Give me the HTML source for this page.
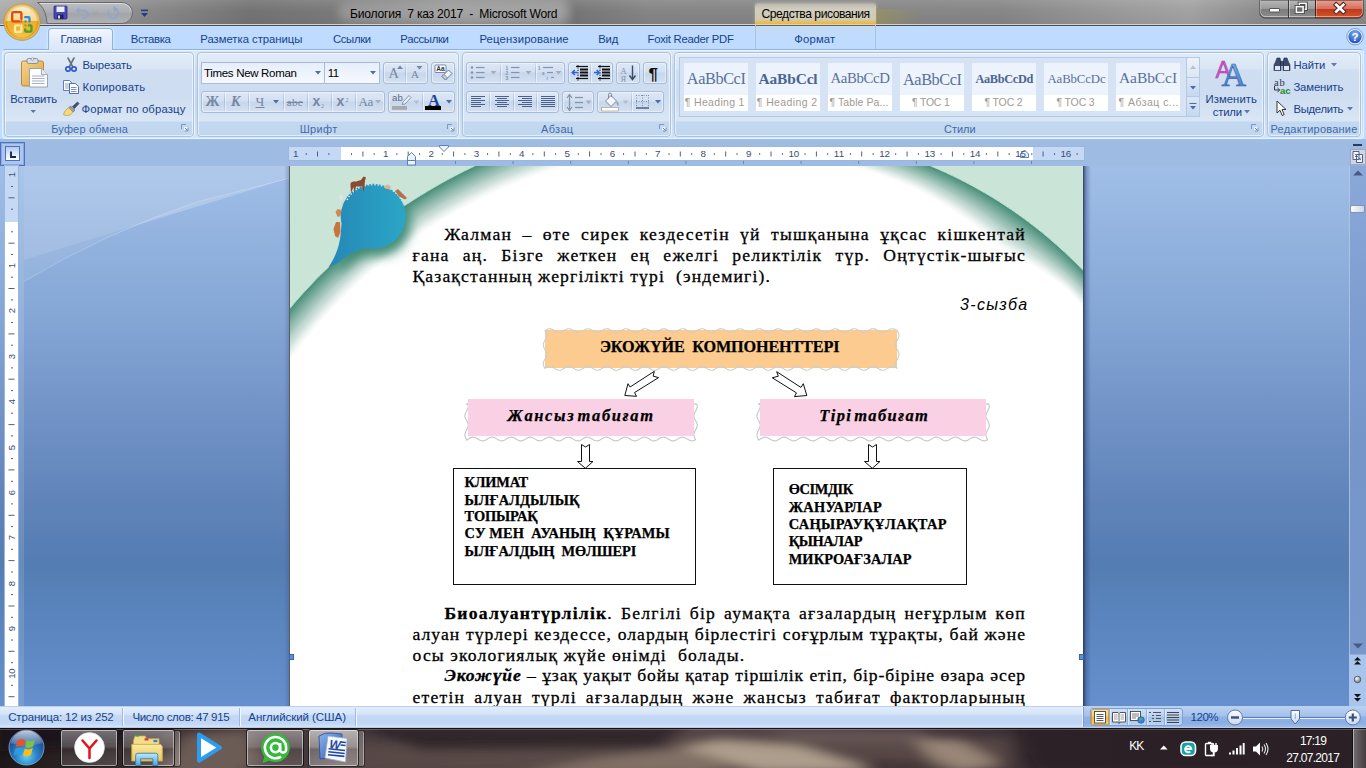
<!DOCTYPE html>
<html lang="kk"><head><meta charset="utf-8"><title>Биология 7 каз 2017 - Microsoft Word</title>
<style>
html,body{margin:0;padding:0;background:#000;}
body{width:1366px;height:768px;overflow:hidden;}
#screen{position:relative;width:1366px;height:768px;overflow:hidden;background:#BFDBFF;font-family:"Liberation Sans",sans-serif;}
.a{position:absolute;display:block;}
.t{position:absolute;white-space:pre;line-height:1;}
svg{position:absolute;overflow:visible;}
.grp{position:absolute;top:52px;height:85px;box-sizing:border-box;border:1px solid #a9c3e6;border-radius:4px;background:linear-gradient(180deg,#e2ecf8 0,#d9e5f4 16px,#cfdef1 17px,#cddcf0 40px,#d9e6f5 68px,#c2d8f0 69px,#c0d7f0 100%);box-shadow:inset 0 0 0 1px rgba(255,255,255,.55),1px 0 0 rgba(255,255,255,.6);}
.bg{position:absolute;box-sizing:border-box;border:1px solid #a7bcd9;border-radius:3px;background:linear-gradient(180deg,#dde8f6 0,#d3e0f2 45%,#c6d6ec 50%,#d4e1f2 100%);box-shadow:inset 0 0 0 1px rgba(255,255,255,.45);}
.sep{position:absolute;width:1px;background:linear-gradient(180deg,rgba(167,188,217,.2),#a7bcd9 50%,rgba(167,188,217,.2));box-shadow:1px 0 0 rgba(255,255,255,.5);}
.cb{position:absolute;box-sizing:border-box;border:1px solid #a7bcd9;background:linear-gradient(180deg,#e6eef9 0,#eef4fc 50%,#f6f9fe 100%);}
.ln{-webkit-text-stroke:0.3px #000;position:absolute;white-space:nowrap;line-height:1;font-family:"Liberation Serif",serif;font-size:17.6px;color:#000;text-align:justify;text-align-last:justify;box-sizing:border-box;}
.ln.l{text-align:left;text-align-last:left;white-space:pre;}
.bx{position:absolute;white-space:pre;line-height:1;font-family:"Liberation Serif",serif;font-weight:bold;color:#000;}

</style></head>
<body>
<div id="screen">
<div class="a" id="titlebar" style="left:0;top:0;width:1366px;height:24px;background:linear-gradient(90deg,#adadad 0,#a3a3a3 40px,#8a8a8a 150px,#747474 250px,#7a7a7a 330px,#8f8f8f 450px,#8a8a8a 560px,#777 575px,#868686 650px,#878787 1000px,#9c9c9c 1130px,#a3a3a3 1190px,#8d8d8d 1260px,#8a8a8a 1366px);"></div>
<div class="a" style="left:0;top:0;width:1366px;height:24px;background:linear-gradient(180deg,rgba(255,255,255,.10) 0,rgba(255,255,255,0) 10px,rgba(0,0,0,.05) 24px);"></div><div class="a" style="left:0;top:24px;width:1366px;height:1px;background:#d2d2d2;"></div><div class="a" style="left:0;top:25px;width:1366px;height:1px;background:#4c4c4c;"></div>
<div class="a" style="left:338px;top:3px;width:232px;height:19px;border-radius:9px;background:rgba(255,255,255,.20);filter:blur(4px);"></div>
<svg style="left:30px;top:0" width="110" height="26" viewBox="0 0 110 26"><defs><linearGradient id="qp" x1="0" y1="0" x2="0" y2="1"><stop offset="0" stop-color="#bcbfc2"/><stop offset=".45" stop-color="#abaeb2"/><stop offset=".55" stop-color="#a2a5a9"/><stop offset="1" stop-color="#b0b3b6"/></linearGradient></defs>
<path d="M7.500 2.500 H92 a10.500 10.500 0 0 1 0 21 H17 C16.500 14 13.500 7 7.500 2.500 Z" fill="url(#qp)" stroke="#6b6670" stroke-width="1"/><path d="M10 3.500 H92 a9.500 9.500 0 0 1 9.400 8" fill="none" stroke="#fff" stroke-opacity=".45"/></svg>
<div class="a" style="left:755px;top:4px;width:121px;height:20px;background:linear-gradient(180deg,rgba(226,222,204,.55) 0,rgba(222,217,198,.85) 25%,rgba(216,210,188,.9) 78%,#e9be55 90%,#f2b535 100%);box-shadow:0 -1px 3px rgba(226,222,204,.55);border-radius:2px 2px 0 0;"></div>
<div class="a" style="left:876px;top:9px;width:44px;height:15px;background:linear-gradient(90deg,rgba(160,150,80,.55),rgba(160,150,80,0));"></div>
<div class="a" id="tabrow" style="left:0;top:26px;width:1366px;height:25px;background:#BFDBFF;"></div>
<div class="a" style="left:755px;top:25px;width:121px;height:25px;background:linear-gradient(180deg,rgba(235,215,150,.18),rgba(191,219,255,0) 45%);border-left:1px solid #a9c2e4;border-right:1px solid #a9c2e4;box-sizing:border-box;"></div>
<div class="a" style="left:48px;top:28px;width:65px;height:22px;border-radius:4px 4px 0 0;background:linear-gradient(180deg,#f2f7fe 0,#e3edfb 50%,#dbe7f7 100%);border:1px solid #8db2e3;border-bottom:none;box-sizing:border-box;box-shadow:0 0 3px rgba(255,255,255,.9);"></div>
<svg style="left:0;top:0" width="48" height="48" viewBox="0 0 48 48">
<defs><linearGradient id="ob" x1="0" y1="0" x2="0" y2="1"><stop offset="0" stop-color="#fdf3d3"/><stop offset=".46" stop-color="#f9d78e"/><stop offset=".47" stop-color="#f1ab29"/><stop offset=".8" stop-color="#f4b535"/><stop offset="1" stop-color="#fbd264"/></linearGradient>
<radialGradient id="obg" cx="50%" cy="50%" r="50%"><stop offset=".82" stop-color="#000" stop-opacity="0"/><stop offset="1" stop-color="#b5700c" stop-opacity=".35"/></radialGradient></defs>
<circle cx="22" cy="22.600" r="18.400" fill="#5b5b66" opacity=".35"/>
<circle cx="22" cy="22" r="17.500" fill="url(#ob)"/><circle cx="22" cy="22" r="17.500" fill="url(#obg)"/>
<circle cx="22" cy="22" r="17.300" fill="none" stroke="#f7c22f" stroke-width="1.300"/><circle cx="22" cy="22" r="18" fill="none" stroke="#b98a2e" stroke-width=".5"/>
<g fill="none" stroke-width="2.300" stroke-linejoin="round" stroke-linecap="round">
<path d="M19.300 21.400 H13.400 a1.200 1.200 0 0 1 -1.200 -1.200 V13.400 a1.200 1.200 0 0 1 1.200 -1.200 h6.800 a1.200 1.200 0 0 1 1.200 1.200 V19" stroke="#dd4a12"/>
<path d="M25.200 17.200 h3.300 a1 1 0 0 1 1 1 v3.300" stroke="#2b8be0"/>
<path d="M21.400 27 V31 a1 1 0 0 1 -1 1 h-4.400 a1 1 0 0 1 -1 -1 v-4.600 a1 1 0 0 1 1 -1 h3" stroke="#fbe9a6"/>
<path d="M25.200 29.300 v1.400 a1 1 0 0 0 1 1 h4.300 a1 1 0 0 0 1 -1 v-4.300 a1 1 0 0 0 -1 -1 h-1.500" stroke="#4aa02c"/>
</g>
<circle cx="21.400" cy="21.400" r="1.150" fill="#e8501a"/><circle cx="25.500" cy="21.400" r="1.150" fill="#2b8be0"/><circle cx="21.400" cy="25.500" r="1.150" fill="#fbe9a6"/><circle cx="25.500" cy="25.500" r="1.150" fill="#63b93a"/>
</svg>
<svg style="left:50px;top:4px" width="100" height="18" viewBox="0 0 100 18">
<rect x="4" y="2" width="13" height="13" rx="1" fill="#4b46b6" stroke="#2d2a7a" stroke-width=".8"/><rect x="6.5" y="2.5" width="8" height="5.5" fill="#e9ecf8"/><rect x="7" y="10.5" width="6.5" height="4.5" fill="#23225a"/><rect x="8" y="11.5" width="2" height="3" fill="#d8dbf0"/>
<path d="M27.5 6.5 h6.5 a3.6 3.6 0 0 1 0 7.4 h-2" fill="none" stroke="#93a6c9" stroke-width="2"/><path d="M29.5 3 L25.5 6.6 L29.5 10.2 Z" fill="#93a6c9"/>
<path d="M43 7 l2.3 2.6 L47.6 7" fill="none" stroke="#9aa6b8" stroke-width="1.1"/>
<path d="M66.5 5.5 a5 5 0 1 1 -7.4 1" fill="none" stroke="#93a6c9" stroke-width="2"/><path d="M63.2 2.2 L68.2 4.8 L64 8.4 Z" fill="#93a6c9"/>
<rect x="91" y="5.6" width="7" height="1.6" fill="#1d3f8a"/><path d="M91 9 h7 l-3.5 4 z" fill="#1d3f8a"/>
</svg>
<svg style="left:1258px;top:0" width="108" height="22" viewBox="0 0 108 22">
<defs><linearGradient id="wc1" x1="0" y1="0" x2="0" y2="1"><stop offset="0" stop-color="#b9b9b9"/><stop offset=".48" stop-color="#9a9a9a"/><stop offset=".5" stop-color="#7c7c7c"/><stop offset="1" stop-color="#8d8d8d"/></linearGradient>
<linearGradient id="wc2" x1="0" y1="0" x2="0" y2="1"><stop offset="0" stop-color="#e7a293"/><stop offset=".48" stop-color="#d4705c"/><stop offset=".5" stop-color="#c2371b"/><stop offset="1" stop-color="#d2562f"/></linearGradient></defs>
<path d="M2 0 V13 a5 5 0 0 0 5 5 H57.5 V0 Z" fill="url(#wc1)" stroke="#3d3d3d" stroke-width="1"/>
<path d="M57.5 0 V18 H100 a5 5 0 0 0 5 -5 V0 Z" fill="url(#wc2)" stroke="#3d2020" stroke-width="1"/>
<path d="M2.5 0 V13 a4.5 4.5 0 0 0 4.500 4.500 H100 a4.500 4.500 0 0 0 4.500 -4.500 V0" fill="none" stroke="rgba(255,255,255,.45)" stroke-width="1" transform="translate(0,-1)"/>
<line x1="30.5" y1="0" x2="30.500" y2="18" stroke="#3d3d3d"/><line x1="31.5" y1="0" x2="31.500" y2="17" stroke="rgba(255,255,255,.35)"/>
<line x1="58.5" y1="0" x2="58.500" y2="17" stroke="rgba(255,255,255,.35)"/>
<rect x="11.5" y="8.500" width="10" height="3.500" fill="#fff" stroke="#4a4a4a" stroke-width=".9" rx=".5"/>
<rect x="41.300" y="3.300" width="6.800" height="6" fill="none" stroke="#3f3f3f" stroke-width="3.200"/><rect x="41.300" y="3.300" width="6.800" height="6" fill="none" stroke="#fff" stroke-width="1.500"/>
<rect x="38.300" y="6.600" width="6.800" height="5.800" fill="#777" stroke="#3f3f3f" stroke-width="3.200"/><rect x="38.300" y="6.600" width="6.800" height="5.800" fill="#6a6a6a" stroke="#fff" stroke-width="1.500"/>
<path d="M78.200 4.800 L85.300 11.500 M85.300 4.800 L78.200 11.500" stroke="#4a201a" stroke-width="4.600" stroke-linecap="square"/><path d="M78.200 4.800 L85.300 11.500 M85.300 4.800 L78.200 11.500" stroke="#fff" stroke-width="2.700" stroke-linecap="square"/>
</svg>
<svg style="left:1346px;top:28px" width="18" height="18" viewBox="0 0 18 18"><defs><radialGradient id="hp" cx="50%" cy="30%" r="70%"><stop offset="0" stop-color="#7fb0f5"/><stop offset="1" stop-color="#1749b8"/></radialGradient></defs><circle cx="9" cy="8.700" r="7.300" fill="url(#hp)" stroke="#e8f0ff" stroke-width="1.300"/><circle cx="9" cy="8.700" r="8.200" fill="none" stroke="#5b80c4" stroke-width=".7"/><text x="9" y="12.800" text-anchor="middle" font-family="Liberation Sans, sans-serif" font-weight="bold" font-size="11.500" fill="#fff">?</text></svg>
<span class="t" style='left:350.0px;top:8px;font-size:12.1px;color:#000;letter-spacing:-0.226px;'>Биология  7 каз 2017  -  Microsoft Word</span>
<span class="t" style='left:761.5px;top:8px;font-size:12.1px;color:#000;letter-spacing:-0.452px;'>Средства рисования</span>
<span class="t" style='left:60.5px;top:34px;font-size:11.3px;color:#15428B;letter-spacing:-0.286px;'>Главная</span>
<span class="t" style='left:130.7px;top:34px;font-size:11.3px;color:#15428B;letter-spacing:-0.314px;'>Вставка</span>
<span class="t" style='left:200.3px;top:34px;font-size:11.3px;color:#15428B;letter-spacing:-0.023px;'>Разметка страницы</span>
<span class="t" style='left:333.0px;top:34px;font-size:11.3px;color:#15428B;letter-spacing:-0.347px;'>Ссылки</span>
<span class="t" style='left:400.3px;top:34px;font-size:11.3px;color:#15428B;letter-spacing:-0.302px;'>Рассылки</span>
<span class="t" style='left:479.4px;top:34px;font-size:11.3px;color:#15428B;letter-spacing:0.155px;'>Рецензирование</span>
<span class="t" style='left:598.3px;top:34px;font-size:11.3px;color:#15428B;letter-spacing:-0.246px;'>Вид</span>
<span class="t" style='left:647.5px;top:34px;font-size:11.3px;color:#15428B;letter-spacing:-0.269px;'>Foxit Reader PDF</span>
<span class="t" style='left:794.3px;top:34px;font-size:11.3px;color:#15428B;letter-spacing:0.143px;'>Формат</span>
<div class="a" id="ribbon" style="left:2px;top:49px;width:1362px;height:90px;box-sizing:border-box;border:1px solid #8db2e3;border-bottom:1.500px solid #e4fbff;border-left-color:#dff4ff;border-right-color:#dff4ff;border-radius:4px;background:linear-gradient(180deg,#dbe7f6 0,#cbdcf1 18px,#c4d7ef 50px,#d3e2f5 100%);box-shadow:inset 0 1px 0 #eef4fc;"></div>
<div class="a" style="left:49px;top:49px;width:63px;height:2px;background:#dbe7f7;"></div>
<div class="grp" style="left:4px;width:190px;"></div>
<div class="grp" style="left:197px;width:262px;"></div>
<div class="grp" style="left:462px;width:209px;"></div>
<div class="grp" style="left:674px;width:590px;"></div>
<div class="grp" style="left:1267px;width:94px;"></div>
<svg style="left:180.5px;top:124px" width="8" height="8" viewBox="0 0 8 8"><path d="M.5 5 V.5 H5" fill="none" stroke="#7f98c0"/><path d="M3 3 h4.500 v4.500 h-4.500 z" fill="#fff" opacity=".7"/><path d="M7 3.500 V7 H3.500 M4 4 L6.500 6.500" fill="none" stroke="#6a86b0"/></svg>
<svg style="left:447px;top:124px" width="8" height="8" viewBox="0 0 8 8"><path d="M.5 5 V.5 H5" fill="none" stroke="#7f98c0"/><path d="M3 3 h4.500 v4.500 h-4.500 z" fill="#fff" opacity=".7"/><path d="M7 3.500 V7 H3.500 M4 4 L6.500 6.500" fill="none" stroke="#6a86b0"/></svg>
<svg style="left:659px;top:124px" width="8" height="8" viewBox="0 0 8 8"><path d="M.5 5 V.5 H5" fill="none" stroke="#7f98c0"/><path d="M3 3 h4.500 v4.500 h-4.500 z" fill="#fff" opacity=".7"/><path d="M7 3.500 V7 H3.500 M4 4 L6.500 6.500" fill="none" stroke="#6a86b0"/></svg>
<svg style="left:1251px;top:124px" width="8" height="8" viewBox="0 0 8 8"><path d="M.5 5 V.5 H5" fill="none" stroke="#7f98c0"/><path d="M3 3 h4.500 v4.500 h-4.500 z" fill="#fff" opacity=".7"/><path d="M7 3.500 V7 H3.500 M4 4 L6.500 6.500" fill="none" stroke="#6a86b0"/></svg>
<svg style="left:18px;top:56px" width="34" height="60" viewBox="0 0 34 60">
<defs><linearGradient id="cbd" x1="0" y1="0" x2="1" y2="1"><stop offset="0" stop-color="#f6d48c"/><stop offset="1" stop-color="#d9a441"/></linearGradient></defs>
<rect x="3.5" y="5" width="22" height="25" rx="2" fill="url(#cbd)" stroke="#b78a3c"/>
<rect x="9" y="2.500" width="11" height="5" rx="1.500" fill="#d9dde6" stroke="#7a7f8c" stroke-width=".8"/><circle cx="14.500" cy="3" r="1.300" fill="#f4f4f4" stroke="#7a7f8c" stroke-width=".6"/>
<path d="M11.500 12.500 H23.500 L29.500 18.500 V31 H11.500 Z" fill="#fdfdfe" stroke="#8f9bb3" stroke-width=".9"/><path d="M23.500 12.500 V18.500 H29.500" fill="#e4e9f2" stroke="#8f9bb3" stroke-width=".8"/>
<g stroke="#9aa7be" stroke-width=".9"><line x1="14" y1="20" x2="26.500" y2="20"/><line x1="14" y1="22.500" x2="26.500" y2="22.500"/><line x1="14" y1="25" x2="26.500" y2="25"/><line x1="14" y1="27.500" x2="26.500" y2="27.500"/></g>
<path d="M12.500 54 h5.400 l-2.700 3 z" fill="#5772a3"/></svg>
<svg style="left:64px;top:57px" width="14" height="16" viewBox="0 0 14 16"><path d="M4 1 L8.800 10 M10 1 L5.200 10" stroke="#6b7078" stroke-width="1.600" stroke-linecap="round"/><circle cx="4" cy="12" r="2.200" fill="none" stroke="#2f5bd0" stroke-width="1.700"/><circle cx="10" cy="12" r="2.200" fill="none" stroke="#2f5bd0" stroke-width="1.700"/></svg>
<svg style="left:62px;top:79px" width="18" height="16" viewBox="0 0 18 16"><path d="M1.500 1.500 h6 l3 3 v7 h-9 z" fill="#fff" stroke="#5570a8" stroke-width=".9"/><g stroke="#6f88bd" stroke-width=".8"><line x1="3" y1="5" x2="8" y2="5"/><line x1="3" y1="7" x2="8" y2="7"/><line x1="3" y1="9" x2="8" y2="9"/></g><path d="M7.500 4.500 h6 l3 3 v7 h-9 z" fill="#fff" stroke="#3f5fa5" stroke-width=".9"/><g stroke="#4f73c2" stroke-width=".8"><line x1="9" y1="8.500" x2="14.500" y2="8.500"/><line x1="9" y1="10.500" x2="14.500" y2="10.500"/><line x1="9" y1="12.500" x2="14.500" y2="12.500"/></g></svg>
<svg style="left:62px;top:101px" width="18" height="16" viewBox="0 0 18 16"><path d="M10.500 5.500 L15.500 1 L17 2.600 L12.500 7.500 Z" fill="#4a4f7a" stroke="#2d3055" stroke-width=".6"/><path d="M8.500 5 L13 9.200 L11 11 L6.800 6.800 Z" fill="#9aa0ad" stroke="#5c6270" stroke-width=".6"/><path d="M6.800 6.800 L11 11 C9 14.500 5 15.500 1.500 13.500 C2.500 10.500 4 8 6.800 6.800 Z" fill="#f3d97a" stroke="#b5963a" stroke-width=".7"/></svg>
<div class="cb" style="left:201px;top:62px;width:124px;height:22px;"></div>
<div class="cb" style="left:324px;top:62px;width:56px;height:22px;"></div>
<svg style="left:314.5px;top:71px" width="6" height="4"><path d="M0 0 h6 l-3 3.500 z" fill="#4d6da3"/></svg>
<svg style="left:369.5px;top:71px" width="6" height="4"><path d="M0 0 h6 l-3 3.500 z" fill="#4d6da3"/></svg>
<div class="bg" style="left:383px;top:62px;width:45px;height:22px;"></div><div class="sep" style="left:405px;top:63px;height:20px;"></div>
<div class="bg" style="left:431px;top:62px;width:24px;height:22px;"></div>
<div class="bg" style="left:201px;top:91px;width:184px;height:22px;"></div>
<div class="sep" style="left:224px;top:92px;height:20px;"></div>
<div class="sep" style="left:248px;top:92px;height:20px;"></div>
<div class="sep" style="left:282.5px;top:92px;height:20px;"></div>
<div class="sep" style="left:306.5px;top:92px;height:20px;"></div>
<div class="sep" style="left:330.5px;top:92px;height:20px;"></div>
<div class="sep" style="left:354.5px;top:92px;height:20px;"></div>
<div class="bg" style="left:388px;top:91px;width:67px;height:22px;"></div><div class="sep" style="left:422px;top:92px;height:20px;"></div>
<svg style="left:397px;top:65px" width="26" height="6"><path d="M0 4 l3 -3.500 l3 3.500 z" fill="#78869f"/><path d="M19.500 1 l3 3.500 l3 -3.500 z" fill="#78869f"/></svg>
<svg style="left:434px;top:64px" width="19" height="18" viewBox="0 0 19 18"><rect x="1" y="1" width="11" height="7.500" rx="1" fill="#fff" stroke="#5d6f92" stroke-width=".8"/><text x="2.300" y="7.300" font-family="Liberation Sans, sans-serif" font-size="6.500" font-weight="bold" fill="#26304a">Аа</text><path d="M8 12.500 L14.500 6 L18 9.500 L11.500 16 Z" fill="#f1f3f8" stroke="#5d6f92" stroke-width=".9"/><path d="M8 12.500 L10 10.500 L13.500 14 L11.500 16 Z" fill="#c9cfdd" stroke="#5d6f92" stroke-width=".7"/></svg>
<svg style="left:273px;top:100px" width="6" height="4"><path d="M0 0 h6 l-3 3.500 z" fill="#4d6da3"/></svg>
<svg style="left:375px;top:100px" width="6" height="4"><path d="M0 0 h6 l-3 3.500 z" fill="#a9adb8"/></svg>
<svg style="left:391px;top:93px" width="30" height="19" viewBox="0 0 30 19"><path d="M12 9 L18 2.500 L20 4.500 L14 11 L11.300 11.500 Z" fill="#eef1f7" stroke="#6d7a96" stroke-width=".8"/><rect x="1" y="13" width="15" height="3.800" fill="#a9a9a9"/><path d="M22.500 7.500 h6 l-3 3.500 z" fill="#b9bcc6"/></svg>
<div class="a" style="left:425px;top:106px;width:16px;height:4px;background:#000;"></div>
<svg style="left:445.5px;top:100px" width="6" height="4"><path d="M0 0 h6 l-3 3.500 z" fill="#4d6da3"/></svg>
<span class="t" style='left:51.2px;top:124px;font-size:11px;color:#3e6aaa;letter-spacing:0.171px;'>Буфер обмена</span>
<span class="t" style='left:299.7px;top:124px;font-size:11px;color:#3e6aaa;letter-spacing:0.339px;'>Шрифт</span>
<span class="t" style='left:541.0px;top:124px;font-size:11px;color:#3e6aaa;letter-spacing:0.328px;'>Абзац</span>
<span class="t" style='left:944.0px;top:124px;font-size:11px;color:#3e6aaa;letter-spacing:-0.041px;'>Стили</span>
<span class="t" style='left:1270.5px;top:124px;font-size:11px;color:#3e6aaa;letter-spacing:0.236px;'>Редактирование</span>
<span class="t" style='left:10.2px;top:94px;font-size:11.3px;color:#15428B;letter-spacing:-0.136px;'>Вставить</span>
<span class="t" style='left:82.4px;top:60px;font-size:11.3px;color:#15428B;letter-spacing:-0.106px;'>Вырезать</span>
<span class="t" style='left:82.4px;top:82px;font-size:11.3px;color:#15428B;letter-spacing:0.227px;'>Копировать</span>
<span class="t" style='left:81.6px;top:104px;font-size:11.3px;color:#15428B;letter-spacing:0.153px;'>Формат по образцу</span>
<span class="t" style='left:204.0px;top:68px;font-size:11.5px;color:#000;letter-spacing:-0.317px;'>Times New Roman</span>
<span class="t" style='left:327.7px;top:68px;font-size:11.5px;color:#000;letter-spacing:-0.527px;'>11</span>
<span class="t" style='left:388.6px;top:66px;font-size:14.5px;color:#78869f;font-family:"Liberation Serif", serif;letter-spacing:-0.084px;'>A</span>
<span class="t" style='left:411.0px;top:69px;font-size:11px;color:#78869f;font-family:"Liberation Serif", serif;letter-spacing:-1.353px;'>A</span>
<span class="t" style='left:205.5px;top:95px;font-size:14px;color:#78869f;font-family:"Liberation Serif", serif;font-weight:bold;letter-spacing:0.656px;'>Ж</span>
<span class="t" style='left:231.0px;top:95px;font-size:14px;color:#78869f;font-family:"Liberation Serif", serif;font-weight:bold;font-style:italic;letter-spacing:2.500px;'>К</span>
<span class="t" style='left:255.6px;top:95px;font-size:13.5px;color:#78869f;font-family:"Liberation Serif", serif;letter-spacing:0.119px;text-decoration:underline;'>Ч</span>
<span class="t" style='left:286.8px;top:97px;font-size:11px;color:#78869f;font-family:"Liberation Serif", serif;letter-spacing:0.311px;text-decoration:line-through;'>abc</span>
<span class="t" style='left:312.5px;top:94px;font-size:14px;color:#78869f;font-weight:bold;letter-spacing:-0.297px;'>x</span>
<span class="t" style='left:321.0px;top:103px;font-size:6px;color:#78869f;font-family:"Liberation Serif", serif;'>2</span>
<span class="t" style='left:336.5px;top:94px;font-size:14px;color:#78869f;font-weight:bold;letter-spacing:-0.297px;'>x</span>
<span class="t" style='left:345.5px;top:97px;font-size:6px;color:#78869f;font-family:"Liberation Serif", serif;'>2</span>
<span class="t" style='left:358.5px;top:95px;font-size:13px;color:#78869f;font-family:"Liberation Serif", serif;letter-spacing:-0.336px;'>Aa</span>
<span class="t" style='left:392.0px;top:93px;font-size:9.5px;color:#5a6784;letter-spacing:0.211px;'>ab</span>
<span class="t" style='left:428.0px;top:93px;font-size:16.5px;color:#1f3f9e;font-family:"Liberation Serif", serif;font-weight:bold;letter-spacing:-0.922px;'>A</span>
<div class="bg" style="left:466px;top:62px;width:99px;height:22px;"></div>
<div class="sep" style="left:499.5px;top:63px;height:20px;"></div>
<div class="sep" style="left:534.5px;top:63px;height:20px;"></div>
<div class="bg" style="left:568px;top:62px;width:45px;height:22px;"></div><div class="sep" style="left:590px;top:63px;height:20px;"></div>
<div class="bg" style="left:616px;top:62px;width:24px;height:22px;"></div>
<div class="bg" style="left:643px;top:62px;width:24px;height:22px;"></div>
<svg style="left:470px;top:65px" width="92" height="17" viewBox="0 0 92 17">
<g fill="#8593ab"><circle cx="2" cy="2.500" r="1.300"/><circle cx="2" cy="7.500" r="1.300"/><circle cx="2" cy="12.500" r="1.300"/></g>
<g stroke="#8593ab" stroke-width="1.200"><line x1="6" y1="2.500" x2="14.500" y2="2.500"/><line x1="6" y1="7.500" x2="14.500" y2="7.500"/><line x1="6" y1="12.500" x2="14.500" y2="12.500"/></g>
<path d="M20.500 6 h6 l-3 3.500 z" fill="#a9adb8"/>
<g stroke="#8593ab" stroke-width="1.200"><line x1="41" y1="2.500" x2="49.500" y2="2.500"/><line x1="41" y1="7.500" x2="49.500" y2="7.500"/><line x1="41" y1="12.500" x2="49.500" y2="12.500"/></g>
<g font-family="Liberation Sans, sans-serif" font-size="5" fill="#8593ab" font-weight="bold"><text x="35.500" y="4.500">1</text><text x="35.500" y="9.500">2</text><text x="35.500" y="14.500">3</text></g>
<path d="M55.500 6 h6 l-3 3.500 z" fill="#a9adb8"/>
<g stroke="#8593ab" stroke-width="1.200"><line x1="73" y1="2.500" x2="83" y2="2.500"/><line x1="77" y1="7.500" x2="83" y2="7.500"/><line x1="81" y1="12.500" x2="84" y2="12.500"/></g>
<g font-family="Liberation Sans, sans-serif" font-size="4.500" fill="#8593ab" font-weight="bold"><text x="68" y="4.500">1</text><text x="72" y="9.500">a</text><text x="76.500" y="14.500">i</text></g>
<path d="M85.500 6 h6 l-3 3.500 z" fill="#a9adb8"/></svg>
<svg style="left:570.5px;top:65px" width="18" height="17" viewBox="0 0 18 17"><g stroke="#111"><line x1="5" y1="1.500" x2="17" y2="1.500" stroke-width="1.200"/><line x1="9" y1="4.500" x2="17" y2="4.500" stroke-width="2"/><line x1="9" y1="7.500" x2="17" y2="7.500" stroke-width="2"/><line x1="9" y1="10.500" x2="17" y2="10.500" stroke-width="2"/><line x1="5" y1="13.500" x2="17" y2="13.500" stroke-width="1.200"/></g><line x1="7" y1="0" x2="7" y2="16" stroke="#111" stroke-width="1" stroke-dasharray="1.200 1.200"/><path d="M6.500 7.500 H1.500 M3.800 5 L1.200 7.500 L3.800 10" fill="none" stroke="#2b62d9" stroke-width="1.500"/></svg>
<svg style="left:592.5px;top:65px" width="18" height="17" viewBox="0 0 18 17"><g stroke="#111"><line x1="5" y1="1.500" x2="17" y2="1.500" stroke-width="1.200"/><line x1="9" y1="4.500" x2="17" y2="4.500" stroke-width="2"/><line x1="9" y1="7.500" x2="17" y2="7.500" stroke-width="2"/><line x1="9" y1="10.500" x2="17" y2="10.500" stroke-width="2"/><line x1="5" y1="13.500" x2="17" y2="13.500" stroke-width="1.200"/></g><line x1="7" y1="0" x2="7" y2="16" stroke="#111" stroke-width="1" stroke-dasharray="1.200 1.200"/><path d="M1 7.500 H6 M3.700 5 L6.300 7.500 L3.700 10" fill="none" stroke="#2b62d9" stroke-width="1.500"/></svg>
<svg style="left:628px;top:65px" width="9" height="16" viewBox="0 0 9 16"><path d="M4.500 0.500 V14 M1.500 10.500 L4.500 14.500 L7.500 10.500" fill="none" stroke="#3d4a66" stroke-width="1.400"/></svg>
<div class="bg" style="left:466px;top:91px;width:93px;height:22px;"></div>
<div class="sep" style="left:489px;top:92px;height:20px;"></div>
<div class="sep" style="left:512.5px;top:92px;height:20px;"></div>
<div class="sep" style="left:535.5px;top:92px;height:20px;"></div>
<div class="bg" style="left:562px;top:91px;width:32px;height:22px;"></div>
<div class="bg" style="left:597px;top:91px;width:67px;height:22px;"></div><div class="sep" style="left:630.500px;top:92px;height:20px;"></div>
<svg style="left:471px;top:95px" width="14" height="15" viewBox="0 0 14 15"><g stroke="#4b5f8a" stroke-width="1"><line x1="0" y1="1.5" x2="14" y2="1.5"/><line x1="0" y1="3.5" x2="10" y2="3.5"/><line x1="0" y1="5.5" x2="14" y2="5.5"/><line x1="0" y1="7.5" x2="10" y2="7.5"/><line x1="0" y1="9.5" x2="14" y2="9.5"/><line x1="0" y1="11.5" x2="10" y2="11.5"/></g></svg>
<svg style="left:494.5px;top:95px" width="14" height="15" viewBox="0 0 14 15"><g stroke="#4b5f8a" stroke-width="1"><line x1="0" y1="1.5" x2="14" y2="1.5"/><line x1="2" y1="3.5" x2="12" y2="3.5"/><line x1="0" y1="5.5" x2="14" y2="5.5"/><line x1="2" y1="7.5" x2="12" y2="7.5"/><line x1="0" y1="9.5" x2="14" y2="9.5"/><line x1="2" y1="11.5" x2="12" y2="11.5"/></g></svg>
<svg style="left:518px;top:95px" width="14" height="15" viewBox="0 0 14 15"><g stroke="#4b5f8a" stroke-width="1"><line x1="0" y1="1.5" x2="14" y2="1.5"/><line x1="4" y1="3.5" x2="14" y2="3.5"/><line x1="0" y1="5.5" x2="14" y2="5.5"/><line x1="4" y1="7.5" x2="14" y2="7.5"/><line x1="0" y1="9.5" x2="14" y2="9.5"/><line x1="4" y1="11.5" x2="14" y2="11.5"/></g></svg>
<svg style="left:541px;top:95px" width="14" height="15" viewBox="0 0 14 15"><g stroke="#4b5f8a" stroke-width="1"><line x1="0" y1="1.5" x2="14" y2="1.5"/><line x1="0" y1="3.5" x2="14" y2="3.5"/><line x1="0" y1="5.5" x2="14" y2="5.5"/><line x1="0" y1="7.5" x2="14" y2="7.5"/><line x1="0" y1="9.5" x2="14" y2="9.5"/><line x1="0" y1="11.5" x2="14" y2="11.5"/></g></svg>
<svg style="left:566px;top:93px" width="26" height="19" viewBox="0 0 26 19"><path d="M3.500 2 V17 M1 5 L3.500 1.500 L6 5 M1 14 L3.500 17.500 L6 14" fill="none" stroke="#8593ab" stroke-width="1.200"/><g stroke="#8593ab" stroke-width="1.300"><line x1="9" y1="4.500" x2="17" y2="4.500"/><line x1="9" y1="9.500" x2="17" y2="9.500"/><line x1="9" y1="14.500" x2="17" y2="14.500"/></g><path d="M19.500 7.500 h6 l-3 3.500 z" fill="#a9adb8"/></svg>
<svg style="left:600px;top:93px" width="30" height="19" viewBox="0 0 30 19"><path d="M5.500 8 L11 2.500 L16.500 8 L11 13.500 Z" fill="#f5f7fb" stroke="#6d7a96" stroke-width=".9"/><path d="M8.500 5.500 V1.500 a1.500 1.500 0 0 1 3 0 V4" fill="none" stroke="#6d7a96" stroke-width=".8"/><path d="M16.500 8 c2 1 2.500 3 2 5 c-1.500 -1 -2.500 -2.500 -2 -5z" fill="#8ea0c2"/><rect x="1.500" y="14.500" width="17" height="3.500" fill="#fdfdfd" stroke="#a8a08c" stroke-width=".7"/><path d="M22.500 7.500 h6 l-3 3.500 z" fill="#b9bcc6"/></svg>
<svg style="left:635px;top:94px" width="16" height="16" viewBox="0 0 16 16"><g stroke="#7f8ca8" stroke-width="1" stroke-dasharray="1 1.500"><line x1="1" y1="1.500" x2="14" y2="1.500"/><line x1="1" y1="7.500" x2="14" y2="7.500"/><line x1="1.500" y1="1" x2="1.500" y2="14"/><line x1="7.500" y1="1" x2="7.500" y2="14"/><line x1="13.500" y1="1" x2="13.500" y2="14"/></g><line x1="1" y1="14" x2="14" y2="14" stroke="#3b5079" stroke-width="1.300"/></svg>
<svg style="left:654.5px;top:100px" width="6" height="4"><path d="M0 0 h6 l-3 3.500 z" fill="#4d6da3"/></svg>
<div class="a" style="left:679px;top:57px;width:521px;height:60px;box-sizing:border-box;border:1px solid #b4c9e6;background:#d6e3f4;"></div>
<div class="a" style="left:684px;top:63px;width:64px;height:48px;background:linear-gradient(180deg,#edf3fd 0,#eef4fd 32px,#fff 32px,#fff 100%);overflow:hidden;"></div>
<div class="a" style="left:756px;top:63px;width:64px;height:48px;background:linear-gradient(180deg,#edf3fd 0,#eef4fd 32px,#fff 32px,#fff 100%);overflow:hidden;"></div>
<div class="a" style="left:828px;top:63px;width:64px;height:48px;background:linear-gradient(180deg,#edf3fd 0,#eef4fd 32px,#fff 32px,#fff 100%);overflow:hidden;"></div>
<div class="a" style="left:900px;top:63px;width:64px;height:48px;background:linear-gradient(180deg,#edf3fd 0,#eef4fd 32px,#fff 32px,#fff 100%);overflow:hidden;"></div>
<div class="a" style="left:972px;top:63px;width:64px;height:48px;background:linear-gradient(180deg,#edf3fd 0,#eef4fd 32px,#fff 32px,#fff 100%);overflow:hidden;"></div>
<div class="a" style="left:1044px;top:63px;width:64px;height:48px;background:linear-gradient(180deg,#edf3fd 0,#eef4fd 32px,#fff 32px,#fff 100%);overflow:hidden;"></div>
<div class="a" style="left:1116px;top:63px;width:64px;height:48px;background:linear-gradient(180deg,#edf3fd 0,#eef4fd 32px,#fff 32px,#fff 100%);overflow:hidden;"></div>
<div class="a" style="left:1186px;top:57px;width:14px;height:60px;box-sizing:border-box;border:1px solid #b4c9e6;background:linear-gradient(180deg,#eef2f8 0,#dde6f2 19px,#b4c9e6 19px,#b4c9e6 20px,#dbe7f6 20px,#c5d8ee 38px,#b4c9e6 38px,#b4c9e6 39px,#dbe7f6 39px,#c5d8ee 100%);border-radius:2px;"></div>
<svg style="left:1189px;top:58px" width="8" height="59" viewBox="0 0 8 59"><path d="M1 11 L4 7.500 L7 11 z" fill="#b8bfcb"/><path d="M1 28 h6 l-3 3.500 z" fill="#4d6da3"/><path d="M.5 45.500 h7" stroke="#4d6da3"/><path d="M1 48 h6 l-3 3.500 z" fill="#4d6da3"/></svg>
<svg style="left:1244.4px;top:109.5px" width="6" height="4"><path d="M0 0 h6 l-3 3.500 z" fill="#5c7bb0"/></svg>
<svg style="left:1212px;top:56px" width="38" height="34" viewBox="0 0 38 34"><defs><linearGradient id="ca" x1="0" y1="0" x2="0" y2="1"><stop offset="0" stop-color="#8fb6ea"/><stop offset="1" stop-color="#3f78c8"/></linearGradient></defs>
<text x="3.500" y="22" font-family="Liberation Sans, sans-serif" font-size="23" font-weight="normal" fill="#c858c4" stroke="#a636a4" stroke-width=".5">A</text>
<text x="9.500" y="30" font-family="Liberation Serif, serif" font-size="34" fill="url(#ca)" stroke="#2f64b3" stroke-width=".7">A</text></svg>
<svg style="left:1330.6px;top:62.5px" width="6" height="4"><path d="M0 0 h6 l-3 3.500 z" fill="#5c7bb0"/></svg>
<svg style="left:1347.2px;top:106.8px" width="6" height="4"><path d="M0 0 h6 l-3 3.500 z" fill="#5c7bb0"/></svg>
<svg style="left:1273px;top:57px" width="18" height="15" viewBox="0 0 18 15"><g fill="#3c4a6e" stroke="#202a45" stroke-width=".6"><path d="M2.500 5 L4 1 h3 L8 5 V13.500 H1 V8 Z"/><path d="M15.500 5 L14 1 h-3 L10 5 V13.500 H17 V8 Z"/><rect x="7.500" y="4.500" width="3" height="4"/></g><rect x="2" y="9" width="5" height="4" fill="#dfe6f3"/><rect x="11" y="9" width="5" height="4" fill="#dfe6f3"/></svg>
<svg style="left:1273px;top:86px" width="8" height="7" viewBox="0 0 8 7"><path d="M1.500 0 V4 H6.500 M4.500 2 L6.700 4 L4.500 6" fill="none" stroke="#2b3553" stroke-width="1"/></svg>
<svg style="left:1276px;top:100px" width="12" height="17" viewBox="0 0 12 17"><path d="M1 1 V13 L4 10.300 L6.200 15.500 L8.200 14.600 L6 9.500 H10 Z" fill="#fff" stroke="#222" stroke-width=".9" stroke-linejoin="round"/></svg>
<span class="t" style='left:620.5px;top:67px;font-size:8.5px;color:#8593ab;font-family:"Liberation Serif", serif;letter-spacing:-0.141px;'>А</span>
<span class="t" style='left:620.5px;top:75px;font-size:8.5px;color:#8593ab;font-family:"Liberation Serif", serif;letter-spacing:0.328px;'>Я</span>
<span class="t" style='left:648.5px;top:66px;font-size:17px;color:#111;font-weight:bold;letter-spacing:2.531px;'>¶</span>
<span class="t" style='left:686.8px;top:71px;font-size:16.3px;color:#58719b;font-family:"Liberation Serif", serif;letter-spacing:-0.414px;'>AaBbCcI</span>
<span class="t" style='left:684.8px;top:97px;font-size:10.5px;color:#a09a94;letter-spacing:0.324px;'>¶ Heading 1</span>
<span class="t" style='left:758.5px;top:71px;font-size:15.4px;color:#4b6590;font-family:"Liberation Serif", serif;font-weight:bold;letter-spacing:-0.123px;'>AaBbCcl</span>
<span class="t" style='left:756.8px;top:97px;font-size:10.5px;color:#a09a94;letter-spacing:0.388px;'>¶ Heading 2</span>
<span class="t" style='left:830.5px;top:71px;font-size:14.8px;color:#58719b;font-family:"Liberation Serif", serif;letter-spacing:-0.379px;'>AaBbCcD</span>
<span class="t" style='left:829.5px;top:97px;font-size:10.5px;color:#a09a94;letter-spacing:0.078px;'>¶ Table Pa...</span>
<span class="t" style='left:903.0px;top:72px;font-size:16.3px;color:#58719b;font-family:"Liberation Serif", serif;letter-spacing:-0.429px;'>AaBbCcI</span>
<span class="t" style='left:912.0px;top:97px;font-size:10.5px;color:#a09a94;letter-spacing:-0.230px;'>¶ TOC 1</span>
<span class="t" style='left:975.5px;top:73px;font-size:12.3px;color:#4b6590;font-family:"Liberation Serif", serif;font-weight:bold;letter-spacing:-0.330px;'>AaBbCcDd</span>
<span class="t" style='left:984.5px;top:97px;font-size:10.5px;color:#a09a94;letter-spacing:-0.158px;'>¶ TOC 2</span>
<span class="t" style='left:1047.5px;top:73px;font-size:12.8px;color:#58719b;font-family:"Liberation Serif", serif;letter-spacing:-0.125px;'>AaBbCcDc</span>
<span class="t" style='left:1056.5px;top:97px;font-size:10.5px;color:#a09a94;letter-spacing:-0.158px;'>¶ TOC 3</span>
<span class="t" style='left:1119.0px;top:70px;font-size:15.5px;color:#58719b;font-family:"Liberation Serif", serif;letter-spacing:-0.078px;'>AaBbCcI</span>
<span class="t" style='left:1118.5px;top:97px;font-size:10.5px;color:#a09a94;letter-spacing:0.464px;'>¶ Абзац с...</span>
<span class="t" style='left:1205.5px;top:94px;font-size:11.3px;color:#15428B;letter-spacing:0.066px;'>Изменить</span>
<span class="t" style='left:1212.7px;top:107px;font-size:11.3px;color:#15428B;letter-spacing:-0.189px;'>стили</span>
<span class="t" style='left:1293.4px;top:60px;font-size:11.3px;color:#15428B;letter-spacing:-0.050px;'>Найти</span>
<span class="t" style='left:1293.4px;top:82px;font-size:11.3px;color:#15428B;letter-spacing:-0.121px;'>Заменить</span>
<span class="t" style='left:1293.4px;top:104px;font-size:11.3px;color:#15428B;letter-spacing:-0.291px;'>Выделить</span>
<span class="t" style='left:1274.0px;top:78px;font-size:10.5px;color:#2b3553;font-family:"Liberation Serif", serif;letter-spacing:0.789px;'>ab</span>
<span class="t" style='left:1280.0px;top:86px;font-size:9.5px;color:#1c8a2c;font-weight:bold;letter-spacing:-0.039px;'>ac</span>
<div class="a" id="ws" style="left:0;top:139px;width:1366px;height:568px;background:linear-gradient(180deg,#a3bde5 0,#9dbbe3 4px,#9dbbe3 26px,#a0bee7 27px,#84a6d5 181px,#7495c8 261px,#6084ba 361px,#547db3 426px,#5882ba 461px,#6590cd 568px);"></div>
<svg style="left:0;top:165px" width="290" height="541" viewBox="0 0 290 541">
<path d="M24 1 H290 V13 L24 95 Z" fill="#fff" fill-opacity=".17"/>
<path d="M24 95 L290 13 L197.700 36.700 Q105 68 24 116.500 Z" fill="#fff" fill-opacity=".075"/>
<path d="M24 116.500 Q105 68 197.700 36.700 L290 13" fill="none" stroke="#fff" stroke-opacity=".22" stroke-width="1"/></svg>
<div class="a" style="left:19px;top:166px;width:5px;height:541px;background:rgba(255,255,255,.12);"></div>
<div class="a" style="left:0;top:142px;width:25px;height:24px;box-sizing:border-box;border:1px solid #4a72c4;border-left-width:1px;background:#aec6ea;box-shadow:inset 0 0 0 1px rgba(74,114,196,.35);"></div>
<div class="a" style="left:5px;top:146px;width:15px;height:15px;box-sizing:border-box;border:1px solid #4a72c4;background:linear-gradient(180deg,#b5caeb 0,#dbe6f6 50%,#fff 100%);"></div>
<svg style="left:9px;top:151px" width="8" height="8"><path d="M2 0.500 V6 H7" fill="none" stroke="#16265a" stroke-width="1.900"/></svg>
<div class="a" style="left:289px;top:147px;width:795px;height:13px;background:#c5d8f4;box-shadow:0 0 0 1px #9cb7df;"></div>
<div class="a" style="left:341px;top:147px;width:692px;height:13px;background:#fff;"></div>
<svg style="left:0;top:147px" width="1366" height="13" viewBox="0 0 1366 13"><g stroke="#4d6185" stroke-width="1"><line x1="306.2" y1="6.200" x2="306.2" y2="8"/><line x1="317.5" y1="4.500" x2="317.5" y2="9.500"/><line x1="328.9" y1="6.200" x2="328.9" y2="8"/><line x1="351.5" y1="6.200" x2="351.5" y2="8"/><line x1="362.9" y1="4.500" x2="362.9" y2="9.500"/><line x1="374.2" y1="6.200" x2="374.2" y2="8"/><line x1="396.9" y1="6.200" x2="396.9" y2="8"/><line x1="408.2" y1="4.500" x2="408.2" y2="9.500"/><line x1="419.6" y1="6.200" x2="419.6" y2="8"/><line x1="442.2" y1="6.200" x2="442.2" y2="8"/><line x1="453.6" y1="4.500" x2="453.6" y2="9.500"/><line x1="464.9" y1="6.200" x2="464.9" y2="8"/><line x1="487.6" y1="6.200" x2="487.6" y2="8"/><line x1="498.9" y1="4.500" x2="498.9" y2="9.500"/><line x1="510.3" y1="6.200" x2="510.3" y2="8"/><line x1="532.9" y1="6.200" x2="532.9" y2="8"/><line x1="544.3" y1="4.500" x2="544.3" y2="9.500"/><line x1="555.6" y1="6.200" x2="555.6" y2="8"/><line x1="578.3" y1="6.200" x2="578.3" y2="8"/><line x1="589.6" y1="4.500" x2="589.6" y2="9.500"/><line x1="601.0" y1="6.200" x2="601.0" y2="8"/><line x1="623.6" y1="6.200" x2="623.6" y2="8"/><line x1="635.0" y1="4.500" x2="635.0" y2="9.500"/><line x1="646.3" y1="6.200" x2="646.3" y2="8"/><line x1="669.0" y1="6.200" x2="669.0" y2="8"/><line x1="680.3" y1="4.500" x2="680.3" y2="9.500"/><line x1="691.7" y1="6.200" x2="691.7" y2="8"/><line x1="714.3" y1="6.200" x2="714.3" y2="8"/><line x1="725.7" y1="4.500" x2="725.7" y2="9.500"/><line x1="737.0" y1="6.200" x2="737.0" y2="8"/><line x1="759.7" y1="6.200" x2="759.7" y2="8"/><line x1="771.0" y1="4.500" x2="771.0" y2="9.500"/><line x1="782.4" y1="6.200" x2="782.4" y2="8"/><line x1="805.0" y1="6.200" x2="805.0" y2="8"/><line x1="816.4" y1="4.500" x2="816.4" y2="9.500"/><line x1="827.7" y1="6.200" x2="827.7" y2="8"/><line x1="850.4" y1="6.200" x2="850.4" y2="8"/><line x1="861.7" y1="4.500" x2="861.7" y2="9.500"/><line x1="873.1" y1="6.200" x2="873.1" y2="8"/><line x1="895.7" y1="6.200" x2="895.7" y2="8"/><line x1="907.1" y1="4.500" x2="907.1" y2="9.500"/><line x1="918.4" y1="6.200" x2="918.4" y2="8"/><line x1="941.1" y1="6.200" x2="941.1" y2="8"/><line x1="952.4" y1="4.500" x2="952.4" y2="9.500"/><line x1="963.8" y1="6.200" x2="963.8" y2="8"/><line x1="986.4" y1="6.200" x2="986.4" y2="8"/><line x1="997.8" y1="4.500" x2="997.8" y2="9.500"/><line x1="1009.1" y1="6.200" x2="1009.1" y2="8"/><line x1="1031.8" y1="6.200" x2="1031.8" y2="8"/><line x1="1043.1" y1="4.500" x2="1043.1" y2="9.500"/><line x1="1054.5" y1="6.200" x2="1054.5" y2="8"/><line x1="1077.1" y1="6.200" x2="1077.1" y2="8"/></g></svg>
<svg style="left:0;top:161px" width="1366" height="4"><g stroke="#6d86b3" stroke-width="1"><line x1="455.5" y1="0" x2="455.5" y2="3"/><line x1="513.1" y1="0" x2="513.1" y2="3"/><line x1="570.7" y1="0" x2="570.7" y2="3"/><line x1="628.3" y1="0" x2="628.3" y2="3"/><line x1="685.9" y1="0" x2="685.9" y2="3"/><line x1="743.5" y1="0" x2="743.5" y2="3"/><line x1="801.1" y1="0" x2="801.1" y2="3"/><line x1="858.7" y1="0" x2="858.7" y2="3"/><line x1="916.3" y1="0" x2="916.3" y2="3"/><line x1="973.9" y1="0" x2="973.9" y2="3"/><line x1="1031.5" y1="0" x2="1031.5" y2="3"/></g></svg>
<svg style="left:405px;top:143px" width="48" height="24" viewBox="0 0 48 24"><g stroke="#5d7fc0" stroke-width="1" fill="#eef3fb">
<path d="M2.500 17.500 V13.500 L6.500 9.500 L10.500 13.500 V17.500 Z"/><rect x="2.500" y="17.500" width="8" height="4.500"/>
<path d="M34.500 2.500 H43.500 V4 L39 8.500 L34.500 4 Z"/></g></svg>
<svg style="left:1019px;top:147px" width="14" height="12" viewBox="0 0 14 12"><path d="M1.500 10.500 V7 L5.500 3 L9.500 7 V10.500 Z" stroke="#5d7fc0" fill="#eef3fb"/></svg>
<div class="a" style="left:5px;top:166px;width:13px;height:541px;background:#fff;box-shadow:0 0 0 1px #9cb7df;"></div>
<div class="a" style="left:5px;top:166px;width:13px;height:56px;background:#c5d8f4;"></div>
<svg style="left:5px;top:166px" width="13" height="541" viewBox="0 0 13 541"><g stroke="#4d6185" stroke-width="1"><line x1="6" y1="20.5" x2="8" y2="20.5"/><line x1="3.500" y1="31.8" x2="9.500" y2="31.8"/><line x1="6" y1="43.2" x2="8" y2="43.2"/><line x1="6" y1="65.8" x2="8" y2="65.8"/><line x1="3.500" y1="77.2" x2="9.500" y2="77.2"/><line x1="6" y1="88.5" x2="8" y2="88.5"/><line x1="6" y1="111.2" x2="8" y2="111.2"/><line x1="3.500" y1="122.5" x2="9.500" y2="122.5"/><line x1="6" y1="133.9" x2="8" y2="133.9"/><line x1="6" y1="156.5" x2="8" y2="156.5"/><line x1="3.500" y1="167.9" x2="9.500" y2="167.9"/><line x1="6" y1="179.2" x2="8" y2="179.2"/><line x1="6" y1="201.9" x2="8" y2="201.9"/><line x1="3.500" y1="213.2" x2="9.500" y2="213.2"/><line x1="6" y1="224.6" x2="8" y2="224.6"/><line x1="6" y1="247.2" x2="8" y2="247.2"/><line x1="3.500" y1="258.6" x2="9.500" y2="258.6"/><line x1="6" y1="269.9" x2="8" y2="269.9"/><line x1="6" y1="292.6" x2="8" y2="292.6"/><line x1="3.500" y1="303.9" x2="9.500" y2="303.9"/><line x1="6" y1="315.3" x2="8" y2="315.3"/><line x1="6" y1="337.9" x2="8" y2="337.9"/><line x1="3.500" y1="349.3" x2="9.500" y2="349.3"/><line x1="6" y1="360.6" x2="8" y2="360.6"/><line x1="6" y1="383.3" x2="8" y2="383.3"/><line x1="3.500" y1="394.6" x2="9.500" y2="394.6"/><line x1="6" y1="406.0" x2="8" y2="406.0"/><line x1="6" y1="428.6" x2="8" y2="428.6"/><line x1="3.500" y1="440.0" x2="9.500" y2="440.0"/><line x1="6" y1="451.3" x2="8" y2="451.3"/><line x1="6" y1="474.0" x2="8" y2="474.0"/><line x1="3.500" y1="485.3" x2="9.500" y2="485.3"/><line x1="6" y1="496.7" x2="8" y2="496.7"/><line x1="6" y1="519.3" x2="8" y2="519.3"/><line x1="3.500" y1="530.7" x2="9.500" y2="530.7"/></g></svg>
<span class="t" style="left:9.0px;top:170.4px;width:5px;height:9.500px;font-size:9.500px;color:#3b4d73;transform:rotate(-90deg);transform-origin:50% 50%;text-align:center;letter-spacing:-.3px;">1</span>
<span class="t" style="left:9.0px;top:261.1px;width:5px;height:9.500px;font-size:9.500px;color:#3b4d73;transform:rotate(-90deg);transform-origin:50% 50%;text-align:center;letter-spacing:-.3px;">1</span>
<span class="t" style="left:9.0px;top:306.4px;width:5px;height:9.500px;font-size:9.500px;color:#3b4d73;transform:rotate(-90deg);transform-origin:50% 50%;text-align:center;letter-spacing:-.3px;">2</span>
<span class="t" style="left:9.0px;top:351.8px;width:5px;height:9.500px;font-size:9.500px;color:#3b4d73;transform:rotate(-90deg);transform-origin:50% 50%;text-align:center;letter-spacing:-.3px;">3</span>
<span class="t" style="left:9.0px;top:397.1px;width:5px;height:9.500px;font-size:9.500px;color:#3b4d73;transform:rotate(-90deg);transform-origin:50% 50%;text-align:center;letter-spacing:-.3px;">4</span>
<span class="t" style="left:9.0px;top:442.5px;width:5px;height:9.500px;font-size:9.500px;color:#3b4d73;transform:rotate(-90deg);transform-origin:50% 50%;text-align:center;letter-spacing:-.3px;">5</span>
<span class="t" style="left:9.0px;top:487.9px;width:5px;height:9.500px;font-size:9.500px;color:#3b4d73;transform:rotate(-90deg);transform-origin:50% 50%;text-align:center;letter-spacing:-.3px;">6</span>
<span class="t" style="left:9.0px;top:533.2px;width:5px;height:9.500px;font-size:9.500px;color:#3b4d73;transform:rotate(-90deg);transform-origin:50% 50%;text-align:center;letter-spacing:-.3px;">7</span>
<span class="t" style="left:9.0px;top:578.5px;width:5px;height:9.500px;font-size:9.500px;color:#3b4d73;transform:rotate(-90deg);transform-origin:50% 50%;text-align:center;letter-spacing:-.3px;">8</span>
<span class="t" style="left:9.0px;top:623.9px;width:5px;height:9.500px;font-size:9.500px;color:#3b4d73;transform:rotate(-90deg);transform-origin:50% 50%;text-align:center;letter-spacing:-.3px;">9</span>
<span class="t" style="left:6.2px;top:669.2px;width:10.5px;height:9.500px;font-size:9.500px;color:#3b4d73;transform:rotate(-90deg);transform-origin:50% 50%;text-align:center;letter-spacing:-.3px;">10</span>
<div class="a" style="left:1349px;top:142px;width:17px;height:565px;background:linear-gradient(180deg,#9dbae3 0,#9dbae3 23px,#8aa8d8 24px,#819fd1 140px,#7696ca 300px,#7898cb 512px,#a9c5ee 513px,#a9c5ee 100%);"></div>
<div class="a" style="left:1349px;top:166px;width:1px;height:489px;background:rgba(255,255,255,.35);"></div>
<div class="a" style="left:1353px;top:144px;width:9px;height:2px;background:#2b3a5e;"></div>
<svg style="left:1350px;top:149px" width="16" height="16" viewBox="0 0 16 16"><rect x=".5" y=".5" width="15" height="15" fill="#cfd6e2" stroke="#9aa8c0"/><path d="M3 2.500 h6 v8 h-6 z M6.500 5.500 h6 v8 h-6 z" fill="#f4f6fa" stroke="#46527a" stroke-width=".9"/><path d="M5 5 l3 3 m0 -3 l-3 3 M8.500 8.500 l2.500 2.500 m0 -2.500 l-2.500 2.500" stroke="#46527a" stroke-width=".8"/></svg>
<svg style="left:1353px;top:170px" width="10" height="6"><path d="M0 5.500 L5 .5 L10 5.500 Z" fill="#4b5a82"/></svg>
<div class="a" style="left:1350px;top:205px;width:15px;height:8px;box-sizing:border-box;border:1px solid #8294b5;border-radius:2px;background:linear-gradient(90deg,#fdfdfe,#e6e9ef 50%,#cfd5e0);"></div>
<svg style="left:1353px;top:643px" width="10" height="6"><path d="M0 .5 L5 5.500 L10 .5 Z" fill="#4b5a82"/></svg>
<svg style="left:1350px;top:655px" width="16" height="52" viewBox="0 0 16 52"><g fill="#111"><path d="M4 5.500 L7.500 2 L11 5.500 Z M4 9.500 L7.500 6 L11 9.500 Z"/><path d="M4 39 L7.500 42.500 L11 39 Z M4 43 L7.500 46.500 L11 43 Z"/></g><defs><radialGradient id="bo" cx="40%" cy="35%"><stop offset="0" stop-color="#fff"/><stop offset="1" stop-color="#8a8f99"/></radialGradient></defs><circle cx="7.500" cy="24.500" r="3.300" fill="url(#bo)" stroke="#444" stroke-width=".7"/></svg>
<span class="t" style='left:383.1px;top:149px;font-size:9.8px;color:#3b4d73;letter-spacing:-0.453px;'>1</span>
<span class="t" style='left:428.4px;top:149px;font-size:9.8px;color:#3b4d73;letter-spacing:-0.453px;'>2</span>
<span class="t" style='left:473.8px;top:149px;font-size:9.8px;color:#3b4d73;letter-spacing:-0.453px;'>3</span>
<span class="t" style='left:519.1px;top:149px;font-size:9.8px;color:#3b4d73;letter-spacing:-0.453px;'>4</span>
<span class="t" style='left:564.5px;top:149px;font-size:9.8px;color:#3b4d73;letter-spacing:-0.453px;'>5</span>
<span class="t" style='left:609.8px;top:149px;font-size:9.8px;color:#3b4d73;letter-spacing:-0.453px;'>6</span>
<span class="t" style='left:655.1px;top:149px;font-size:9.8px;color:#3b4d73;letter-spacing:-0.453px;'>7</span>
<span class="t" style='left:700.5px;top:149px;font-size:9.8px;color:#3b4d73;letter-spacing:-0.453px;'>8</span>
<span class="t" style='left:745.9px;top:149px;font-size:9.8px;color:#3b4d73;letter-spacing:-0.453px;'>9</span>
<span class="t" style='left:788.5px;top:149px;font-size:9.8px;color:#3b4d73;letter-spacing:-0.203px;'>10</span>
<span class="t" style='left:833.8px;top:149px;font-size:9.8px;color:#3b4d73;letter-spacing:0.164px;'>11</span>
<span class="t" style='left:879.2px;top:149px;font-size:9.8px;color:#3b4d73;letter-spacing:-0.203px;'>12</span>
<span class="t" style='left:924.5px;top:149px;font-size:9.8px;color:#3b4d73;letter-spacing:-0.203px;'>13</span>
<span class="t" style='left:969.8px;top:149px;font-size:9.8px;color:#3b4d73;letter-spacing:-0.203px;'>14</span>
<span class="t" style='left:1015.2px;top:149px;font-size:9.8px;color:#3b4d73;letter-spacing:-0.203px;'>15</span>
<span class="t" style='left:1060.5px;top:149px;font-size:9.8px;color:#3b4d73;letter-spacing:-0.203px;'>16</span>
<span class="t" style='left:293.0px;top:149px;font-size:9.8px;color:#3b4d73;letter-spacing:-0.453px;'>1</span>
<div class="a" style="left:284px;top:166px;width:5px;height:541px;background:linear-gradient(90deg,rgba(60,80,130,0),rgba(60,80,130,.30));"></div><div class="a" style="left:289px;top:166px;width:1px;height:541px;background:#5c5c60;"></div>
<div class="a" style="left:1083px;top:166px;width:8px;height:541px;background:linear-gradient(90deg,rgba(30,45,85,.85),rgba(40,60,110,.35) 3px,rgba(40,60,110,0));"></div>
<div class="a" id="page" style="left:290px;top:166px;width:793px;height:541px;background:#fff;"></div>
<svg style="left:0;top:0" width="1366" height="768" viewBox="0 0 1366 768"><defs><clipPath id="pg"><rect x="290" y="166" width="793" height="541"/></clipPath></defs><g clip-path="url(#pg)">
<path d="M219.4 414.6 L223.3 407.2 L227.2 399.8 L231.3 392.5 L235.5 385.3 L239.7 378.1 L244.1 371.0 L248.6 363.9 L253.2 357.0 L258.0 350.0 L262.8 343.2 L267.7 336.4 L272.7 329.8 L277.8 323.1 L283.0 316.6 L288.4 310.2 L293.8 303.8 L299.3 297.5 L304.9 291.3 L310.6 285.2 L316.4 279.1 L322.3 273.2 L328.3 267.4 L334.3 261.6 L340.5 255.9 L346.7 250.3 L353.0 244.9 L359.4 239.5 L365.9 234.2 L372.5 229.0 L379.1 223.9 L385.8 218.9 L392.6 214.1 L399.5 209.3 L406.4 204.6 L413.4 200.0 L420.5 195.6 L427.6 191.2 L434.8 187.0 L442.1 182.8 L449.4 178.8 L456.8 174.9 L464.3 171.1 L471.8 167.4 L479.3 163.8 L486.9 160.4 L494.6 157.1 L502.3 153.8 L510.1 150.7 L517.9 147.7 L525.8 144.9 L533.7 142.1 L541.6 139.5 L549.6 137.0 L557.6 134.6 L565.6 132.3 L573.7 130.2 L581.8 128.1 L590.0 126.3 L598.1 124.5 L606.3 122.8 L230.0 90.0 Z" fill="#cae5d8"/>
<path d="M219.4 414.6 L223.3 407.2 L227.2 399.8 L231.3 392.5 L235.5 385.3 L239.7 378.1 L244.1 371.0 L248.6 363.9 L253.2 357.0 L258.0 350.0 L262.8 343.2 L267.7 336.4 L272.7 329.8 L277.8 323.1 L283.0 316.6 L288.4 310.2 L293.8 303.8 L299.3 297.5 L304.9 291.3 L310.6 285.2 L316.4 279.1 L322.3 273.2 L328.3 267.4 L334.3 261.6 L340.5 255.9 L346.7 250.3 L353.0 244.9 L359.4 239.5 L365.9 234.2 L372.5 229.0 L379.1 223.9 L385.8 218.9 L392.6 214.1 L399.5 209.3 L406.4 204.6 L413.4 200.0 L420.5 195.6 L427.6 191.2 L434.8 187.0 L442.1 182.8 L449.4 178.8 L456.8 174.9 L464.3 171.1 L471.8 167.4 L479.3 163.8 L486.9 160.4 L494.6 157.1 L502.3 153.8 L510.1 150.7 L517.9 147.7 L525.8 144.9 L533.7 142.1 L541.6 139.5 L549.6 137.0 L557.6 134.6 L565.6 132.3 L573.7 130.2 L581.8 128.1 L590.0 126.3 L598.1 124.5 L606.3 122.8 L606.6 124.3 L598.4 125.9 L590.3 127.7 L582.2 129.6 L574.1 131.6 L566.0 133.7 L558.0 136.0 L550.0 138.4 L542.0 140.9 L534.1 143.5 L526.2 146.2 L518.4 149.1 L510.6 152.1 L502.9 155.2 L495.2 158.4 L487.5 161.7 L479.9 165.2 L472.4 168.7 L464.9 172.4 L457.5 176.2 L450.1 180.1 L442.8 184.1 L435.6 188.2 L428.4 192.5 L421.2 196.8 L414.2 201.3 L407.2 205.8 L400.3 210.5 L393.4 215.2 L386.7 220.1 L380.0 225.1 L373.4 230.2 L366.8 235.3 L360.3 240.6 L354.0 246.0 L347.7 251.4 L341.4 257.0 L335.3 262.7 L329.3 268.4 L323.3 274.2 L317.4 280.2 L311.7 286.2 L306.0 292.3 L300.4 298.5 L294.9 304.7 L289.5 311.1 L284.2 317.5 L279.0 324.0 L273.9 330.6 L268.9 337.3 L263.9 344.1 L259.1 350.9 L254.4 357.8 L249.9 364.7 L245.4 371.8 L241.0 378.9 L236.7 386.0 L232.6 393.2 L228.5 400.5 L224.6 407.9 L220.7 415.3 Z" fill="#3f8a72" fill-opacity="0.3192"/>
<path d="M219.4 414.6 L223.3 407.2 L227.2 399.8 L231.3 392.5 L235.5 385.3 L239.7 378.1 L244.1 371.0 L248.6 363.9 L253.2 357.0 L258.0 350.0 L262.8 343.2 L267.7 336.4 L272.7 329.8 L277.8 323.1 L283.0 316.6 L288.4 310.2 L293.8 303.8 L299.3 297.5 L304.9 291.3 L310.6 285.2 L316.4 279.1 L322.3 273.2 L328.3 267.4 L334.3 261.6 L340.5 255.9 L346.7 250.3 L353.0 244.9 L359.4 239.5 L365.9 234.2 L372.5 229.0 L379.1 223.9 L385.8 218.9 L392.6 214.1 L399.5 209.3 L406.4 204.6 L413.4 200.0 L420.5 195.6 L427.6 191.2 L434.8 187.0 L442.1 182.8 L449.4 178.8 L456.8 174.9 L464.3 171.1 L471.8 167.4 L479.3 163.8 L486.9 160.4 L494.6 157.1 L502.3 153.8 L510.1 150.7 L517.9 147.7 L525.8 144.9 L533.7 142.1 L541.6 139.5 L549.6 137.0 L557.6 134.6 L565.6 132.3 L573.7 130.2 L581.8 128.1 L590.0 126.3 L598.1 124.5 L606.3 122.8 L606.9 125.7 L598.7 127.3 L590.6 129.1 L582.5 131.0 L574.4 133.0 L566.4 135.1 L558.4 137.4 L550.4 139.8 L542.5 142.2 L534.6 144.9 L526.7 147.6 L518.9 150.5 L511.2 153.4 L503.4 156.5 L495.8 159.7 L488.1 163.0 L480.6 166.5 L473.0 170.0 L465.6 173.7 L458.2 177.5 L450.8 181.4 L443.5 185.4 L436.3 189.5 L429.1 193.7 L422.0 198.1 L415.0 202.5 L408.0 207.0 L401.1 211.7 L394.3 216.4 L387.5 221.3 L380.9 226.3 L374.2 231.3 L367.7 236.5 L361.3 241.7 L354.9 247.1 L348.6 252.5 L342.4 258.1 L336.3 263.7 L330.3 269.4 L324.3 275.3 L318.5 281.2 L312.7 287.2 L307.0 293.3 L301.5 299.4 L296.0 305.7 L290.6 312.0 L285.3 318.4 L280.1 324.9 L275.0 331.5 L270.0 338.2 L265.1 344.9 L260.3 351.7 L255.7 358.6 L251.1 365.5 L246.6 372.5 L242.2 379.6 L238.0 386.8 L233.8 394.0 L229.8 401.2 L225.8 408.6 L222.0 416.0 Z" fill="#3f8a72" fill-opacity="0.2406"/>
<path d="M219.4 414.6 L223.3 407.2 L227.2 399.8 L231.3 392.5 L235.5 385.3 L239.7 378.1 L244.1 371.0 L248.6 363.9 L253.2 357.0 L258.0 350.0 L262.8 343.2 L267.7 336.4 L272.7 329.8 L277.8 323.1 L283.0 316.6 L288.4 310.2 L293.8 303.8 L299.3 297.5 L304.9 291.3 L310.6 285.2 L316.4 279.1 L322.3 273.2 L328.3 267.4 L334.3 261.6 L340.5 255.9 L346.7 250.3 L353.0 244.9 L359.4 239.5 L365.9 234.2 L372.5 229.0 L379.1 223.9 L385.8 218.9 L392.6 214.1 L399.5 209.3 L406.4 204.6 L413.4 200.0 L420.5 195.6 L427.6 191.2 L434.8 187.0 L442.1 182.8 L449.4 178.8 L456.8 174.9 L464.3 171.1 L471.8 167.4 L479.3 163.8 L486.9 160.4 L494.6 157.1 L502.3 153.8 L510.1 150.7 L517.9 147.7 L525.8 144.9 L533.7 142.1 L541.6 139.5 L549.6 137.0 L557.6 134.6 L565.6 132.3 L573.7 130.2 L581.8 128.1 L590.0 126.3 L598.1 124.5 L606.3 122.8 L607.2 127.1 L599.0 128.7 L590.9 130.5 L582.9 132.4 L574.8 134.4 L566.8 136.5 L558.8 138.8 L550.8 141.1 L542.9 143.6 L535.1 146.2 L527.2 149.0 L519.4 151.8 L511.7 154.8 L504.0 157.9 L496.3 161.1 L488.7 164.4 L481.2 167.8 L473.7 171.4 L466.2 175.0 L458.8 178.8 L451.5 182.7 L444.2 186.7 L437.0 190.8 L429.9 195.0 L422.8 199.3 L415.8 203.7 L408.8 208.2 L401.9 212.9 L395.1 217.6 L388.4 222.5 L381.7 227.4 L375.1 232.5 L368.6 237.6 L362.2 242.8 L355.9 248.2 L349.6 253.6 L343.4 259.2 L337.3 264.8 L331.3 270.5 L325.4 276.3 L319.5 282.2 L313.8 288.2 L308.1 294.2 L302.6 300.4 L297.1 306.6 L291.7 313.0 L286.4 319.4 L281.3 325.8 L276.2 332.4 L271.2 339.0 L266.3 345.7 L261.5 352.5 L256.9 359.4 L252.3 366.3 L247.8 373.3 L243.5 380.4 L239.2 387.5 L235.1 394.7 L231.1 401.9 L227.1 409.2 L223.3 416.6 Z" fill="#3f8a72" fill-opacity="0.1928"/>
<path d="M219.4 414.6 L223.3 407.2 L227.2 399.8 L231.3 392.5 L235.5 385.3 L239.7 378.1 L244.1 371.0 L248.6 363.9 L253.2 357.0 L258.0 350.0 L262.8 343.2 L267.7 336.4 L272.7 329.8 L277.8 323.1 L283.0 316.6 L288.4 310.2 L293.8 303.8 L299.3 297.5 L304.9 291.3 L310.6 285.2 L316.4 279.1 L322.3 273.2 L328.3 267.4 L334.3 261.6 L340.5 255.9 L346.7 250.3 L353.0 244.9 L359.4 239.5 L365.9 234.2 L372.5 229.0 L379.1 223.9 L385.8 218.9 L392.6 214.1 L399.5 209.3 L406.4 204.6 L413.4 200.0 L420.5 195.6 L427.6 191.2 L434.8 187.0 L442.1 182.8 L449.4 178.8 L456.8 174.9 L464.3 171.1 L471.8 167.4 L479.3 163.8 L486.9 160.4 L494.6 157.1 L502.3 153.8 L510.1 150.7 L517.9 147.7 L525.8 144.9 L533.7 142.1 L541.6 139.5 L549.6 137.0 L557.6 134.6 L565.6 132.3 L573.7 130.2 L581.8 128.1 L590.0 126.3 L598.1 124.5 L606.3 122.8 L607.5 128.5 L599.3 130.2 L591.3 131.9 L583.2 133.8 L575.2 135.8 L567.2 137.9 L559.2 140.2 L551.3 142.5 L543.4 145.0 L535.5 147.6 L527.7 150.3 L519.9 153.2 L512.2 156.1 L504.5 159.2 L496.9 162.4 L489.3 165.7 L481.8 169.1 L474.3 172.7 L466.9 176.3 L459.5 180.1 L452.2 183.9 L444.9 187.9 L437.7 192.0 L430.6 196.2 L423.5 200.5 L416.5 204.9 L409.6 209.5 L402.8 214.1 L396.0 218.8 L389.2 223.6 L382.6 228.6 L376.0 233.6 L369.5 238.7 L363.1 244.0 L356.8 249.3 L350.5 254.7 L344.4 260.2 L338.3 265.8 L332.3 271.5 L326.4 277.3 L320.6 283.2 L314.8 289.2 L309.2 295.2 L303.6 301.4 L298.2 307.6 L292.8 313.9 L287.6 320.3 L282.4 326.7 L277.3 333.3 L272.4 339.9 L267.5 346.6 L262.7 353.4 L258.1 360.2 L253.5 367.1 L249.1 374.1 L244.7 381.1 L240.5 388.2 L236.3 395.4 L232.3 402.6 L228.4 409.9 L224.6 417.3 Z" fill="#3f8a72" fill-opacity="0.1606"/>
<path d="M219.4 414.6 L223.3 407.2 L227.2 399.8 L231.3 392.5 L235.5 385.3 L239.7 378.1 L244.1 371.0 L248.6 363.9 L253.2 357.0 L258.0 350.0 L262.8 343.2 L267.7 336.4 L272.7 329.8 L277.8 323.1 L283.0 316.6 L288.4 310.2 L293.8 303.8 L299.3 297.5 L304.9 291.3 L310.6 285.2 L316.4 279.1 L322.3 273.2 L328.3 267.4 L334.3 261.6 L340.5 255.9 L346.7 250.3 L353.0 244.9 L359.4 239.5 L365.9 234.2 L372.5 229.0 L379.1 223.9 L385.8 218.9 L392.6 214.1 L399.5 209.3 L406.4 204.6 L413.4 200.0 L420.5 195.6 L427.6 191.2 L434.8 187.0 L442.1 182.8 L449.4 178.8 L456.8 174.9 L464.3 171.1 L471.8 167.4 L479.3 163.8 L486.9 160.4 L494.6 157.1 L502.3 153.8 L510.1 150.7 L517.9 147.7 L525.8 144.9 L533.7 142.1 L541.6 139.5 L549.6 137.0 L557.6 134.6 L565.6 132.3 L573.7 130.2 L581.8 128.1 L590.0 126.3 L598.1 124.5 L606.3 122.8 L607.7 130.0 L599.6 131.6 L591.6 133.3 L583.5 135.2 L575.5 137.2 L567.6 139.3 L559.6 141.6 L551.7 143.9 L543.8 146.4 L536.0 149.0 L528.2 151.7 L520.5 154.5 L512.7 157.5 L505.1 160.6 L497.5 163.7 L489.9 167.0 L482.4 170.4 L474.9 174.0 L467.5 177.6 L460.2 181.4 L452.9 185.2 L445.6 189.2 L438.5 193.3 L431.4 197.5 L424.3 201.8 L417.3 206.2 L410.4 210.7 L403.6 215.3 L396.8 220.0 L390.1 224.8 L383.5 229.7 L376.9 234.8 L370.5 239.9 L364.1 245.1 L357.7 250.4 L351.5 255.8 L345.4 261.3 L339.3 266.9 L333.3 272.6 L327.4 278.4 L321.6 284.2 L315.9 290.2 L310.3 296.2 L304.7 302.3 L299.3 308.5 L293.9 314.8 L288.7 321.2 L283.5 327.6 L278.5 334.2 L273.5 340.8 L268.7 347.4 L263.9 354.2 L259.3 361.0 L254.7 367.9 L250.3 374.9 L246.0 381.9 L241.7 389.0 L237.6 396.1 L233.6 403.3 L229.7 410.6 L225.9 417.9 Z" fill="#3f8a72" fill-opacity="0.1374"/>
<path d="M219.4 414.6 L223.3 407.2 L227.2 399.8 L231.3 392.5 L235.5 385.3 L239.7 378.1 L244.1 371.0 L248.6 363.9 L253.2 357.0 L258.0 350.0 L262.8 343.2 L267.7 336.4 L272.7 329.8 L277.8 323.1 L283.0 316.6 L288.4 310.2 L293.8 303.8 L299.3 297.5 L304.9 291.3 L310.6 285.2 L316.4 279.1 L322.3 273.2 L328.3 267.4 L334.3 261.6 L340.5 255.9 L346.7 250.3 L353.0 244.9 L359.4 239.5 L365.9 234.2 L372.5 229.0 L379.1 223.9 L385.8 218.9 L392.6 214.1 L399.5 209.3 L406.4 204.6 L413.4 200.0 L420.5 195.6 L427.6 191.2 L434.8 187.0 L442.1 182.8 L449.4 178.8 L456.8 174.9 L464.3 171.1 L471.8 167.4 L479.3 163.8 L486.9 160.4 L494.6 157.1 L502.3 153.8 L510.1 150.7 L517.9 147.7 L525.8 144.9 L533.7 142.1 L541.6 139.5 L549.6 137.0 L557.6 134.6 L565.6 132.3 L573.7 130.2 L581.8 128.1 L590.0 126.3 L598.1 124.5 L606.3 122.8 L608.0 131.4 L599.9 133.0 L591.9 134.8 L583.9 136.6 L575.9 138.6 L567.9 140.7 L560.0 143.0 L552.1 145.3 L544.3 147.8 L536.5 150.4 L528.7 153.1 L521.0 155.9 L513.3 158.8 L505.6 161.9 L498.0 165.1 L490.5 168.4 L483.0 171.8 L475.6 175.3 L468.2 178.9 L460.8 182.7 L453.6 186.5 L446.4 190.5 L439.2 194.5 L432.1 198.7 L425.1 203.0 L418.1 207.4 L411.2 211.9 L404.4 216.5 L397.6 221.2 L391.0 226.0 L384.4 230.9 L377.8 235.9 L371.4 241.0 L365.0 246.2 L358.7 251.5 L352.5 256.9 L346.3 262.4 L340.3 268.0 L334.3 273.6 L328.4 279.4 L322.6 285.2 L316.9 291.2 L311.3 297.2 L305.8 303.3 L300.4 309.5 L295.1 315.8 L289.8 322.1 L284.7 328.5 L279.6 335.0 L274.7 341.6 L269.9 348.3 L265.1 355.0 L260.5 361.8 L256.0 368.7 L251.5 375.6 L247.2 382.6 L243.0 389.7 L238.9 396.8 L234.9 404.0 L231.0 411.3 L227.2 418.6 Z" fill="#3f8a72" fill-opacity="0.1198"/>
<path d="M219.4 414.6 L223.3 407.2 L227.2 399.8 L231.3 392.5 L235.5 385.3 L239.7 378.1 L244.1 371.0 L248.6 363.9 L253.2 357.0 L258.0 350.0 L262.8 343.2 L267.7 336.4 L272.7 329.8 L277.8 323.1 L283.0 316.6 L288.4 310.2 L293.8 303.8 L299.3 297.5 L304.9 291.3 L310.6 285.2 L316.4 279.1 L322.3 273.2 L328.3 267.4 L334.3 261.6 L340.5 255.9 L346.7 250.3 L353.0 244.9 L359.4 239.5 L365.9 234.2 L372.5 229.0 L379.1 223.9 L385.8 218.9 L392.6 214.1 L399.5 209.3 L406.4 204.6 L413.4 200.0 L420.5 195.6 L427.6 191.2 L434.8 187.0 L442.1 182.8 L449.4 178.8 L456.8 174.9 L464.3 171.1 L471.8 167.4 L479.3 163.8 L486.9 160.4 L494.6 157.1 L502.3 153.8 L510.1 150.7 L517.9 147.7 L525.8 144.9 L533.7 142.1 L541.6 139.5 L549.6 137.0 L557.6 134.6 L565.6 132.3 L573.7 130.2 L581.8 128.1 L590.0 126.3 L598.1 124.5 L606.3 122.8 L608.3 132.8 L600.2 134.4 L592.2 136.2 L584.2 138.0 L576.3 140.0 L568.3 142.1 L560.4 144.4 L552.6 146.7 L544.7 149.2 L536.9 151.7 L529.2 154.4 L521.5 157.3 L513.8 160.2 L506.2 163.2 L498.6 166.4 L491.1 169.7 L483.6 173.1 L476.2 176.6 L468.8 180.2 L461.5 183.9 L454.3 187.8 L447.1 191.7 L439.9 195.8 L432.9 200.0 L425.8 204.2 L418.9 208.6 L412.0 213.1 L405.2 217.7 L398.5 222.4 L391.8 227.2 L385.2 232.1 L378.7 237.0 L372.3 242.1 L365.9 247.3 L359.6 252.6 L353.4 258.0 L347.3 263.5 L341.3 269.0 L335.3 274.7 L329.5 280.4 L323.7 286.3 L318.0 292.2 L312.4 298.2 L306.9 304.3 L301.5 310.4 L296.2 316.7 L291.0 323.0 L285.8 329.4 L280.8 335.9 L275.9 342.5 L271.0 349.1 L266.3 355.8 L261.7 362.6 L257.2 369.5 L252.8 376.4 L248.4 383.4 L244.2 390.4 L240.1 397.5 L236.2 404.7 L232.3 412.0 L228.5 419.2 Z" fill="#3f8a72" fill-opacity="0.1061"/>
<path d="M219.4 414.6 L223.3 407.2 L227.2 399.8 L231.3 392.5 L235.5 385.3 L239.7 378.1 L244.1 371.0 L248.6 363.9 L253.2 357.0 L258.0 350.0 L262.8 343.2 L267.7 336.4 L272.7 329.8 L277.8 323.1 L283.0 316.6 L288.4 310.2 L293.8 303.8 L299.3 297.5 L304.9 291.3 L310.6 285.2 L316.4 279.1 L322.3 273.2 L328.3 267.4 L334.3 261.6 L340.5 255.9 L346.7 250.3 L353.0 244.9 L359.4 239.5 L365.9 234.2 L372.5 229.0 L379.1 223.9 L385.8 218.9 L392.6 214.1 L399.5 209.3 L406.4 204.6 L413.4 200.0 L420.5 195.6 L427.6 191.2 L434.8 187.0 L442.1 182.8 L449.4 178.8 L456.8 174.9 L464.3 171.1 L471.8 167.4 L479.3 163.8 L486.9 160.4 L494.6 157.1 L502.3 153.8 L510.1 150.7 L517.9 147.7 L525.8 144.9 L533.7 142.1 L541.6 139.5 L549.6 137.0 L557.6 134.6 L565.6 132.3 L573.7 130.2 L581.8 128.1 L590.0 126.3 L598.1 124.5 L606.3 122.8 L608.6 134.3 L600.5 135.9 L592.5 137.6 L584.6 139.5 L576.6 141.4 L568.7 143.5 L560.8 145.8 L553.0 148.1 L545.2 150.6 L537.4 153.1 L529.7 155.8 L522.0 158.6 L514.3 161.6 L506.7 164.6 L499.2 167.8 L491.7 171.0 L484.2 174.4 L476.8 177.9 L469.5 181.5 L462.2 185.2 L454.9 189.1 L447.8 193.0 L440.7 197.1 L433.6 201.2 L426.6 205.5 L419.7 209.8 L412.8 214.3 L406.0 218.9 L399.3 223.6 L392.7 228.3 L386.1 233.2 L379.6 238.2 L373.2 243.3 L366.8 248.4 L360.6 253.7 L354.4 259.1 L348.3 264.5 L342.3 270.1 L336.3 275.7 L330.5 281.5 L324.7 287.3 L319.1 293.2 L313.5 299.2 L308.0 305.2 L302.6 311.4 L297.3 317.6 L292.1 323.9 L287.0 330.3 L282.0 336.8 L277.0 343.4 L272.2 350.0 L267.5 356.7 L262.9 363.4 L258.4 370.3 L254.0 377.2 L249.7 384.1 L245.5 391.2 L241.4 398.3 L237.4 405.4 L233.6 412.6 L229.8 419.9 Z" fill="#3f8a72" fill-opacity="0.0951"/>
<path d="M219.4 414.6 L223.3 407.2 L227.2 399.8 L231.3 392.5 L235.5 385.3 L239.7 378.1 L244.1 371.0 L248.6 363.9 L253.2 357.0 L258.0 350.0 L262.8 343.2 L267.7 336.4 L272.7 329.8 L277.8 323.1 L283.0 316.6 L288.4 310.2 L293.8 303.8 L299.3 297.5 L304.9 291.3 L310.6 285.2 L316.4 279.1 L322.3 273.2 L328.3 267.4 L334.3 261.6 L340.5 255.9 L346.7 250.3 L353.0 244.9 L359.4 239.5 L365.9 234.2 L372.5 229.0 L379.1 223.9 L385.8 218.9 L392.6 214.1 L399.5 209.3 L406.4 204.6 L413.4 200.0 L420.5 195.6 L427.6 191.2 L434.8 187.0 L442.1 182.8 L449.4 178.8 L456.8 174.9 L464.3 171.1 L471.8 167.4 L479.3 163.8 L486.9 160.4 L494.6 157.1 L502.3 153.8 L510.1 150.7 L517.9 147.7 L525.8 144.9 L533.7 142.1 L541.6 139.5 L549.6 137.0 L557.6 134.6 L565.6 132.3 L573.7 130.2 L581.8 128.1 L590.0 126.3 L598.1 124.5 L606.3 122.8 L608.8 135.7 L600.8 137.3 L592.9 139.0 L584.9 140.9 L577.0 142.8 L569.1 144.9 L561.2 147.2 L553.4 149.5 L545.6 151.9 L537.9 154.5 L530.2 157.2 L522.5 160.0 L514.9 162.9 L507.3 165.9 L499.8 169.1 L492.3 172.4 L484.8 175.7 L477.5 179.2 L470.1 182.8 L462.9 186.5 L455.6 190.3 L448.5 194.3 L441.4 198.3 L434.3 202.5 L427.4 206.7 L420.5 211.1 L413.6 215.5 L406.9 220.1 L400.2 224.7 L393.5 229.5 L387.0 234.4 L380.5 239.3 L374.1 244.4 L367.8 249.6 L361.5 254.8 L355.4 260.2 L349.3 265.6 L343.3 271.1 L337.3 276.8 L331.5 282.5 L325.8 288.3 L320.1 294.2 L314.5 300.1 L309.1 306.2 L303.7 312.3 L298.4 318.6 L293.2 324.9 L288.1 331.2 L283.1 337.7 L278.2 344.2 L273.4 350.8 L268.7 357.5 L264.1 364.2 L259.6 371.1 L255.2 377.9 L250.9 384.9 L246.8 391.9 L242.7 399.0 L238.7 406.1 L234.9 413.3 L231.1 420.6 Z" fill="#3f8a72" fill-opacity="0.0860"/>
<path d="M219.4 414.6 L223.3 407.2 L227.2 399.8 L231.3 392.5 L235.5 385.3 L239.7 378.1 L244.1 371.0 L248.6 363.9 L253.2 357.0 L258.0 350.0 L262.8 343.2 L267.7 336.4 L272.7 329.8 L277.8 323.1 L283.0 316.6 L288.4 310.2 L293.8 303.8 L299.3 297.5 L304.9 291.3 L310.6 285.2 L316.4 279.1 L322.3 273.2 L328.3 267.4 L334.3 261.6 L340.5 255.9 L346.7 250.3 L353.0 244.9 L359.4 239.5 L365.9 234.2 L372.5 229.0 L379.1 223.9 L385.8 218.9 L392.6 214.1 L399.5 209.3 L406.4 204.6 L413.4 200.0 L420.5 195.6 L427.6 191.2 L434.8 187.0 L442.1 182.8 L449.4 178.8 L456.8 174.9 L464.3 171.1 L471.8 167.4 L479.3 163.8 L486.9 160.4 L494.6 157.1 L502.3 153.8 L510.1 150.7 L517.9 147.7 L525.8 144.9 L533.7 142.1 L541.6 139.5 L549.6 137.0 L557.6 134.6 L565.6 132.3 L573.7 130.2 L581.8 128.1 L590.0 126.3 L598.1 124.5 L606.3 122.8 L609.1 137.1 L601.1 138.7 L593.2 140.4 L585.2 142.3 L577.3 144.3 L569.5 146.3 L561.6 148.6 L553.8 150.9 L546.1 153.3 L538.3 155.9 L530.6 158.6 L523.0 161.4 L515.4 164.3 L507.8 167.3 L500.3 170.4 L492.9 173.7 L485.4 177.0 L478.1 180.5 L470.8 184.1 L463.5 187.8 L456.3 191.6 L449.2 195.5 L442.1 199.6 L435.1 203.7 L428.1 207.9 L421.3 212.3 L414.4 216.7 L407.7 221.3 L401.0 225.9 L394.4 230.7 L387.9 235.5 L381.4 240.5 L375.0 245.5 L368.7 250.7 L362.5 255.9 L356.3 261.3 L350.2 266.7 L344.3 272.2 L338.4 277.8 L332.5 283.5 L326.8 289.3 L321.2 295.2 L315.6 301.1 L310.2 307.2 L304.8 313.3 L299.5 319.5 L294.3 325.8 L289.3 332.1 L284.3 338.6 L279.4 345.1 L274.6 351.7 L269.9 358.3 L265.3 365.1 L260.8 371.9 L256.5 378.7 L252.2 385.6 L248.0 392.6 L243.9 399.7 L240.0 406.8 L236.1 414.0 L232.4 421.2 Z" fill="#3f8a72" fill-opacity="0.0783"/>
<path d="M219.4 414.6 L223.3 407.2 L227.2 399.8 L231.3 392.5 L235.5 385.3 L239.7 378.1 L244.1 371.0 L248.6 363.9 L253.2 357.0 L258.0 350.0 L262.8 343.2 L267.7 336.4 L272.7 329.8 L277.8 323.1 L283.0 316.6 L288.4 310.2 L293.8 303.8 L299.3 297.5 L304.9 291.3 L310.6 285.2 L316.4 279.1 L322.3 273.2 L328.3 267.4 L334.3 261.6 L340.5 255.9 L346.7 250.3 L353.0 244.9 L359.4 239.5 L365.9 234.2 L372.5 229.0 L379.1 223.9 L385.8 218.9 L392.6 214.1 L399.5 209.3 L406.4 204.6 L413.4 200.0 L420.5 195.6 L427.6 191.2 L434.8 187.0 L442.1 182.8 L449.4 178.8 L456.8 174.9 L464.3 171.1 L471.8 167.4 L479.3 163.8 L486.9 160.4 L494.6 157.1 L502.3 153.8 L510.1 150.7 L517.9 147.7 L525.8 144.9 L533.7 142.1 L541.6 139.5 L549.6 137.0 L557.6 134.6 L565.6 132.3 L573.7 130.2 L581.8 128.1 L590.0 126.3 L598.1 124.5 L606.3 122.8 L609.4 138.5 L601.4 140.1 L593.5 141.9 L585.6 143.7 L577.7 145.7 L569.9 147.7 L562.0 149.9 L554.3 152.3 L546.5 154.7 L538.8 157.3 L531.1 159.9 L523.5 162.7 L515.9 165.6 L508.4 168.6 L500.9 171.8 L493.4 175.0 L486.1 178.4 L478.7 181.8 L471.4 185.4 L464.2 189.1 L457.0 192.9 L449.9 196.8 L442.8 200.8 L435.8 204.9 L428.9 209.2 L422.0 213.5 L415.2 217.9 L408.5 222.5 L401.8 227.1 L395.3 231.9 L388.7 236.7 L382.3 241.6 L375.9 246.7 L369.6 251.8 L363.4 257.0 L357.3 262.4 L351.2 267.8 L345.3 273.3 L339.4 278.9 L333.6 284.5 L327.9 290.3 L322.2 296.2 L316.7 302.1 L311.2 308.1 L305.9 314.2 L300.6 320.4 L295.5 326.7 L290.4 333.0 L285.4 339.5 L280.6 346.0 L275.8 352.5 L271.1 359.2 L266.5 365.9 L262.1 372.6 L257.7 379.5 L253.4 386.4 L249.3 393.4 L245.2 400.4 L241.3 407.5 L237.4 414.7 L233.7 421.9 Z" fill="#3f8a72" fill-opacity="0.0718"/>
<path d="M219.4 414.6 L223.3 407.2 L227.2 399.8 L231.3 392.5 L235.5 385.3 L239.7 378.1 L244.1 371.0 L248.6 363.9 L253.2 357.0 L258.0 350.0 L262.8 343.2 L267.7 336.4 L272.7 329.8 L277.8 323.1 L283.0 316.6 L288.4 310.2 L293.8 303.8 L299.3 297.5 L304.9 291.3 L310.6 285.2 L316.4 279.1 L322.3 273.2 L328.3 267.4 L334.3 261.6 L340.5 255.9 L346.7 250.3 L353.0 244.9 L359.4 239.5 L365.9 234.2 L372.5 229.0 L379.1 223.9 L385.8 218.9 L392.6 214.1 L399.5 209.3 L406.4 204.6 L413.4 200.0 L420.5 195.6 L427.6 191.2 L434.8 187.0 L442.1 182.8 L449.4 178.8 L456.8 174.9 L464.3 171.1 L471.8 167.4 L479.3 163.8 L486.9 160.4 L494.6 157.1 L502.3 153.8 L510.1 150.7 L517.9 147.7 L525.8 144.9 L533.7 142.1 L541.6 139.5 L549.6 137.0 L557.6 134.6 L565.6 132.3 L573.7 130.2 L581.8 128.1 L590.0 126.3 L598.1 124.5 L606.3 122.8 L609.7 140.0 L601.7 141.6 L593.8 143.3 L585.9 145.1 L578.1 147.1 L570.2 149.2 L562.4 151.3 L554.7 153.7 L547.0 156.1 L539.3 158.6 L531.6 161.3 L524.0 164.1 L516.5 167.0 L508.9 170.0 L501.5 173.1 L494.0 176.3 L486.7 179.7 L479.3 183.1 L472.1 186.7 L464.9 190.4 L457.7 194.2 L450.6 198.1 L443.6 202.1 L436.6 206.2 L429.7 210.4 L422.8 214.7 L416.0 219.2 L409.3 223.7 L402.7 228.3 L396.1 233.0 L389.6 237.9 L383.2 242.8 L376.8 247.8 L370.6 252.9 L364.4 258.1 L358.2 263.4 L352.2 268.8 L346.2 274.3 L340.4 279.9 L334.6 285.6 L328.9 291.3 L323.3 297.2 L317.8 303.1 L312.3 309.1 L307.0 315.2 L301.8 321.4 L296.6 327.6 L291.5 333.9 L286.6 340.3 L281.7 346.8 L277.0 353.4 L272.3 360.0 L267.7 366.7 L263.3 373.4 L258.9 380.3 L254.7 387.2 L250.5 394.1 L246.5 401.1 L242.5 408.2 L238.7 415.3 L235.0 422.5 Z" fill="#3f8a72" fill-opacity="0.0661"/>
<path d="M219.4 414.6 L223.3 407.2 L227.2 399.8 L231.3 392.5 L235.5 385.3 L239.7 378.1 L244.1 371.0 L248.6 363.9 L253.2 357.0 L258.0 350.0 L262.8 343.2 L267.7 336.4 L272.7 329.8 L277.8 323.1 L283.0 316.6 L288.4 310.2 L293.8 303.8 L299.3 297.5 L304.9 291.3 L310.6 285.2 L316.4 279.1 L322.3 273.2 L328.3 267.4 L334.3 261.6 L340.5 255.9 L346.7 250.3 L353.0 244.9 L359.4 239.5 L365.9 234.2 L372.5 229.0 L379.1 223.9 L385.8 218.9 L392.6 214.1 L399.5 209.3 L406.4 204.6 L413.4 200.0 L420.5 195.6 L427.6 191.2 L434.8 187.0 L442.1 182.8 L449.4 178.8 L456.8 174.9 L464.3 171.1 L471.8 167.4 L479.3 163.8 L486.9 160.4 L494.6 157.1 L502.3 153.8 L510.1 150.7 L517.9 147.7 L525.8 144.9 L533.7 142.1 L541.6 139.5 L549.6 137.0 L557.6 134.6 L565.6 132.3 L573.7 130.2 L581.8 128.1 L590.0 126.3 L598.1 124.5 L606.3 122.8 L609.9 141.4 L602.0 143.0 L594.1 144.7 L586.3 146.5 L578.4 148.5 L570.6 150.6 L562.8 152.7 L555.1 155.0 L547.4 157.5 L539.7 160.0 L532.1 162.7 L524.5 165.4 L517.0 168.3 L509.5 171.3 L502.0 174.4 L494.6 177.7 L487.3 181.0 L480.0 184.5 L472.7 188.0 L465.5 191.7 L458.4 195.5 L451.3 199.4 L444.3 203.3 L437.3 207.4 L430.4 211.6 L423.6 216.0 L416.8 220.4 L410.2 224.9 L403.5 229.5 L397.0 234.2 L390.5 239.0 L384.1 243.9 L377.7 248.9 L371.5 254.0 L365.3 259.2 L359.2 264.5 L353.2 269.9 L347.2 275.4 L341.4 281.0 L335.6 286.6 L329.9 292.3 L324.3 298.2 L318.8 304.1 L313.4 310.1 L308.1 316.1 L302.9 322.3 L297.7 328.5 L292.7 334.8 L287.7 341.2 L282.9 347.7 L278.1 354.2 L273.5 360.8 L268.9 367.5 L264.5 374.2 L260.2 381.0 L255.9 387.9 L251.8 394.8 L247.7 401.8 L243.8 408.9 L240.0 416.0 L236.3 423.2 Z" fill="#3f8a72" fill-opacity="0.0612"/>
<path d="M219.4 414.6 L223.3 407.2 L227.2 399.8 L231.3 392.5 L235.5 385.3 L239.7 378.1 L244.1 371.0 L248.6 363.9 L253.2 357.0 L258.0 350.0 L262.8 343.2 L267.7 336.4 L272.7 329.8 L277.8 323.1 L283.0 316.6 L288.4 310.2 L293.8 303.8 L299.3 297.5 L304.9 291.3 L310.6 285.2 L316.4 279.1 L322.3 273.2 L328.3 267.4 L334.3 261.6 L340.5 255.9 L346.7 250.3 L353.0 244.9 L359.4 239.5 L365.9 234.2 L372.5 229.0 L379.1 223.9 L385.8 218.9 L392.6 214.1 L399.5 209.3 L406.4 204.6 L413.4 200.0 L420.5 195.6 L427.6 191.2 L434.8 187.0 L442.1 182.8 L449.4 178.8 L456.8 174.9 L464.3 171.1 L471.8 167.4 L479.3 163.8 L486.9 160.4 L494.6 157.1 L502.3 153.8 L510.1 150.7 L517.9 147.7 L525.8 144.9 L533.7 142.1 L541.6 139.5 L549.6 137.0 L557.6 134.6 L565.6 132.3 L573.7 130.2 L581.8 128.1 L590.0 126.3 L598.1 124.5 L606.3 122.8 L610.2 142.8 L602.3 144.4 L594.4 146.1 L586.6 147.9 L578.8 149.9 L571.0 152.0 L563.3 154.1 L555.5 156.4 L547.9 158.9 L540.2 161.4 L532.6 164.0 L525.0 166.8 L517.5 169.7 L510.0 172.7 L502.6 175.8 L495.2 179.0 L487.9 182.3 L480.6 185.8 L473.4 189.3 L466.2 193.0 L459.1 196.7 L452.0 200.6 L445.0 204.6 L438.1 208.7 L431.2 212.9 L424.4 217.2 L417.7 221.6 L411.0 226.1 L404.4 230.7 L397.8 235.4 L391.4 240.2 L385.0 245.1 L378.6 250.1 L372.4 255.2 L366.2 260.4 L360.2 265.6 L354.2 271.0 L348.2 276.5 L342.4 282.0 L336.6 287.6 L331.0 293.4 L325.4 299.2 L319.9 305.1 L314.5 311.0 L309.2 317.1 L304.0 323.2 L298.9 329.4 L293.8 335.7 L288.9 342.1 L284.1 348.5 L279.3 355.1 L274.7 361.6 L270.2 368.3 L265.7 375.0 L261.4 381.8 L257.2 388.7 L253.0 395.6 L249.0 402.6 L245.1 409.6 L241.3 416.7 L237.6 423.9 Z" fill="#3f8a72" fill-opacity="0.0567"/>
<path d="M219.4 414.6 L223.3 407.2 L227.2 399.8 L231.3 392.5 L235.5 385.3 L239.7 378.1 L244.1 371.0 L248.6 363.9 L253.2 357.0 L258.0 350.0 L262.8 343.2 L267.7 336.4 L272.7 329.8 L277.8 323.1 L283.0 316.6 L288.4 310.2 L293.8 303.8 L299.3 297.5 L304.9 291.3 L310.6 285.2 L316.4 279.1 L322.3 273.2 L328.3 267.4 L334.3 261.6 L340.5 255.9 L346.7 250.3 L353.0 244.9 L359.4 239.5 L365.9 234.2 L372.5 229.0 L379.1 223.9 L385.8 218.9 L392.6 214.1 L399.5 209.3 L406.4 204.6 L413.4 200.0 L420.5 195.6 L427.6 191.2 L434.8 187.0 L442.1 182.8 L449.4 178.8 L456.8 174.9 L464.3 171.1 L471.8 167.4 L479.3 163.8 L486.9 160.4 L494.6 157.1 L502.3 153.8 L510.1 150.7 L517.9 147.7 L525.8 144.9 L533.7 142.1 L541.6 139.5 L549.6 137.0 L557.6 134.6 L565.6 132.3 L573.7 130.2 L581.8 128.1 L590.0 126.3 L598.1 124.5 L606.3 122.8 L610.5 144.2 L602.6 145.8 L594.8 147.5 L586.9 149.4 L579.2 151.3 L571.4 153.4 L563.7 155.5 L556.0 157.8 L548.3 160.2 L540.7 162.8 L533.1 165.4 L525.5 168.2 L518.0 171.0 L510.6 174.0 L503.2 177.1 L495.8 180.3 L488.5 183.6 L481.2 187.1 L474.0 190.6 L466.9 194.3 L459.8 198.0 L452.7 201.9 L445.8 205.9 L438.8 209.9 L432.0 214.1 L425.2 218.4 L418.5 222.8 L411.8 227.3 L405.2 231.9 L398.7 236.6 L392.2 241.3 L385.9 246.2 L379.6 251.2 L373.3 256.3 L367.2 261.5 L361.1 266.7 L355.1 272.1 L349.2 277.5 L343.4 283.1 L337.7 288.7 L332.0 294.4 L326.5 300.2 L321.0 306.0 L315.6 312.0 L310.3 318.0 L305.1 324.2 L300.0 330.4 L295.0 336.6 L290.1 343.0 L285.2 349.4 L280.5 355.9 L275.9 362.5 L271.4 369.1 L266.9 375.8 L262.6 382.6 L258.4 389.4 L254.3 396.3 L250.3 403.3 L246.4 410.3 L242.6 417.4 L238.9 424.5 Z" fill="#3f8a72" fill-opacity="0.0528"/>
<path d="M219.4 414.6 L223.3 407.2 L227.2 399.8 L231.3 392.5 L235.5 385.3 L239.7 378.1 L244.1 371.0 L248.6 363.9 L253.2 357.0 L258.0 350.0 L262.8 343.2 L267.7 336.4 L272.7 329.8 L277.8 323.1 L283.0 316.6 L288.4 310.2 L293.8 303.8 L299.3 297.5 L304.9 291.3 L310.6 285.2 L316.4 279.1 L322.3 273.2 L328.3 267.4 L334.3 261.6 L340.5 255.9 L346.7 250.3 L353.0 244.9 L359.4 239.5 L365.9 234.2 L372.5 229.0 L379.1 223.9 L385.8 218.9 L392.6 214.1 L399.5 209.3 L406.4 204.6 L413.4 200.0 L420.5 195.6 L427.6 191.2 L434.8 187.0 L442.1 182.8 L449.4 178.8 L456.8 174.9 L464.3 171.1 L471.8 167.4 L479.3 163.8 L486.9 160.4 L494.6 157.1 L502.3 153.8 L510.1 150.7 L517.9 147.7 L525.8 144.9 L533.7 142.1 L541.6 139.5 L549.6 137.0 L557.6 134.6 L565.6 132.3 L573.7 130.2 L581.8 128.1 L590.0 126.3 L598.1 124.5 L606.3 122.8 L610.8 145.7 L602.9 147.3 L595.1 149.0 L587.3 150.8 L579.5 152.7 L571.8 154.8 L564.1 156.9 L556.4 159.2 L548.7 161.6 L541.1 164.1 L533.6 166.8 L526.1 169.5 L518.6 172.4 L511.1 175.4 L503.7 178.5 L496.4 181.7 L489.1 185.0 L481.9 188.4 L474.7 191.9 L467.5 195.6 L460.5 199.3 L453.4 203.2 L446.5 207.1 L439.6 211.2 L432.7 215.4 L426.0 219.6 L419.3 224.0 L412.6 228.5 L406.0 233.1 L399.5 237.7 L393.1 242.5 L386.8 247.4 L380.5 252.3 L374.3 257.4 L368.1 262.6 L362.1 267.8 L356.1 273.2 L350.2 278.6 L344.4 284.1 L338.7 289.7 L333.1 295.4 L327.5 301.2 L322.1 307.0 L316.7 313.0 L311.4 319.0 L306.2 325.1 L301.1 331.3 L296.1 337.5 L291.2 343.9 L286.4 350.3 L281.7 356.8 L277.1 363.3 L272.6 369.9 L268.2 376.6 L263.8 383.4 L259.6 390.2 L255.5 397.1 L251.5 404.0 L247.6 411.0 L243.9 418.1 L240.2 425.2 Z" fill="#3f8a72" fill-opacity="0.0491"/>
<path d="M219.4 414.6 L223.3 407.2 L227.2 399.8 L231.3 392.5 L235.5 385.3 L239.7 378.1 L244.1 371.0 L248.6 363.9 L253.2 357.0 L258.0 350.0 L262.8 343.2 L267.7 336.4 L272.7 329.8 L277.8 323.1 L283.0 316.6 L288.4 310.2 L293.8 303.8 L299.3 297.5 L304.9 291.3 L310.6 285.2 L316.4 279.1 L322.3 273.2 L328.3 267.4 L334.3 261.6 L340.5 255.9 L346.7 250.3 L353.0 244.9 L359.4 239.5 L365.9 234.2 L372.5 229.0 L379.1 223.9 L385.8 218.9 L392.6 214.1 L399.5 209.3 L406.4 204.6 L413.4 200.0 L420.5 195.6 L427.6 191.2 L434.8 187.0 L442.1 182.8 L449.4 178.8 L456.8 174.9 L464.3 171.1 L471.8 167.4 L479.3 163.8 L486.9 160.4 L494.6 157.1 L502.3 153.8 L510.1 150.7 L517.9 147.7 L525.8 144.9 L533.7 142.1 L541.6 139.5 L549.6 137.0 L557.6 134.6 L565.6 132.3 L573.7 130.2 L581.8 128.1 L590.0 126.3 L598.1 124.5 L606.3 122.8 L611.0 147.1 L603.2 148.7 L595.4 150.4 L587.6 152.2 L579.9 154.1 L572.2 156.2 L564.5 158.3 L556.8 160.6 L549.2 163.0 L541.6 165.5 L534.1 168.1 L526.6 170.9 L519.1 173.7 L511.7 176.7 L504.3 179.8 L497.0 183.0 L489.7 186.3 L482.5 189.7 L475.3 193.2 L468.2 196.8 L461.2 200.6 L454.2 204.4 L447.2 208.4 L440.3 212.4 L433.5 216.6 L426.8 220.9 L420.1 225.2 L413.4 229.7 L406.9 234.2 L400.4 238.9 L394.0 243.7 L387.6 248.5 L381.4 253.5 L375.2 258.5 L369.1 263.7 L363.0 268.9 L357.1 274.2 L351.2 279.6 L345.4 285.1 L339.7 290.7 L334.1 296.4 L328.6 302.2 L323.1 308.0 L317.8 313.9 L312.5 319.9 L307.3 326.0 L302.2 332.2 L297.3 338.4 L292.4 344.8 L287.6 351.1 L282.9 357.6 L278.3 364.1 L273.8 370.7 L269.4 377.4 L265.1 384.1 L260.9 390.9 L256.8 397.8 L252.8 404.7 L248.9 411.7 L245.2 418.7 L241.5 425.8 Z" fill="#3f8a72" fill-opacity="0.0457"/>
<path d="M219.4 414.6 L223.3 407.2 L227.2 399.8 L231.3 392.5 L235.5 385.3 L239.7 378.1 L244.1 371.0 L248.6 363.9 L253.2 357.0 L258.0 350.0 L262.8 343.2 L267.7 336.4 L272.7 329.8 L277.8 323.1 L283.0 316.6 L288.4 310.2 L293.8 303.8 L299.3 297.5 L304.9 291.3 L310.6 285.2 L316.4 279.1 L322.3 273.2 L328.3 267.4 L334.3 261.6 L340.5 255.9 L346.7 250.3 L353.0 244.9 L359.4 239.5 L365.9 234.2 L372.5 229.0 L379.1 223.9 L385.8 218.9 L392.6 214.1 L399.5 209.3 L406.4 204.6 L413.4 200.0 L420.5 195.6 L427.6 191.2 L434.8 187.0 L442.1 182.8 L449.4 178.8 L456.8 174.9 L464.3 171.1 L471.8 167.4 L479.3 163.8 L486.9 160.4 L494.6 157.1 L502.3 153.8 L510.1 150.7 L517.9 147.7 L525.8 144.9 L533.7 142.1 L541.6 139.5 L549.6 137.0 L557.6 134.6 L565.6 132.3 L573.7 130.2 L581.8 128.1 L590.0 126.3 L598.1 124.5 L606.3 122.8 L611.3 148.5 L603.5 150.1 L595.7 151.8 L588.0 153.6 L580.2 155.5 L572.5 157.6 L564.9 159.7 L557.2 162.0 L549.6 164.4 L542.1 166.9 L534.6 169.5 L527.1 172.3 L519.6 175.1 L512.2 178.1 L504.9 181.1 L497.6 184.3 L490.3 187.6 L483.1 191.0 L476.0 194.5 L468.9 198.1 L461.8 201.9 L454.9 205.7 L447.9 209.6 L441.1 213.7 L434.3 217.8 L427.5 222.1 L420.9 226.4 L414.3 230.9 L407.7 235.4 L401.3 240.1 L394.9 244.8 L388.5 249.7 L382.3 254.6 L376.1 259.7 L370.0 264.8 L364.0 270.0 L358.1 275.3 L352.2 280.7 L346.4 286.2 L340.7 291.8 L335.1 297.4 L329.6 303.2 L324.2 309.0 L318.9 314.9 L313.6 320.9 L308.4 327.0 L303.4 333.1 L298.4 339.3 L293.5 345.6 L288.7 352.0 L284.1 358.4 L279.5 365.0 L275.0 371.5 L270.6 378.2 L266.3 384.9 L262.1 391.7 L258.0 398.5 L254.1 405.4 L250.2 412.4 L246.4 419.4 L242.8 426.5 Z" fill="#3f8a72" fill-opacity="0.0424"/>
<path d="M219.4 414.6 L223.3 407.2 L227.2 399.8 L231.3 392.5 L235.5 385.3 L239.7 378.1 L244.1 371.0 L248.6 363.9 L253.2 357.0 L258.0 350.0 L262.8 343.2 L267.7 336.4 L272.7 329.8 L277.8 323.1 L283.0 316.6 L288.4 310.2 L293.8 303.8 L299.3 297.5 L304.9 291.3 L310.6 285.2 L316.4 279.1 L322.3 273.2 L328.3 267.4 L334.3 261.6 L340.5 255.9 L346.7 250.3 L353.0 244.9 L359.4 239.5 L365.9 234.2 L372.5 229.0 L379.1 223.9 L385.8 218.9 L392.6 214.1 L399.5 209.3 L406.4 204.6 L413.4 200.0 L420.5 195.6 L427.6 191.2 L434.8 187.0 L442.1 182.8 L449.4 178.8 L456.8 174.9 L464.3 171.1 L471.8 167.4 L479.3 163.8 L486.9 160.4 L494.6 157.1 L502.3 153.8 L510.1 150.7 L517.9 147.7 L525.8 144.9 L533.7 142.1 L541.6 139.5 L549.6 137.0 L557.6 134.6 L565.6 132.3 L573.7 130.2 L581.8 128.1 L590.0 126.3 L598.1 124.5 L606.3 122.8 L611.6 150.0 L603.8 151.5 L596.0 153.2 L588.3 155.0 L580.6 156.9 L572.9 159.0 L565.3 161.1 L557.7 163.4 L550.1 165.8 L542.5 168.3 L535.0 170.9 L527.6 173.6 L520.2 176.5 L512.8 179.4 L505.5 182.5 L498.2 185.6 L490.9 188.9 L483.8 192.3 L476.6 195.8 L469.6 199.4 L462.5 203.1 L455.6 207.0 L448.7 210.9 L441.8 214.9 L435.0 219.1 L428.3 223.3 L421.7 227.6 L415.1 232.1 L408.6 236.6 L402.1 241.3 L395.7 246.0 L389.4 250.8 L383.2 255.8 L377.0 260.8 L371.0 265.9 L365.0 271.1 L359.0 276.4 L353.2 281.8 L347.4 287.2 L341.8 292.8 L336.2 298.4 L330.7 304.2 L325.3 310.0 L319.9 315.9 L314.7 321.8 L309.6 327.9 L304.5 334.0 L299.5 340.2 L294.7 346.5 L289.9 352.9 L285.2 359.3 L280.7 365.8 L276.2 372.3 L271.8 379.0 L267.5 385.7 L263.4 392.4 L259.3 399.3 L255.3 406.1 L251.5 413.1 L247.7 420.1 L244.1 427.1 Z" fill="#3f8a72" fill-opacity="0.0393"/>
<path d="M219.4 414.6 L223.3 407.2 L227.2 399.8 L231.3 392.5 L235.5 385.3 L239.7 378.1 L244.1 371.0 L248.6 363.9 L253.2 357.0 L258.0 350.0 L262.8 343.2 L267.7 336.4 L272.7 329.8 L277.8 323.1 L283.0 316.6 L288.4 310.2 L293.8 303.8 L299.3 297.5 L304.9 291.3 L310.6 285.2 L316.4 279.1 L322.3 273.2 L328.3 267.4 L334.3 261.6 L340.5 255.9 L346.7 250.3 L353.0 244.9 L359.4 239.5 L365.9 234.2 L372.5 229.0 L379.1 223.9 L385.8 218.9 L392.6 214.1 L399.5 209.3 L406.4 204.6 L413.4 200.0 L420.5 195.6 L427.6 191.2 L434.8 187.0 L442.1 182.8 L449.4 178.8 L456.8 174.9 L464.3 171.1 L471.8 167.4 L479.3 163.8 L486.9 160.4 L494.6 157.1 L502.3 153.8 L510.1 150.7 L517.9 147.7 L525.8 144.9 L533.7 142.1 L541.6 139.5 L549.6 137.0 L557.6 134.6 L565.6 132.3 L573.7 130.2 L581.8 128.1 L590.0 126.3 L598.1 124.5 L606.3 122.8 L611.9 151.4 L604.1 153.0 L596.4 154.6 L588.6 156.4 L581.0 158.3 L573.3 160.4 L565.7 162.5 L558.1 164.8 L550.5 167.2 L543.0 169.7 L535.5 172.3 L528.1 175.0 L520.7 177.8 L513.3 180.8 L506.0 183.8 L498.8 187.0 L491.6 190.2 L484.4 193.6 L477.3 197.1 L470.2 200.7 L463.2 204.4 L456.3 208.2 L449.4 212.2 L442.6 216.2 L435.8 220.3 L429.1 224.5 L422.5 228.9 L415.9 233.3 L409.4 237.8 L403.0 242.4 L396.6 247.2 L390.3 252.0 L384.1 256.9 L378.0 261.9 L371.9 267.0 L365.9 272.2 L360.0 277.5 L354.2 282.8 L348.5 288.3 L342.8 293.8 L337.2 299.5 L331.7 305.2 L326.3 311.0 L321.0 316.8 L315.8 322.8 L310.7 328.8 L305.6 334.9 L300.7 341.1 L295.8 347.4 L291.1 353.7 L286.4 360.1 L281.9 366.6 L277.4 373.2 L273.0 379.8 L268.8 386.4 L264.6 393.2 L260.6 400.0 L256.6 406.9 L252.8 413.8 L249.0 420.8 L245.4 427.8 Z" fill="#3f8a72" fill-opacity="0.0360"/>
<path d="M219.4 414.6 L223.3 407.2 L227.2 399.8 L231.3 392.5 L235.5 385.3 L239.7 378.1 L244.1 371.0 L248.6 363.9 L253.2 357.0 L258.0 350.0 L262.8 343.2 L267.7 336.4 L272.7 329.8 L277.8 323.1 L283.0 316.6 L288.4 310.2 L293.8 303.8 L299.3 297.5 L304.9 291.3 L310.6 285.2 L316.4 279.1 L322.3 273.2 L328.3 267.4 L334.3 261.6 L340.5 255.9 L346.7 250.3 L353.0 244.9 L359.4 239.5 L365.9 234.2 L372.5 229.0 L379.1 223.9 L385.8 218.9 L392.6 214.1 L399.5 209.3 L406.4 204.6 L413.4 200.0 L420.5 195.6 L427.6 191.2 L434.8 187.0 L442.1 182.8 L449.4 178.8 L456.8 174.9 L464.3 171.1 L471.8 167.4 L479.3 163.8 L486.9 160.4 L494.6 157.1 L502.3 153.8 L510.1 150.7 L517.9 147.7 L525.8 144.9 L533.7 142.1 L541.6 139.5 L549.6 137.0 L557.6 134.6 L565.6 132.3 L573.7 130.2 L581.8 128.1 L590.0 126.3 L598.1 124.5 L606.3 122.8 L612.1 152.8 L604.4 154.4 L596.7 156.1 L589.0 157.8 L581.3 159.8 L573.7 161.8 L566.1 163.9 L558.5 166.2 L551.0 168.5 L543.5 171.0 L536.0 173.6 L528.6 176.3 L521.2 179.2 L513.9 182.1 L506.6 185.1 L499.4 188.3 L492.2 191.6 L485.0 194.9 L477.9 198.4 L470.9 202.0 L463.9 205.7 L457.0 209.5 L450.1 213.4 L443.3 217.4 L436.6 221.5 L429.9 225.8 L423.3 230.1 L416.7 234.5 L410.2 239.0 L403.8 243.6 L397.5 248.3 L391.2 253.1 L385.0 258.0 L378.9 263.0 L372.9 268.1 L366.9 273.3 L361.0 278.5 L355.2 283.9 L349.5 289.3 L343.8 294.9 L338.3 300.5 L332.8 306.2 L327.4 312.0 L322.1 317.8 L316.9 323.8 L311.8 329.8 L306.8 335.9 L301.8 342.0 L297.0 348.3 L292.3 354.6 L287.6 361.0 L283.1 367.4 L278.6 374.0 L274.3 380.6 L270.0 387.2 L265.9 393.9 L261.8 400.7 L257.9 407.6 L254.0 414.5 L250.3 421.4 L246.7 428.5 Z" fill="#3f8a72" fill-opacity="0.0322"/>
<path d="M219.4 414.6 L223.3 407.2 L227.2 399.8 L231.3 392.5 L235.5 385.3 L239.7 378.1 L244.1 371.0 L248.6 363.9 L253.2 357.0 L258.0 350.0 L262.8 343.2 L267.7 336.4 L272.7 329.8 L277.8 323.1 L283.0 316.6 L288.4 310.2 L293.8 303.8 L299.3 297.5 L304.9 291.3 L310.6 285.2 L316.4 279.1 L322.3 273.2 L328.3 267.4 L334.3 261.6 L340.5 255.9 L346.7 250.3 L353.0 244.9 L359.4 239.5 L365.9 234.2 L372.5 229.0 L379.1 223.9 L385.8 218.9 L392.6 214.1 L399.5 209.3 L406.4 204.6 L413.4 200.0 L420.5 195.6 L427.6 191.2 L434.8 187.0 L442.1 182.8 L449.4 178.8 L456.8 174.9 L464.3 171.1 L471.8 167.4 L479.3 163.8 L486.9 160.4 L494.6 157.1 L502.3 153.8 L510.1 150.7 L517.9 147.7 L525.8 144.9 L533.7 142.1 L541.6 139.5 L549.6 137.0 L557.6 134.6 L565.6 132.3 L573.7 130.2 L581.8 128.1 L590.0 126.3 L598.1 124.5 L606.3 122.8 L612.4 154.2 L604.7 155.8 L597.0 157.5 L589.3 159.3 L581.7 161.2 L574.1 163.2 L566.5 165.3 L558.9 167.6 L551.4 169.9 L544.0 172.4 L536.5 175.0 L529.1 177.7 L521.8 180.5 L514.4 183.4 L507.2 186.5 L500.0 189.6 L492.8 192.9 L485.7 196.3 L478.6 199.7 L471.6 203.3 L464.6 207.0 L457.7 210.8 L450.9 214.7 L444.1 218.7 L437.3 222.8 L430.7 227.0 L424.1 231.3 L417.6 235.7 L411.1 240.2 L404.7 244.8 L398.4 249.5 L392.1 254.3 L385.9 259.2 L379.8 264.1 L373.8 269.2 L367.9 274.4 L362.0 279.6 L356.2 285.0 L350.5 290.4 L344.9 295.9 L339.3 301.5 L333.9 307.2 L328.5 312.9 L323.2 318.8 L318.0 324.7 L312.9 330.7 L307.9 336.8 L303.0 342.9 L298.2 349.2 L293.4 355.5 L288.8 361.8 L284.3 368.3 L279.8 374.8 L275.5 381.4 L271.2 388.0 L267.1 394.7 L263.1 401.5 L259.1 408.3 L255.3 415.2 L251.6 422.1 L248.0 429.1 Z" fill="#3f8a72" fill-opacity="0.0257"/>
<path d="M219.4 414.6 L223.3 407.2 L227.2 399.8 L231.3 392.5 L235.5 385.3 L239.7 378.1 L244.1 371.0 L248.6 363.9 L253.2 357.0 L258.0 350.0 L262.8 343.2 L267.7 336.4 L272.7 329.8 L277.8 323.1 L283.0 316.6 L288.4 310.2 L293.8 303.8 L299.3 297.5 L304.9 291.3 L310.6 285.2 L316.4 279.1 L322.3 273.2 L328.3 267.4 L334.3 261.6 L340.5 255.9 L346.7 250.3 L353.0 244.9 L359.4 239.5 L365.9 234.2 L372.5 229.0 L379.1 223.9 L385.8 218.9 L392.6 214.1 L399.5 209.3 L406.4 204.6 L413.4 200.0 L420.5 195.6 L427.6 191.2 L434.8 187.0 L442.1 182.8 L449.4 178.8 L456.8 174.9 L464.3 171.1 L471.8 167.4 L479.3 163.8 L486.9 160.4 L494.6 157.1 L502.3 153.8 L510.1 150.7 L517.9 147.7 L525.8 144.9 L533.7 142.1 L541.6 139.5 L549.6 137.0 L557.6 134.6 L565.6 132.3 L573.7 130.2 L581.8 128.1 L590.0 126.3 L598.1 124.5 L606.3 122.8" fill="none" stroke="#bdeedd" stroke-width="1" stroke-opacity=".8"/>
<path d="M800.1 133.6 L807.7 134.3 L815.2 135.2 L822.7 136.3 L830.1 137.4 L837.6 138.7 L845.0 140.1 L852.4 141.6 L859.8 143.2 L867.1 145.0 L874.4 146.9 L881.7 148.9 L889.0 151.1 L896.2 153.3 L903.4 155.7 L910.5 158.2 L917.6 160.8 L924.6 163.6 L931.6 166.4 L938.6 169.4 L945.5 172.5 L952.3 175.7 L959.1 179.0 L965.8 182.4 L972.5 186.0 L979.1 189.7 L985.7 193.4 L992.2 197.3 L998.6 201.3 L1004.9 205.4 L1011.2 209.6 L1017.4 213.9 L1023.6 218.3 L1029.6 222.8 L1035.6 227.4 L1041.5 232.1 L1047.4 237.0 L1053.1 241.9 L1058.8 246.9 L1064.4 252.0 L1069.8 257.2 L1075.3 262.4 L1080.6 267.8 L1085.8 273.3 L1090.9 278.8 L1096.0 284.5 L1100.9 290.2 L1105.7 296.0 L1110.5 301.9 L1115.1 307.8 L1119.7 313.9 L1124.1 320.0 L1128.5 326.2 L1132.7 332.4 L1136.8 338.8 L1140.9 345.2 L1144.8 351.6 L1148.6 358.1 L1152.3 364.7 L1155.9 371.4 L1159.3 378.1 L1180.0 60.0 Z" fill="#cae5d8"/>
<path d="M800.1 133.6 L807.7 134.3 L815.2 135.2 L822.7 136.3 L830.1 137.4 L837.6 138.7 L845.0 140.1 L852.4 141.6 L859.8 143.2 L867.1 145.0 L874.4 146.9 L881.7 148.9 L889.0 151.1 L896.2 153.3 L903.4 155.7 L910.5 158.2 L917.6 160.8 L924.6 163.6 L931.6 166.4 L938.6 169.4 L945.5 172.5 L952.3 175.7 L959.1 179.0 L965.8 182.4 L972.5 186.0 L979.1 189.7 L985.7 193.4 L992.2 197.3 L998.6 201.3 L1004.9 205.4 L1011.2 209.6 L1017.4 213.9 L1023.6 218.3 L1029.6 222.8 L1035.6 227.4 L1041.5 232.1 L1047.4 237.0 L1053.1 241.9 L1058.8 246.9 L1064.4 252.0 L1069.8 257.2 L1075.3 262.4 L1080.6 267.8 L1085.8 273.3 L1090.9 278.8 L1096.0 284.5 L1100.9 290.2 L1105.7 296.0 L1110.5 301.9 L1115.1 307.8 L1119.7 313.9 L1124.1 320.0 L1128.5 326.2 L1132.7 332.4 L1136.8 338.8 L1140.9 345.2 L1144.8 351.6 L1148.6 358.1 L1152.3 364.7 L1155.9 371.4 L1159.3 378.1 L1158.4 378.6 L1155.0 371.9 L1151.4 365.2 L1147.7 358.7 L1143.9 352.1 L1140.0 345.7 L1136.0 339.3 L1131.8 333.0 L1127.6 326.8 L1123.3 320.6 L1118.8 314.5 L1114.3 308.5 L1109.6 302.5 L1104.9 296.7 L1100.1 290.9 L1095.1 285.2 L1090.1 279.6 L1085.0 274.1 L1079.7 268.6 L1074.4 263.3 L1069.0 258.1 L1063.5 252.9 L1057.9 247.9 L1052.2 242.9 L1046.4 238.1 L1040.6 233.3 L1034.7 228.7 L1028.7 224.1 L1022.6 219.7 L1016.5 215.2 L1010.3 210.9 L1004.1 206.7 L997.8 202.6 L991.4 198.6 L984.9 194.7 L978.4 190.9 L971.8 187.2 L965.2 183.7 L958.5 180.2 L951.7 176.9 L944.9 173.7 L938.1 170.6 L931.2 167.6 L924.2 164.7 L917.2 161.9 L910.1 159.3 L903.0 156.8 L895.8 154.4 L888.6 152.2 L881.4 150.0 L874.2 148.0 L866.9 146.1 L859.5 144.3 L852.2 142.7 L844.8 141.1 L837.4 139.7 L830.0 138.4 L822.5 137.3 L815.0 136.3 L807.5 135.3 L800.0 134.6 Z" fill="#3f8a72" fill-opacity="0.3192"/>
<path d="M800.1 133.6 L807.7 134.3 L815.2 135.2 L822.7 136.3 L830.1 137.4 L837.6 138.7 L845.0 140.1 L852.4 141.6 L859.8 143.2 L867.1 145.0 L874.4 146.9 L881.7 148.9 L889.0 151.1 L896.2 153.3 L903.4 155.7 L910.5 158.2 L917.6 160.8 L924.6 163.6 L931.6 166.4 L938.6 169.4 L945.5 172.5 L952.3 175.7 L959.1 179.0 L965.8 182.4 L972.5 186.0 L979.1 189.7 L985.7 193.4 L992.2 197.3 L998.6 201.3 L1004.9 205.4 L1011.2 209.6 L1017.4 213.9 L1023.6 218.3 L1029.6 222.8 L1035.6 227.4 L1041.5 232.1 L1047.4 237.0 L1053.1 241.9 L1058.8 246.9 L1064.4 252.0 L1069.8 257.2 L1075.3 262.4 L1080.6 267.8 L1085.8 273.3 L1090.9 278.8 L1096.0 284.5 L1100.9 290.2 L1105.7 296.0 L1110.5 301.9 L1115.1 307.8 L1119.7 313.9 L1124.1 320.0 L1128.5 326.2 L1132.7 332.4 L1136.8 338.8 L1140.9 345.2 L1144.8 351.6 L1148.6 358.1 L1152.3 364.7 L1155.9 371.4 L1159.3 378.1 L1157.6 379.0 L1154.1 372.3 L1150.5 365.7 L1146.8 359.2 L1143.0 352.7 L1139.1 346.2 L1135.1 339.9 L1131.0 333.6 L1126.7 327.4 L1122.4 321.2 L1118.0 315.1 L1113.4 309.1 L1108.8 303.2 L1104.0 297.4 L1099.2 291.6 L1094.3 285.9 L1089.3 280.3 L1084.1 274.8 L1078.9 269.4 L1073.6 264.1 L1068.1 259.0 L1062.6 253.9 L1057.0 248.9 L1051.3 244.0 L1045.5 239.2 L1039.6 234.5 L1033.7 229.9 L1027.7 225.4 L1021.6 221.0 L1015.5 216.6 L1009.4 212.2 L1003.2 208.0 L996.9 203.9 L990.6 199.9 L984.2 196.0 L977.7 192.2 L971.2 188.5 L964.6 184.9 L957.9 181.4 L951.2 178.1 L944.4 174.8 L937.6 171.7 L930.7 168.7 L923.7 165.8 L916.7 163.1 L909.7 160.4 L902.6 157.9 L895.5 155.5 L888.3 153.3 L881.1 151.1 L873.9 149.1 L866.6 147.2 L859.3 145.4 L851.9 143.7 L844.6 142.2 L837.2 140.8 L829.8 139.5 L822.4 138.3 L814.9 137.3 L807.4 136.4 L800.0 135.6 Z" fill="#3f8a72" fill-opacity="0.2406"/>
<path d="M800.1 133.6 L807.7 134.3 L815.2 135.2 L822.7 136.3 L830.1 137.4 L837.6 138.7 L845.0 140.1 L852.4 141.6 L859.8 143.2 L867.1 145.0 L874.4 146.9 L881.7 148.9 L889.0 151.1 L896.2 153.3 L903.4 155.7 L910.5 158.2 L917.6 160.8 L924.6 163.6 L931.6 166.4 L938.6 169.4 L945.5 172.5 L952.3 175.7 L959.1 179.0 L965.8 182.4 L972.5 186.0 L979.1 189.7 L985.7 193.4 L992.2 197.3 L998.6 201.3 L1004.9 205.4 L1011.2 209.6 L1017.4 213.9 L1023.6 218.3 L1029.6 222.8 L1035.6 227.4 L1041.5 232.1 L1047.4 237.0 L1053.1 241.9 L1058.8 246.9 L1064.4 252.0 L1069.8 257.2 L1075.3 262.4 L1080.6 267.8 L1085.8 273.3 L1090.9 278.8 L1096.0 284.5 L1100.9 290.2 L1105.7 296.0 L1110.5 301.9 L1115.1 307.8 L1119.7 313.9 L1124.1 320.0 L1128.5 326.2 L1132.7 332.4 L1136.8 338.8 L1140.9 345.2 L1144.8 351.6 L1148.6 358.1 L1152.3 364.7 L1155.9 371.4 L1159.3 378.1 L1156.7 379.5 L1153.2 372.8 L1149.6 366.2 L1145.9 359.7 L1142.1 353.2 L1138.2 346.8 L1134.2 340.4 L1130.1 334.2 L1125.8 328.0 L1121.5 321.8 L1117.1 315.8 L1112.6 309.8 L1107.9 303.9 L1103.2 298.1 L1098.4 292.3 L1093.4 286.7 L1088.4 281.1 L1083.3 275.6 L1078.1 270.2 L1072.7 265.0 L1067.2 259.9 L1061.7 254.8 L1056.0 249.9 L1050.3 245.1 L1044.5 240.3 L1038.6 235.7 L1032.7 231.2 L1026.7 226.7 L1020.6 222.4 L1014.6 217.9 L1008.5 213.6 L1002.3 209.3 L996.1 205.2 L989.8 201.2 L983.4 197.3 L977.0 193.5 L970.5 189.7 L963.9 186.1 L957.3 182.7 L950.6 179.3 L943.9 176.0 L937.1 172.9 L930.2 169.8 L923.3 167.0 L916.3 164.2 L909.3 161.6 L902.2 159.0 L895.1 156.6 L888.0 154.4 L880.8 152.2 L873.6 150.2 L866.3 148.3 L859.0 146.5 L851.7 144.8 L844.4 143.2 L837.0 141.8 L829.6 140.5 L822.2 139.3 L814.8 138.3 L807.3 137.4 L799.9 136.6 Z" fill="#3f8a72" fill-opacity="0.1928"/>
<path d="M800.1 133.6 L807.7 134.3 L815.2 135.2 L822.7 136.3 L830.1 137.4 L837.6 138.7 L845.0 140.1 L852.4 141.6 L859.8 143.2 L867.1 145.0 L874.4 146.9 L881.7 148.9 L889.0 151.1 L896.2 153.3 L903.4 155.7 L910.5 158.2 L917.6 160.8 L924.6 163.6 L931.6 166.4 L938.6 169.4 L945.5 172.5 L952.3 175.7 L959.1 179.0 L965.8 182.4 L972.5 186.0 L979.1 189.7 L985.7 193.4 L992.2 197.3 L998.6 201.3 L1004.9 205.4 L1011.2 209.6 L1017.4 213.9 L1023.6 218.3 L1029.6 222.8 L1035.6 227.4 L1041.5 232.1 L1047.4 237.0 L1053.1 241.9 L1058.8 246.9 L1064.4 252.0 L1069.8 257.2 L1075.3 262.4 L1080.6 267.8 L1085.8 273.3 L1090.9 278.8 L1096.0 284.5 L1100.9 290.2 L1105.7 296.0 L1110.5 301.9 L1115.1 307.8 L1119.7 313.9 L1124.1 320.0 L1128.5 326.2 L1132.7 332.4 L1136.8 338.8 L1140.9 345.2 L1144.8 351.6 L1148.6 358.1 L1152.3 364.7 L1155.9 371.4 L1159.3 378.1 L1155.8 379.9 L1152.3 373.3 L1148.7 366.7 L1145.0 360.2 L1141.2 353.7 L1137.3 347.3 L1133.3 341.0 L1129.2 334.8 L1125.0 328.6 L1120.7 322.5 L1116.2 316.4 L1111.7 310.5 L1107.1 304.6 L1102.3 298.8 L1097.5 293.0 L1092.6 287.4 L1087.6 281.8 L1082.5 276.4 L1077.3 271.0 L1071.9 265.8 L1066.4 260.8 L1060.8 255.8 L1055.1 250.9 L1049.4 246.1 L1043.6 241.5 L1037.7 236.9 L1031.7 232.4 L1025.7 228.0 L1019.6 223.7 L1013.6 219.3 L1007.6 214.9 L1001.5 210.7 L995.3 206.5 L989.0 202.5 L982.7 198.5 L976.3 194.7 L969.8 191.0 L963.3 187.4 L956.7 183.9 L950.0 180.5 L943.3 177.2 L936.5 174.0 L929.7 171.0 L922.8 168.1 L915.9 165.3 L908.9 162.7 L901.8 160.2 L894.8 157.8 L887.6 155.5 L880.5 153.3 L873.3 151.3 L866.0 149.3 L858.8 147.5 L851.5 145.9 L844.2 144.3 L836.8 142.9 L829.4 141.6 L822.1 140.4 L814.6 139.3 L807.2 138.4 L799.8 137.6 Z" fill="#3f8a72" fill-opacity="0.1606"/>
<path d="M800.1 133.6 L807.7 134.3 L815.2 135.2 L822.7 136.3 L830.1 137.4 L837.6 138.7 L845.0 140.1 L852.4 141.6 L859.8 143.2 L867.1 145.0 L874.4 146.9 L881.7 148.9 L889.0 151.1 L896.2 153.3 L903.4 155.7 L910.5 158.2 L917.6 160.8 L924.6 163.6 L931.6 166.4 L938.6 169.4 L945.5 172.5 L952.3 175.7 L959.1 179.0 L965.8 182.4 L972.5 186.0 L979.1 189.7 L985.7 193.4 L992.2 197.3 L998.6 201.3 L1004.9 205.4 L1011.2 209.6 L1017.4 213.9 L1023.6 218.3 L1029.6 222.8 L1035.6 227.4 L1041.5 232.1 L1047.4 237.0 L1053.1 241.9 L1058.8 246.9 L1064.4 252.0 L1069.8 257.2 L1075.3 262.4 L1080.6 267.8 L1085.8 273.3 L1090.9 278.8 L1096.0 284.5 L1100.9 290.2 L1105.7 296.0 L1110.5 301.9 L1115.1 307.8 L1119.7 313.9 L1124.1 320.0 L1128.5 326.2 L1132.7 332.4 L1136.8 338.8 L1140.9 345.2 L1144.8 351.6 L1148.6 358.1 L1152.3 364.7 L1155.9 371.4 L1159.3 378.1 L1154.9 380.4 L1151.4 373.7 L1147.8 367.2 L1144.1 360.7 L1140.3 354.2 L1136.4 347.9 L1132.4 341.6 L1128.3 335.3 L1124.1 329.2 L1119.8 323.1 L1115.4 317.1 L1110.8 311.1 L1106.2 305.3 L1101.5 299.5 L1096.7 293.8 L1091.8 288.1 L1086.8 282.6 L1081.7 277.1 L1076.5 271.8 L1071.0 266.7 L1065.5 261.7 L1059.9 256.8 L1054.2 251.9 L1048.5 247.2 L1042.6 242.6 L1036.7 238.1 L1030.7 233.7 L1024.7 229.3 L1018.6 225.1 L1012.7 220.6 L1006.7 216.2 L1000.6 212.0 L994.5 207.8 L988.2 203.8 L981.9 199.8 L975.6 196.0 L969.1 192.2 L962.6 188.6 L956.1 185.1 L949.5 181.7 L942.8 178.4 L936.0 175.2 L929.3 172.1 L922.4 169.2 L915.5 166.5 L908.5 163.8 L901.5 161.3 L894.4 158.9 L887.3 156.6 L880.2 154.4 L873.0 152.4 L865.8 150.4 L858.5 148.6 L851.3 146.9 L844.0 145.4 L836.6 143.9 L829.3 142.6 L821.9 141.4 L814.5 140.3 L807.1 139.4 L799.7 138.5 Z" fill="#3f8a72" fill-opacity="0.1374"/>
<path d="M800.1 133.6 L807.7 134.3 L815.2 135.2 L822.7 136.3 L830.1 137.4 L837.6 138.7 L845.0 140.1 L852.4 141.6 L859.8 143.2 L867.1 145.0 L874.4 146.9 L881.7 148.9 L889.0 151.1 L896.2 153.3 L903.4 155.7 L910.5 158.2 L917.6 160.8 L924.6 163.6 L931.6 166.4 L938.6 169.4 L945.5 172.5 L952.3 175.7 L959.1 179.0 L965.8 182.4 L972.5 186.0 L979.1 189.7 L985.7 193.4 L992.2 197.3 L998.6 201.3 L1004.9 205.4 L1011.2 209.6 L1017.4 213.9 L1023.6 218.3 L1029.6 222.8 L1035.6 227.4 L1041.5 232.1 L1047.4 237.0 L1053.1 241.9 L1058.8 246.9 L1064.4 252.0 L1069.8 257.2 L1075.3 262.4 L1080.6 267.8 L1085.8 273.3 L1090.9 278.8 L1096.0 284.5 L1100.9 290.2 L1105.7 296.0 L1110.5 301.9 L1115.1 307.8 L1119.7 313.9 L1124.1 320.0 L1128.5 326.2 L1132.7 332.4 L1136.8 338.8 L1140.9 345.2 L1144.8 351.6 L1148.6 358.1 L1152.3 364.7 L1155.9 371.4 L1159.3 378.1 L1154.0 380.8 L1150.5 374.2 L1146.9 367.7 L1143.3 361.2 L1139.5 354.8 L1135.6 348.4 L1131.6 342.1 L1127.4 335.9 L1123.2 329.8 L1118.9 323.7 L1114.5 317.7 L1110.0 311.8 L1105.4 305.9 L1100.6 300.2 L1095.8 294.5 L1090.9 288.9 L1085.9 283.4 L1080.9 277.9 L1075.6 272.6 L1070.2 267.5 L1064.6 262.6 L1059.0 257.7 L1053.3 253.0 L1047.5 248.3 L1041.7 243.7 L1035.8 239.3 L1029.8 234.9 L1023.7 230.7 L1017.6 226.4 L1011.8 221.9 L1005.8 217.6 L999.7 213.3 L993.6 209.1 L987.4 205.1 L981.2 201.1 L974.8 197.2 L968.5 193.5 L962.0 189.8 L955.5 186.3 L948.9 182.9 L942.2 179.6 L935.5 176.3 L928.8 173.2 L921.9 170.3 L915.0 167.6 L908.1 164.9 L901.1 162.4 L894.0 160.0 L887.0 157.7 L879.8 155.5 L872.7 153.4 L865.5 151.5 L858.3 149.7 L851.0 148.0 L843.8 146.4 L836.4 145.0 L829.1 143.6 L821.8 142.4 L814.4 141.3 L807.0 140.4 L799.6 139.5 Z" fill="#3f8a72" fill-opacity="0.1198"/>
<path d="M800.1 133.6 L807.7 134.3 L815.2 135.2 L822.7 136.3 L830.1 137.4 L837.6 138.7 L845.0 140.1 L852.4 141.6 L859.8 143.2 L867.1 145.0 L874.4 146.9 L881.7 148.9 L889.0 151.1 L896.2 153.3 L903.4 155.7 L910.5 158.2 L917.6 160.8 L924.6 163.6 L931.6 166.4 L938.6 169.4 L945.5 172.5 L952.3 175.7 L959.1 179.0 L965.8 182.4 L972.5 186.0 L979.1 189.7 L985.7 193.4 L992.2 197.3 L998.6 201.3 L1004.9 205.4 L1011.2 209.6 L1017.4 213.9 L1023.6 218.3 L1029.6 222.8 L1035.6 227.4 L1041.5 232.1 L1047.4 237.0 L1053.1 241.9 L1058.8 246.9 L1064.4 252.0 L1069.8 257.2 L1075.3 262.4 L1080.6 267.8 L1085.8 273.3 L1090.9 278.8 L1096.0 284.5 L1100.9 290.2 L1105.7 296.0 L1110.5 301.9 L1115.1 307.8 L1119.7 313.9 L1124.1 320.0 L1128.5 326.2 L1132.7 332.4 L1136.8 338.8 L1140.9 345.2 L1144.8 351.6 L1148.6 358.1 L1152.3 364.7 L1155.9 371.4 L1159.3 378.1 L1153.1 381.3 L1149.6 374.7 L1146.1 368.2 L1142.4 361.7 L1138.6 355.3 L1134.7 349.0 L1130.7 342.7 L1126.6 336.5 L1122.4 330.4 L1118.0 324.3 L1113.6 318.3 L1109.1 312.4 L1104.5 306.6 L1099.8 300.9 L1095.0 295.2 L1090.1 289.6 L1085.1 284.1 L1080.0 278.7 L1074.8 273.4 L1069.3 268.4 L1063.8 263.5 L1058.1 258.7 L1052.4 254.0 L1046.6 249.4 L1040.7 244.9 L1034.8 240.5 L1028.8 236.2 L1022.7 232.0 L1016.7 227.8 L1010.8 223.3 L1004.9 218.9 L998.9 214.6 L992.8 210.4 L986.6 206.4 L980.4 202.4 L974.1 198.5 L967.8 194.7 L961.3 191.1 L954.9 187.5 L948.3 184.1 L941.7 180.7 L935.0 177.5 L928.3 174.4 L921.5 171.5 L914.6 168.7 L907.7 166.0 L900.7 163.5 L893.7 161.1 L886.6 158.8 L879.5 156.6 L872.4 154.5 L865.2 152.6 L858.0 150.8 L850.8 149.1 L843.5 147.5 L836.3 146.0 L828.9 144.7 L821.6 143.4 L814.3 142.4 L806.9 141.4 L799.5 140.5 Z" fill="#3f8a72" fill-opacity="0.1061"/>
<path d="M800.1 133.6 L807.7 134.3 L815.2 135.2 L822.7 136.3 L830.1 137.4 L837.6 138.7 L845.0 140.1 L852.4 141.6 L859.8 143.2 L867.1 145.0 L874.4 146.9 L881.7 148.9 L889.0 151.1 L896.2 153.3 L903.4 155.7 L910.5 158.2 L917.6 160.8 L924.6 163.6 L931.6 166.4 L938.6 169.4 L945.5 172.5 L952.3 175.7 L959.1 179.0 L965.8 182.4 L972.5 186.0 L979.1 189.7 L985.7 193.4 L992.2 197.3 L998.6 201.3 L1004.9 205.4 L1011.2 209.6 L1017.4 213.9 L1023.6 218.3 L1029.6 222.8 L1035.6 227.4 L1041.5 232.1 L1047.4 237.0 L1053.1 241.9 L1058.8 246.9 L1064.4 252.0 L1069.8 257.2 L1075.3 262.4 L1080.6 267.8 L1085.8 273.3 L1090.9 278.8 L1096.0 284.5 L1100.9 290.2 L1105.7 296.0 L1110.5 301.9 L1115.1 307.8 L1119.7 313.9 L1124.1 320.0 L1128.5 326.2 L1132.7 332.4 L1136.8 338.8 L1140.9 345.2 L1144.8 351.6 L1148.6 358.1 L1152.3 364.7 L1155.9 371.4 L1159.3 378.1 L1152.2 381.7 L1148.7 375.2 L1145.2 368.7 L1141.5 362.2 L1137.7 355.8 L1133.8 349.5 L1129.8 343.3 L1125.7 337.1 L1121.5 331.0 L1117.2 324.9 L1112.8 319.0 L1108.3 313.1 L1103.6 307.3 L1098.9 301.6 L1094.2 295.9 L1089.3 290.3 L1084.3 284.9 L1079.2 279.5 L1074.0 274.2 L1068.5 269.2 L1062.9 264.4 L1057.2 259.6 L1051.5 255.0 L1045.7 250.4 L1039.8 246.0 L1033.8 241.6 L1027.8 237.4 L1021.7 233.3 L1015.7 229.1 L1009.9 224.6 L1004.0 220.2 L998.0 215.9 L992.0 211.8 L985.9 207.7 L979.7 203.7 L973.4 199.8 L967.1 196.0 L960.7 192.3 L954.3 188.7 L947.7 185.3 L941.2 181.9 L934.5 178.7 L927.8 175.5 L921.0 172.6 L914.2 169.8 L907.3 167.2 L900.3 164.6 L893.3 162.2 L886.3 159.9 L879.2 157.7 L872.1 155.6 L865.0 153.7 L857.8 151.8 L850.6 150.1 L843.3 148.5 L836.1 147.1 L828.8 145.7 L821.5 144.5 L814.1 143.4 L806.8 142.4 L799.4 141.5 Z" fill="#3f8a72" fill-opacity="0.0951"/>
<path d="M800.1 133.6 L807.7 134.3 L815.2 135.2 L822.7 136.3 L830.1 137.4 L837.6 138.7 L845.0 140.1 L852.4 141.6 L859.8 143.2 L867.1 145.0 L874.4 146.9 L881.7 148.9 L889.0 151.1 L896.2 153.3 L903.4 155.7 L910.5 158.2 L917.6 160.8 L924.6 163.6 L931.6 166.4 L938.6 169.4 L945.5 172.5 L952.3 175.7 L959.1 179.0 L965.8 182.4 L972.5 186.0 L979.1 189.7 L985.7 193.4 L992.2 197.3 L998.6 201.3 L1004.9 205.4 L1011.2 209.6 L1017.4 213.9 L1023.6 218.3 L1029.6 222.8 L1035.6 227.4 L1041.5 232.1 L1047.4 237.0 L1053.1 241.9 L1058.8 246.9 L1064.4 252.0 L1069.8 257.2 L1075.3 262.4 L1080.6 267.8 L1085.8 273.3 L1090.9 278.8 L1096.0 284.5 L1100.9 290.2 L1105.7 296.0 L1110.5 301.9 L1115.1 307.8 L1119.7 313.9 L1124.1 320.0 L1128.5 326.2 L1132.7 332.4 L1136.8 338.8 L1140.9 345.2 L1144.8 351.6 L1148.6 358.1 L1152.3 364.7 L1155.9 371.4 L1159.3 378.1 L1151.3 382.2 L1147.8 375.6 L1144.3 369.1 L1140.6 362.7 L1136.8 356.4 L1132.9 350.1 L1128.9 343.8 L1124.8 337.7 L1120.6 331.6 L1116.3 325.6 L1111.9 319.6 L1107.4 313.8 L1102.8 308.0 L1098.1 302.3 L1093.3 296.6 L1088.4 291.1 L1083.4 285.6 L1078.4 280.2 L1073.2 275.0 L1067.6 270.1 L1062.0 265.3 L1056.3 260.6 L1050.6 256.0 L1044.7 251.5 L1038.8 247.1 L1032.9 242.8 L1026.8 238.6 L1020.7 234.6 L1014.7 230.5 L1008.9 226.0 L1003.1 221.6 L997.1 217.3 L991.1 213.1 L985.1 209.0 L978.9 204.9 L972.7 201.0 L966.4 197.2 L960.1 193.5 L953.6 189.9 L947.2 186.5 L940.6 183.1 L934.0 179.8 L927.4 176.6 L920.6 173.7 L913.7 171.0 L906.9 168.3 L899.9 165.7 L893.0 163.3 L886.0 161.0 L878.9 158.8 L871.8 156.7 L864.7 154.7 L857.5 152.9 L850.3 151.2 L843.1 149.6 L835.9 148.1 L828.6 146.7 L821.3 145.5 L814.0 144.4 L806.7 143.4 L799.3 142.5 Z" fill="#3f8a72" fill-opacity="0.0860"/>
<path d="M800.1 133.6 L807.7 134.3 L815.2 135.2 L822.7 136.3 L830.1 137.4 L837.6 138.7 L845.0 140.1 L852.4 141.6 L859.8 143.2 L867.1 145.0 L874.4 146.9 L881.7 148.9 L889.0 151.1 L896.2 153.3 L903.4 155.7 L910.5 158.2 L917.6 160.8 L924.6 163.6 L931.6 166.4 L938.6 169.4 L945.5 172.5 L952.3 175.7 L959.1 179.0 L965.8 182.4 L972.5 186.0 L979.1 189.7 L985.7 193.4 L992.2 197.3 L998.6 201.3 L1004.9 205.4 L1011.2 209.6 L1017.4 213.9 L1023.6 218.3 L1029.6 222.8 L1035.6 227.4 L1041.5 232.1 L1047.4 237.0 L1053.1 241.9 L1058.8 246.9 L1064.4 252.0 L1069.8 257.2 L1075.3 262.4 L1080.6 267.8 L1085.8 273.3 L1090.9 278.8 L1096.0 284.5 L1100.9 290.2 L1105.7 296.0 L1110.5 301.9 L1115.1 307.8 L1119.7 313.9 L1124.1 320.0 L1128.5 326.2 L1132.7 332.4 L1136.8 338.8 L1140.9 345.2 L1144.8 351.6 L1148.6 358.1 L1152.3 364.7 L1155.9 371.4 L1159.3 378.1 L1150.4 382.6 L1147.0 376.1 L1143.4 369.6 L1139.7 363.2 L1135.9 356.9 L1132.0 350.6 L1128.0 344.4 L1123.9 338.3 L1119.7 332.2 L1115.4 326.2 L1111.0 320.3 L1106.5 314.4 L1101.9 308.6 L1097.2 303.0 L1092.5 297.3 L1087.6 291.8 L1082.6 286.4 L1077.6 281.0 L1072.4 275.8 L1066.8 270.9 L1061.2 266.2 L1055.4 261.6 L1049.7 257.0 L1043.8 252.6 L1037.9 248.2 L1031.9 244.0 L1025.9 239.9 L1019.7 235.9 L1013.7 231.8 L1008.0 227.3 L1002.2 222.9 L996.3 218.6 L990.3 214.4 L984.3 210.3 L978.2 206.2 L972.0 202.3 L965.7 198.5 L959.4 194.8 L953.0 191.2 L946.6 187.7 L940.1 184.3 L933.5 181.0 L926.9 177.8 L920.1 174.9 L913.3 172.1 L906.5 169.4 L899.6 166.9 L892.6 164.4 L885.6 162.1 L878.6 159.9 L871.5 157.8 L864.4 155.8 L857.3 154.0 L850.1 152.2 L842.9 150.6 L835.7 149.1 L828.4 147.8 L821.2 146.5 L813.9 145.4 L806.5 144.4 L799.2 143.5 Z" fill="#3f8a72" fill-opacity="0.0783"/>
<path d="M800.1 133.6 L807.7 134.3 L815.2 135.2 L822.7 136.3 L830.1 137.4 L837.6 138.7 L845.0 140.1 L852.4 141.6 L859.8 143.2 L867.1 145.0 L874.4 146.9 L881.7 148.9 L889.0 151.1 L896.2 153.3 L903.4 155.7 L910.5 158.2 L917.6 160.8 L924.6 163.6 L931.6 166.4 L938.6 169.4 L945.5 172.5 L952.3 175.7 L959.1 179.0 L965.8 182.4 L972.5 186.0 L979.1 189.7 L985.7 193.4 L992.2 197.3 L998.6 201.3 L1004.9 205.4 L1011.2 209.6 L1017.4 213.9 L1023.6 218.3 L1029.6 222.8 L1035.6 227.4 L1041.5 232.1 L1047.4 237.0 L1053.1 241.9 L1058.8 246.9 L1064.4 252.0 L1069.8 257.2 L1075.3 262.4 L1080.6 267.8 L1085.8 273.3 L1090.9 278.8 L1096.0 284.5 L1100.9 290.2 L1105.7 296.0 L1110.5 301.9 L1115.1 307.8 L1119.7 313.9 L1124.1 320.0 L1128.5 326.2 L1132.7 332.4 L1136.8 338.8 L1140.9 345.2 L1144.8 351.6 L1148.6 358.1 L1152.3 364.7 L1155.9 371.4 L1159.3 378.1 L1149.5 383.1 L1146.1 376.6 L1142.5 370.1 L1138.8 363.7 L1135.0 357.4 L1131.1 351.1 L1127.2 345.0 L1123.1 338.8 L1118.9 332.8 L1114.6 326.8 L1110.2 320.9 L1105.7 315.1 L1101.1 309.3 L1096.4 303.7 L1091.6 298.1 L1086.7 292.6 L1081.8 287.1 L1076.7 281.8 L1071.5 276.6 L1065.9 271.8 L1060.3 267.1 L1054.5 262.5 L1048.7 258.0 L1042.9 253.6 L1036.9 249.4 L1030.9 245.2 L1024.9 241.1 L1018.8 237.2 L1012.7 233.2 L1007.0 228.7 L1001.3 224.2 L995.4 219.9 L989.5 215.7 L983.5 211.5 L977.4 207.5 L971.3 203.6 L965.1 199.7 L958.8 196.0 L952.4 192.4 L946.0 188.9 L939.5 185.4 L933.0 182.1 L926.4 178.9 L919.7 176.0 L912.9 173.2 L906.1 170.5 L899.2 168.0 L892.3 165.5 L885.3 163.2 L878.3 161.0 L871.2 158.9 L864.2 156.9 L857.0 155.0 L849.9 153.3 L842.7 151.7 L835.5 150.2 L828.3 148.8 L821.0 147.6 L813.7 146.4 L806.4 145.4 L799.1 144.5 Z" fill="#3f8a72" fill-opacity="0.0718"/>
<path d="M800.1 133.6 L807.7 134.3 L815.2 135.2 L822.7 136.3 L830.1 137.4 L837.6 138.7 L845.0 140.1 L852.4 141.6 L859.8 143.2 L867.1 145.0 L874.4 146.9 L881.7 148.9 L889.0 151.1 L896.2 153.3 L903.4 155.7 L910.5 158.2 L917.6 160.8 L924.6 163.6 L931.6 166.4 L938.6 169.4 L945.5 172.5 L952.3 175.7 L959.1 179.0 L965.8 182.4 L972.5 186.0 L979.1 189.7 L985.7 193.4 L992.2 197.3 L998.6 201.3 L1004.9 205.4 L1011.2 209.6 L1017.4 213.9 L1023.6 218.3 L1029.6 222.8 L1035.6 227.4 L1041.5 232.1 L1047.4 237.0 L1053.1 241.9 L1058.8 246.9 L1064.4 252.0 L1069.8 257.2 L1075.3 262.4 L1080.6 267.8 L1085.8 273.3 L1090.9 278.8 L1096.0 284.5 L1100.9 290.2 L1105.7 296.0 L1110.5 301.9 L1115.1 307.8 L1119.7 313.9 L1124.1 320.0 L1128.5 326.2 L1132.7 332.4 L1136.8 338.8 L1140.9 345.2 L1144.8 351.6 L1148.6 358.1 L1152.3 364.7 L1155.9 371.4 L1159.3 378.1 L1148.6 383.5 L1145.2 377.0 L1141.6 370.6 L1137.9 364.2 L1134.1 357.9 L1130.3 351.7 L1126.3 345.5 L1122.2 339.4 L1118.0 333.4 L1113.7 327.4 L1109.3 321.5 L1104.8 315.7 L1100.2 310.0 L1095.5 304.4 L1090.8 298.8 L1085.9 293.3 L1081.0 287.9 L1075.9 282.6 L1070.7 277.4 L1065.1 272.6 L1059.4 268.0 L1053.7 263.5 L1047.8 259.0 L1041.9 254.7 L1036.0 250.5 L1030.0 246.4 L1023.9 242.4 L1017.8 238.5 L1011.7 234.5 L1006.1 230.0 L1000.3 225.6 L994.5 221.2 L988.7 217.0 L982.7 212.8 L976.7 208.8 L970.6 204.8 L964.4 201.0 L958.1 197.2 L951.8 193.6 L945.4 190.1 L939.0 186.6 L932.5 183.3 L925.9 180.1 L919.2 177.1 L912.5 174.3 L905.7 171.6 L898.8 169.1 L891.9 166.6 L885.0 164.3 L878.0 162.1 L870.9 160.0 L863.9 158.0 L856.8 156.1 L849.7 154.4 L842.5 152.7 L835.3 151.2 L828.1 149.9 L820.9 148.6 L813.6 147.4 L806.3 146.4 L799.0 145.5 Z" fill="#3f8a72" fill-opacity="0.0661"/>
<path d="M800.1 133.6 L807.7 134.3 L815.2 135.2 L822.7 136.3 L830.1 137.4 L837.6 138.7 L845.0 140.1 L852.4 141.6 L859.8 143.2 L867.1 145.0 L874.4 146.9 L881.7 148.9 L889.0 151.1 L896.2 153.3 L903.4 155.7 L910.5 158.2 L917.6 160.8 L924.6 163.6 L931.6 166.4 L938.6 169.4 L945.5 172.5 L952.3 175.7 L959.1 179.0 L965.8 182.4 L972.5 186.0 L979.1 189.7 L985.7 193.4 L992.2 197.3 L998.6 201.3 L1004.9 205.4 L1011.2 209.6 L1017.4 213.9 L1023.6 218.3 L1029.6 222.8 L1035.6 227.4 L1041.5 232.1 L1047.4 237.0 L1053.1 241.9 L1058.8 246.9 L1064.4 252.0 L1069.8 257.2 L1075.3 262.4 L1080.6 267.8 L1085.8 273.3 L1090.9 278.8 L1096.0 284.5 L1100.9 290.2 L1105.7 296.0 L1110.5 301.9 L1115.1 307.8 L1119.7 313.9 L1124.1 320.0 L1128.5 326.2 L1132.7 332.4 L1136.8 338.8 L1140.9 345.2 L1144.8 351.6 L1148.6 358.1 L1152.3 364.7 L1155.9 371.4 L1159.3 378.1 L1147.7 384.0 L1144.3 377.5 L1140.7 371.1 L1137.0 364.7 L1133.3 358.5 L1129.4 352.2 L1125.4 346.1 L1121.3 340.0 L1117.1 334.0 L1112.8 328.1 L1108.4 322.2 L1104.0 316.4 L1099.4 310.7 L1094.7 305.1 L1089.9 299.5 L1085.1 294.0 L1080.1 288.6 L1075.1 283.3 L1069.9 278.2 L1064.3 273.5 L1058.5 268.9 L1052.8 264.4 L1046.9 260.1 L1041.0 255.8 L1035.0 251.6 L1029.0 247.6 L1022.9 243.6 L1016.8 239.8 L1010.7 235.9 L1005.1 231.3 L999.4 226.9 L993.7 222.6 L987.8 218.3 L981.9 214.1 L975.9 210.1 L969.8 206.1 L963.7 202.2 L957.5 198.5 L951.2 194.8 L944.9 191.2 L938.5 187.8 L932.0 184.4 L925.5 181.2 L918.8 178.3 L912.0 175.5 L905.3 172.8 L898.4 170.2 L891.5 167.7 L884.6 165.4 L877.7 163.2 L870.7 161.1 L863.6 159.1 L856.5 157.2 L849.4 155.4 L842.3 153.8 L835.1 152.3 L827.9 150.9 L820.7 149.6 L813.5 148.5 L806.2 147.4 L798.9 146.5 Z" fill="#3f8a72" fill-opacity="0.0612"/>
<path d="M800.1 133.6 L807.7 134.3 L815.2 135.2 L822.7 136.3 L830.1 137.4 L837.6 138.7 L845.0 140.1 L852.4 141.6 L859.8 143.2 L867.1 145.0 L874.4 146.9 L881.7 148.9 L889.0 151.1 L896.2 153.3 L903.4 155.7 L910.5 158.2 L917.6 160.8 L924.6 163.6 L931.6 166.4 L938.6 169.4 L945.5 172.5 L952.3 175.7 L959.1 179.0 L965.8 182.4 L972.5 186.0 L979.1 189.7 L985.7 193.4 L992.2 197.3 L998.6 201.3 L1004.9 205.4 L1011.2 209.6 L1017.4 213.9 L1023.6 218.3 L1029.6 222.8 L1035.6 227.4 L1041.5 232.1 L1047.4 237.0 L1053.1 241.9 L1058.8 246.9 L1064.4 252.0 L1069.8 257.2 L1075.3 262.4 L1080.6 267.8 L1085.8 273.3 L1090.9 278.8 L1096.0 284.5 L1100.9 290.2 L1105.7 296.0 L1110.5 301.9 L1115.1 307.8 L1119.7 313.9 L1124.1 320.0 L1128.5 326.2 L1132.7 332.4 L1136.8 338.8 L1140.9 345.2 L1144.8 351.6 L1148.6 358.1 L1152.3 364.7 L1155.9 371.4 L1159.3 378.1 L1146.8 384.4 L1143.4 378.0 L1139.8 371.6 L1136.2 365.3 L1132.4 359.0 L1128.5 352.8 L1124.5 346.7 L1120.4 340.6 L1116.2 334.6 L1112.0 328.7 L1107.6 322.8 L1103.1 317.1 L1098.5 311.4 L1093.9 305.7 L1089.1 300.2 L1084.2 294.8 L1079.3 289.4 L1074.3 284.1 L1069.1 279.0 L1063.4 274.3 L1057.7 269.8 L1051.9 265.4 L1046.0 261.1 L1040.1 256.9 L1034.1 252.8 L1028.0 248.8 L1021.9 244.9 L1015.8 241.1 L1009.7 237.2 L1004.2 232.7 L998.5 228.2 L992.8 223.9 L987.0 219.6 L981.1 215.4 L975.2 211.4 L969.1 207.4 L963.0 203.5 L956.9 199.7 L950.6 196.0 L944.3 192.4 L937.9 189.0 L931.5 185.6 L925.0 182.3 L918.3 179.4 L911.6 176.6 L904.8 173.9 L898.0 171.3 L891.2 168.9 L884.3 166.5 L877.3 164.3 L870.4 162.2 L863.3 160.2 L856.3 158.3 L849.2 156.5 L842.1 154.9 L834.9 153.3 L827.8 151.9 L820.6 150.6 L813.3 149.5 L806.1 148.4 L798.8 147.5 Z" fill="#3f8a72" fill-opacity="0.0567"/>
<path d="M800.1 133.6 L807.7 134.3 L815.2 135.2 L822.7 136.3 L830.1 137.4 L837.6 138.7 L845.0 140.1 L852.4 141.6 L859.8 143.2 L867.1 145.0 L874.4 146.9 L881.7 148.9 L889.0 151.1 L896.2 153.3 L903.4 155.7 L910.5 158.2 L917.6 160.8 L924.6 163.6 L931.6 166.4 L938.6 169.4 L945.5 172.5 L952.3 175.7 L959.1 179.0 L965.8 182.4 L972.5 186.0 L979.1 189.7 L985.7 193.4 L992.2 197.3 L998.6 201.3 L1004.9 205.4 L1011.2 209.6 L1017.4 213.9 L1023.6 218.3 L1029.6 222.8 L1035.6 227.4 L1041.5 232.1 L1047.4 237.0 L1053.1 241.9 L1058.8 246.9 L1064.4 252.0 L1069.8 257.2 L1075.3 262.4 L1080.6 267.8 L1085.8 273.3 L1090.9 278.8 L1096.0 284.5 L1100.9 290.2 L1105.7 296.0 L1110.5 301.9 L1115.1 307.8 L1119.7 313.9 L1124.1 320.0 L1128.5 326.2 L1132.7 332.4 L1136.8 338.8 L1140.9 345.2 L1144.8 351.6 L1148.6 358.1 L1152.3 364.7 L1155.9 371.4 L1159.3 378.1 L1146.0 384.9 L1142.5 378.5 L1138.9 372.1 L1135.3 365.8 L1131.5 359.5 L1127.6 353.3 L1123.6 347.2 L1119.5 341.2 L1115.4 335.2 L1111.1 329.3 L1106.7 323.5 L1102.2 317.7 L1097.7 312.0 L1093.0 306.4 L1088.2 300.9 L1083.4 295.5 L1078.5 290.2 L1073.4 284.9 L1068.3 279.8 L1062.6 275.2 L1056.8 270.7 L1051.0 266.3 L1045.1 262.1 L1039.1 257.9 L1033.1 253.9 L1027.1 250.0 L1021.0 246.1 L1014.8 242.4 L1008.8 238.6 L1003.2 234.0 L997.6 229.6 L991.9 225.2 L986.2 220.9 L980.3 216.7 L974.4 212.6 L968.4 208.6 L962.4 204.7 L956.2 200.9 L950.0 197.2 L943.7 193.6 L937.4 190.1 L931.0 186.8 L924.5 183.5 L917.9 180.5 L911.2 177.7 L904.4 175.0 L897.7 172.4 L890.8 170.0 L883.9 167.6 L877.0 165.4 L870.1 163.2 L863.1 161.2 L856.0 159.3 L849.0 157.6 L841.9 155.9 L834.8 154.4 L827.6 153.0 L820.4 151.7 L813.2 150.5 L806.0 149.4 L798.7 148.5 Z" fill="#3f8a72" fill-opacity="0.0528"/>
<path d="M800.1 133.6 L807.7 134.3 L815.2 135.2 L822.7 136.3 L830.1 137.4 L837.6 138.7 L845.0 140.1 L852.4 141.6 L859.8 143.2 L867.1 145.0 L874.4 146.9 L881.7 148.9 L889.0 151.1 L896.2 153.3 L903.4 155.7 L910.5 158.2 L917.6 160.8 L924.6 163.6 L931.6 166.4 L938.6 169.4 L945.5 172.5 L952.3 175.7 L959.1 179.0 L965.8 182.4 L972.5 186.0 L979.1 189.7 L985.7 193.4 L992.2 197.3 L998.6 201.3 L1004.9 205.4 L1011.2 209.6 L1017.4 213.9 L1023.6 218.3 L1029.6 222.8 L1035.6 227.4 L1041.5 232.1 L1047.4 237.0 L1053.1 241.9 L1058.8 246.9 L1064.4 252.0 L1069.8 257.2 L1075.3 262.4 L1080.6 267.8 L1085.8 273.3 L1090.9 278.8 L1096.0 284.5 L1100.9 290.2 L1105.7 296.0 L1110.5 301.9 L1115.1 307.8 L1119.7 313.9 L1124.1 320.0 L1128.5 326.2 L1132.7 332.4 L1136.8 338.8 L1140.9 345.2 L1144.8 351.6 L1148.6 358.1 L1152.3 364.7 L1155.9 371.4 L1159.3 378.1 L1145.1 385.3 L1141.6 378.9 L1138.0 372.6 L1134.4 366.3 L1130.6 360.0 L1126.7 353.9 L1122.7 347.8 L1118.7 341.8 L1114.5 335.8 L1110.2 329.9 L1105.8 324.1 L1101.4 318.4 L1096.8 312.7 L1092.2 307.1 L1087.4 301.6 L1082.6 296.2 L1077.6 290.9 L1072.6 285.7 L1067.4 280.6 L1061.7 276.0 L1055.9 271.6 L1050.1 267.3 L1044.2 263.1 L1038.2 259.0 L1032.2 255.0 L1026.1 251.1 L1020.0 247.4 L1013.8 243.7 L1007.8 239.9 L1002.3 235.4 L996.7 230.9 L991.1 226.5 L985.3 222.2 L979.5 218.0 L973.7 213.9 L967.7 209.9 L961.7 206.0 L955.6 202.2 L949.4 198.5 L943.2 194.8 L936.8 191.3 L930.5 187.9 L924.0 184.6 L917.4 181.6 L910.8 178.8 L904.0 176.1 L897.3 173.5 L890.5 171.1 L883.6 168.7 L876.7 166.5 L869.8 164.3 L862.8 162.3 L855.8 160.4 L848.7 158.6 L841.7 157.0 L834.6 155.4 L827.4 154.0 L820.3 152.7 L813.1 151.5 L805.9 150.4 L798.6 149.5 Z" fill="#3f8a72" fill-opacity="0.0491"/>
<path d="M800.1 133.6 L807.7 134.3 L815.2 135.2 L822.7 136.3 L830.1 137.4 L837.6 138.7 L845.0 140.1 L852.4 141.6 L859.8 143.2 L867.1 145.0 L874.4 146.9 L881.7 148.9 L889.0 151.1 L896.2 153.3 L903.4 155.7 L910.5 158.2 L917.6 160.8 L924.6 163.6 L931.6 166.4 L938.6 169.4 L945.5 172.5 L952.3 175.7 L959.1 179.0 L965.8 182.4 L972.5 186.0 L979.1 189.7 L985.7 193.4 L992.2 197.3 L998.6 201.3 L1004.9 205.4 L1011.2 209.6 L1017.4 213.9 L1023.6 218.3 L1029.6 222.8 L1035.6 227.4 L1041.5 232.1 L1047.4 237.0 L1053.1 241.9 L1058.8 246.9 L1064.4 252.0 L1069.8 257.2 L1075.3 262.4 L1080.6 267.8 L1085.8 273.3 L1090.9 278.8 L1096.0 284.5 L1100.9 290.2 L1105.7 296.0 L1110.5 301.9 L1115.1 307.8 L1119.7 313.9 L1124.1 320.0 L1128.5 326.2 L1132.7 332.4 L1136.8 338.8 L1140.9 345.2 L1144.8 351.6 L1148.6 358.1 L1152.3 364.7 L1155.9 371.4 L1159.3 378.1 L1144.2 385.8 L1140.7 379.4 L1137.2 373.1 L1133.5 366.8 L1129.7 360.6 L1125.8 354.4 L1121.9 348.3 L1117.8 342.3 L1113.6 336.4 L1109.3 330.5 L1105.0 324.7 L1100.5 319.0 L1096.0 313.4 L1091.3 307.8 L1086.6 302.4 L1081.7 297.0 L1076.8 291.7 L1071.8 286.4 L1066.6 281.4 L1060.9 276.9 L1055.1 272.5 L1049.2 268.3 L1043.3 264.1 L1037.3 260.1 L1031.2 256.1 L1025.2 252.3 L1019.0 248.6 L1012.8 245.0 L1006.8 241.3 L1001.3 236.7 L995.8 232.2 L990.2 227.8 L984.5 223.5 L978.8 219.3 L972.9 215.2 L967.0 211.2 L961.0 207.2 L954.9 203.4 L948.8 199.7 L942.6 196.0 L936.3 192.5 L930.0 189.1 L923.5 185.7 L917.0 182.8 L910.3 180.0 L903.6 177.3 L896.9 174.7 L890.1 172.2 L883.3 169.8 L876.4 167.6 L869.5 165.4 L862.5 163.4 L855.5 161.5 L848.5 159.7 L841.5 158.0 L834.4 156.5 L827.3 155.0 L820.1 153.7 L812.9 152.5 L805.8 151.4 L798.5 150.5 Z" fill="#3f8a72" fill-opacity="0.0457"/>
<path d="M800.1 133.6 L807.7 134.3 L815.2 135.2 L822.7 136.3 L830.1 137.4 L837.6 138.7 L845.0 140.1 L852.4 141.6 L859.8 143.2 L867.1 145.0 L874.4 146.9 L881.7 148.9 L889.0 151.1 L896.2 153.3 L903.4 155.7 L910.5 158.2 L917.6 160.8 L924.6 163.6 L931.6 166.4 L938.6 169.4 L945.5 172.5 L952.3 175.7 L959.1 179.0 L965.8 182.4 L972.5 186.0 L979.1 189.7 L985.7 193.4 L992.2 197.3 L998.6 201.3 L1004.9 205.4 L1011.2 209.6 L1017.4 213.9 L1023.6 218.3 L1029.6 222.8 L1035.6 227.4 L1041.5 232.1 L1047.4 237.0 L1053.1 241.9 L1058.8 246.9 L1064.4 252.0 L1069.8 257.2 L1075.3 262.4 L1080.6 267.8 L1085.8 273.3 L1090.9 278.8 L1096.0 284.5 L1100.9 290.2 L1105.7 296.0 L1110.5 301.9 L1115.1 307.8 L1119.7 313.9 L1124.1 320.0 L1128.5 326.2 L1132.7 332.4 L1136.8 338.8 L1140.9 345.2 L1144.8 351.6 L1148.6 358.1 L1152.3 364.7 L1155.9 371.4 L1159.3 378.1 L1143.3 386.2 L1139.8 379.9 L1136.3 373.5 L1132.6 367.3 L1128.8 361.1 L1125.0 355.0 L1121.0 348.9 L1116.9 342.9 L1112.7 337.0 L1108.5 331.2 L1104.1 325.4 L1099.7 319.7 L1095.1 314.1 L1090.5 308.5 L1085.7 303.1 L1080.9 297.7 L1076.0 292.4 L1071.0 287.2 L1065.8 282.2 L1060.0 277.8 L1054.2 273.4 L1048.3 269.2 L1042.4 265.1 L1036.4 261.1 L1030.3 257.3 L1024.2 253.5 L1018.0 249.9 L1011.8 246.3 L1005.8 242.6 L1000.4 238.1 L994.9 233.6 L989.3 229.2 L983.7 224.8 L978.0 220.6 L972.2 216.5 L966.3 212.4 L960.3 208.5 L954.3 204.6 L948.2 200.9 L942.0 197.2 L935.8 193.7 L929.5 190.2 L923.1 186.9 L916.5 183.9 L909.9 181.1 L903.2 178.4 L896.5 175.8 L889.8 173.3 L882.9 170.9 L876.1 168.7 L869.2 166.5 L862.3 164.5 L855.3 162.6 L848.3 160.8 L841.3 159.1 L834.2 157.5 L827.1 156.1 L820.0 154.7 L812.8 153.5 L805.6 152.5 L798.5 151.5 Z" fill="#3f8a72" fill-opacity="0.0424"/>
<path d="M800.1 133.6 L807.7 134.3 L815.2 135.2 L822.7 136.3 L830.1 137.4 L837.6 138.7 L845.0 140.1 L852.4 141.6 L859.8 143.2 L867.1 145.0 L874.4 146.9 L881.7 148.9 L889.0 151.1 L896.2 153.3 L903.4 155.7 L910.5 158.2 L917.6 160.8 L924.6 163.6 L931.6 166.4 L938.6 169.4 L945.5 172.5 L952.3 175.7 L959.1 179.0 L965.8 182.4 L972.5 186.0 L979.1 189.7 L985.7 193.4 L992.2 197.3 L998.6 201.3 L1004.9 205.4 L1011.2 209.6 L1017.4 213.9 L1023.6 218.3 L1029.6 222.8 L1035.6 227.4 L1041.5 232.1 L1047.4 237.0 L1053.1 241.9 L1058.8 246.9 L1064.4 252.0 L1069.8 257.2 L1075.3 262.4 L1080.6 267.8 L1085.8 273.3 L1090.9 278.8 L1096.0 284.5 L1100.9 290.2 L1105.7 296.0 L1110.5 301.9 L1115.1 307.8 L1119.7 313.9 L1124.1 320.0 L1128.5 326.2 L1132.7 332.4 L1136.8 338.8 L1140.9 345.2 L1144.8 351.6 L1148.6 358.1 L1152.3 364.7 L1155.9 371.4 L1159.3 378.1 L1142.4 386.7 L1138.9 380.3 L1135.4 374.0 L1131.7 367.8 L1127.9 361.6 L1124.1 355.5 L1120.1 349.5 L1116.0 343.5 L1111.9 337.6 L1107.6 331.8 L1103.2 326.0 L1098.8 320.4 L1094.2 314.8 L1089.6 309.2 L1084.9 303.8 L1080.1 298.4 L1075.1 293.2 L1070.2 288.0 L1065.0 283.0 L1059.2 278.6 L1053.3 274.3 L1047.4 270.2 L1041.4 266.1 L1035.4 262.2 L1029.3 258.4 L1023.2 254.7 L1017.1 251.1 L1010.8 247.6 L1004.8 244.0 L999.4 239.4 L994.0 234.9 L988.5 230.5 L982.9 226.1 L977.2 221.9 L971.4 217.8 L965.6 213.7 L959.6 209.7 L953.6 205.9 L947.6 202.1 L941.4 198.4 L935.2 194.9 L928.9 191.4 L922.6 188.0 L916.1 185.0 L909.5 182.2 L902.8 179.5 L896.1 176.9 L889.4 174.4 L882.6 172.0 L875.8 169.7 L868.9 167.6 L862.0 165.6 L855.0 163.6 L848.1 161.8 L841.0 160.1 L834.0 158.6 L826.9 157.1 L819.8 155.8 L812.7 154.6 L805.5 153.5 L798.4 152.5 Z" fill="#3f8a72" fill-opacity="0.0393"/>
<path d="M800.1 133.6 L807.7 134.3 L815.2 135.2 L822.7 136.3 L830.1 137.4 L837.6 138.7 L845.0 140.1 L852.4 141.6 L859.8 143.2 L867.1 145.0 L874.4 146.9 L881.7 148.9 L889.0 151.1 L896.2 153.3 L903.4 155.7 L910.5 158.2 L917.6 160.8 L924.6 163.6 L931.6 166.4 L938.6 169.4 L945.5 172.5 L952.3 175.7 L959.1 179.0 L965.8 182.4 L972.5 186.0 L979.1 189.7 L985.7 193.4 L992.2 197.3 L998.6 201.3 L1004.9 205.4 L1011.2 209.6 L1017.4 213.9 L1023.6 218.3 L1029.6 222.8 L1035.6 227.4 L1041.5 232.1 L1047.4 237.0 L1053.1 241.9 L1058.8 246.9 L1064.4 252.0 L1069.8 257.2 L1075.3 262.4 L1080.6 267.8 L1085.8 273.3 L1090.9 278.8 L1096.0 284.5 L1100.9 290.2 L1105.7 296.0 L1110.5 301.9 L1115.1 307.8 L1119.7 313.9 L1124.1 320.0 L1128.5 326.2 L1132.7 332.4 L1136.8 338.8 L1140.9 345.2 L1144.8 351.6 L1148.6 358.1 L1152.3 364.7 L1155.9 371.4 L1159.3 378.1 L1141.5 387.1 L1138.0 380.8 L1134.5 374.5 L1130.8 368.3 L1127.1 362.1 L1123.2 356.1 L1119.2 350.0 L1115.2 344.1 L1111.0 338.2 L1106.7 332.4 L1102.4 326.7 L1097.9 321.0 L1093.4 315.4 L1088.8 309.9 L1084.0 304.5 L1079.2 299.2 L1074.3 293.9 L1069.3 288.8 L1064.2 283.8 L1058.3 279.5 L1052.5 275.2 L1046.5 271.1 L1040.5 267.2 L1034.5 263.3 L1028.4 259.5 L1022.3 255.9 L1016.1 252.4 L1009.8 249.0 L1003.8 245.3 L998.5 240.7 L993.1 236.2 L987.6 231.8 L982.0 227.5 L976.4 223.2 L970.7 219.0 L964.8 215.0 L959.0 211.0 L953.0 207.1 L947.0 203.3 L940.9 199.6 L934.7 196.0 L928.4 192.5 L922.1 189.2 L915.6 186.2 L909.1 183.3 L902.4 180.6 L895.8 178.0 L889.0 175.5 L882.3 173.1 L875.5 170.8 L868.6 168.7 L861.7 166.6 L854.8 164.7 L847.8 162.9 L840.8 161.2 L833.8 159.6 L826.8 158.2 L819.7 156.8 L812.6 155.6 L805.4 154.5 L798.3 153.5 Z" fill="#3f8a72" fill-opacity="0.0360"/>
<path d="M800.1 133.6 L807.7 134.3 L815.2 135.2 L822.7 136.3 L830.1 137.4 L837.6 138.7 L845.0 140.1 L852.4 141.6 L859.8 143.2 L867.1 145.0 L874.4 146.9 L881.7 148.9 L889.0 151.1 L896.2 153.3 L903.4 155.7 L910.5 158.2 L917.6 160.8 L924.6 163.6 L931.6 166.4 L938.6 169.4 L945.5 172.5 L952.3 175.7 L959.1 179.0 L965.8 182.4 L972.5 186.0 L979.1 189.7 L985.7 193.4 L992.2 197.3 L998.6 201.3 L1004.9 205.4 L1011.2 209.6 L1017.4 213.9 L1023.6 218.3 L1029.6 222.8 L1035.6 227.4 L1041.5 232.1 L1047.4 237.0 L1053.1 241.9 L1058.8 246.9 L1064.4 252.0 L1069.8 257.2 L1075.3 262.4 L1080.6 267.8 L1085.8 273.3 L1090.9 278.8 L1096.0 284.5 L1100.9 290.2 L1105.7 296.0 L1110.5 301.9 L1115.1 307.8 L1119.7 313.9 L1124.1 320.0 L1128.5 326.2 L1132.7 332.4 L1136.8 338.8 L1140.9 345.2 L1144.8 351.6 L1148.6 358.1 L1152.3 364.7 L1155.9 371.4 L1159.3 378.1 L1140.6 387.6 L1137.2 381.3 L1133.6 375.0 L1129.9 368.8 L1126.2 362.7 L1122.3 356.6 L1118.3 350.6 L1114.3 344.7 L1110.1 338.8 L1105.9 333.0 L1101.5 327.3 L1097.1 321.7 L1092.5 316.1 L1087.9 310.6 L1083.2 305.2 L1078.4 299.9 L1073.5 294.7 L1068.5 289.5 L1063.3 284.6 L1057.5 280.3 L1051.6 276.1 L1045.6 272.1 L1039.6 268.2 L1033.6 264.4 L1027.5 260.7 L1021.3 257.1 L1015.1 253.6 L1008.9 250.3 L1002.8 246.7 L997.5 242.1 L992.2 237.6 L986.7 233.1 L981.2 228.8 L975.6 224.5 L969.9 220.3 L964.1 216.2 L958.3 212.2 L952.4 208.3 L946.4 204.5 L940.3 200.8 L934.1 197.2 L927.9 193.7 L921.6 190.3 L915.2 187.3 L908.6 184.5 L902.0 181.7 L895.4 179.1 L888.7 176.6 L881.9 174.2 L875.1 171.9 L868.3 169.8 L861.5 167.7 L854.5 165.8 L847.6 164.0 L840.6 162.3 L833.6 160.7 L826.6 159.2 L819.5 157.8 L812.4 156.6 L805.3 155.5 L798.2 154.5 Z" fill="#3f8a72" fill-opacity="0.0322"/>
<path d="M800.1 133.6 L807.7 134.3 L815.2 135.2 L822.7 136.3 L830.1 137.4 L837.6 138.7 L845.0 140.1 L852.4 141.6 L859.8 143.2 L867.1 145.0 L874.4 146.9 L881.7 148.9 L889.0 151.1 L896.2 153.3 L903.4 155.7 L910.5 158.2 L917.6 160.8 L924.6 163.6 L931.6 166.4 L938.6 169.4 L945.5 172.5 L952.3 175.7 L959.1 179.0 L965.8 182.4 L972.5 186.0 L979.1 189.7 L985.7 193.4 L992.2 197.3 L998.6 201.3 L1004.9 205.4 L1011.2 209.6 L1017.4 213.9 L1023.6 218.3 L1029.6 222.8 L1035.6 227.4 L1041.5 232.1 L1047.4 237.0 L1053.1 241.9 L1058.8 246.9 L1064.4 252.0 L1069.8 257.2 L1075.3 262.4 L1080.6 267.8 L1085.8 273.3 L1090.9 278.8 L1096.0 284.5 L1100.9 290.2 L1105.7 296.0 L1110.5 301.9 L1115.1 307.8 L1119.7 313.9 L1124.1 320.0 L1128.5 326.2 L1132.7 332.4 L1136.8 338.8 L1140.9 345.2 L1144.8 351.6 L1148.6 358.1 L1152.3 364.7 L1155.9 371.4 L1159.3 378.1 L1139.7 388.1 L1136.3 381.7 L1132.7 375.5 L1129.0 369.3 L1125.3 363.2 L1121.4 357.1 L1117.5 351.2 L1113.4 345.3 L1109.2 339.4 L1105.0 333.6 L1100.6 327.9 L1096.2 322.3 L1091.7 316.8 L1087.1 311.3 L1082.3 305.9 L1077.5 300.6 L1072.7 295.4 L1067.7 290.3 L1062.5 285.4 L1056.6 281.2 L1050.7 277.1 L1044.7 273.1 L1038.7 269.2 L1032.6 265.4 L1026.5 261.8 L1020.3 258.3 L1014.1 254.9 L1007.9 251.6 L1001.8 248.0 L996.6 243.4 L991.3 238.9 L985.9 234.4 L980.4 230.1 L974.8 225.8 L969.2 221.6 L963.4 217.5 L957.6 213.5 L951.7 209.6 L945.8 205.7 L939.7 202.0 L933.6 198.4 L927.4 194.9 L921.2 191.4 L914.7 188.4 L908.2 185.6 L901.6 182.9 L895.0 180.2 L888.3 177.7 L881.6 175.3 L874.8 173.0 L868.0 170.9 L861.2 168.8 L854.3 166.9 L847.4 165.0 L840.4 163.3 L833.4 161.7 L826.4 160.2 L819.4 158.9 L812.3 157.6 L805.2 156.5 L798.1 155.5 Z" fill="#3f8a72" fill-opacity="0.0257"/>
<path d="M800.1 133.6 L807.7 134.3 L815.2 135.2 L822.7 136.3 L830.1 137.4 L837.6 138.7 L845.0 140.1 L852.4 141.6 L859.8 143.2 L867.1 145.0 L874.4 146.9 L881.7 148.9 L889.0 151.1 L896.2 153.3 L903.4 155.7 L910.5 158.2 L917.6 160.8 L924.6 163.6 L931.6 166.4 L938.6 169.4 L945.5 172.5 L952.3 175.7 L959.1 179.0 L965.8 182.4 L972.5 186.0 L979.1 189.7 L985.7 193.4 L992.2 197.3 L998.6 201.3 L1004.9 205.4 L1011.2 209.6 L1017.4 213.9 L1023.6 218.3 L1029.6 222.8 L1035.6 227.4 L1041.5 232.1 L1047.4 237.0 L1053.1 241.9 L1058.8 246.9 L1064.4 252.0 L1069.8 257.2 L1075.3 262.4 L1080.6 267.8 L1085.8 273.3 L1090.9 278.8 L1096.0 284.5 L1100.9 290.2 L1105.7 296.0 L1110.5 301.9 L1115.1 307.8 L1119.7 313.9 L1124.1 320.0 L1128.5 326.2 L1132.7 332.4 L1136.8 338.8 L1140.9 345.2 L1144.8 351.6 L1148.6 358.1 L1152.3 364.7 L1155.9 371.4 L1159.3 378.1" fill="none" stroke="#bdeedd" stroke-width="1" stroke-opacity=".8"/>
<defs><clipPath id="inA"><circle cx="711" cy="664" r="551.200"/></clipPath><filter id="bsh" x="-30%" y="-30%" width="160%" height="160%"><feGaussianBlur stdDeviation="5.500"/></filter></defs>
<g clip-path="url(#inA)"><path transform="translate(5,8)" d="M330.500 265.500 C335.500 256 339.500 244 341.500 223.500 A32.500 32.500 0 1 1 364 247.400 C355 249 348 252.500 343.500 257 C339.500 261 335.500 264 330.500 265.500 Z" fill="#3f8a72" fill-opacity=".95" filter="url(#bsh)"/></g>
</g>
<defs><linearGradient id="blob" x1="0" y1="0" x2="1" y2="0"><stop offset="0" stop-color="#2587b6"/><stop offset="1" stop-color="#2ba6c6"/></linearGradient></defs>
<path d="M341.500 223.500 A32.500 32.500 0 1 1 366 248 C356 250.500 348.500 254 343.500 258.500 C339 262.500 334 265.500 328.500 267 C334 259 337 252 339 244 C340.500 238 341 231 341.500 223.500 Z" fill="url(#blob)"/>
<path d="M347 200 C352 190 362 184.500 374 184.500 C386 185 397 191 402 201" fill="none" stroke="#e4eef0" stroke-width="1.600" stroke-dasharray="1.500 1.800" stroke-opacity=".9"/>
<g>
<path d="M351 193 L350.500 185 C350 182 353 181 356 181.500 L361 180 L363.500 176.500 L366 177.500 L365 180.500 L364.500 186 L363.500 192.500 L362.500 186.500 L356 186.500 L354.500 193.500 L353.500 187 Z" fill="#8a4a2c"/>
<path d="M384 186 l4 -1.500 l3 2 l-1 3 l-5 -1 z" fill="#d9b48f"/>
<path d="M395 191 l3 -2 l6 6 l3 3 l-2 1.500 l-6 -3 z" fill="#b5714c"/>
<path d="M341.500 210 l-4 -1 l-2 3 l2 5 l3 -1 z" fill="#d08a4f"/>
<path d="M340 222 l-4 0 l-2.500 7 l1.500 7 l3 2 l2.500 -6 z" fill="#c9743f"/>
<path d="M343 197 l-2.500 -3 l-1.500 2 l1.500 6 z" fill="#e6e2dc"/>
</g></svg>
<div class="ln l" style="left:444.5px;top:226px;letter-spacing:1.220px;word-spacing:4.682px;">Жалман – өте сирек кездесетін үй тышқанына ұқсас кішкентай</div>
<div class="ln l" style="left:412.5px;top:247px;letter-spacing:1.220px;word-spacing:7.557px;">ғана аң. Бізге жеткен ең ежелгі реликтілік түр. Оңтүстік-шығыс</div>
<div class="ln l" style="left:412.5px;top:268px;letter-spacing:1.136px;word-spacing:0.000px;">Қазақстанның жергілікті түрі  (эндемигі).</div>
<div class="ln l" style="left:444.5px;top:605px;letter-spacing:1.220px;word-spacing:2.287px;"><b>Биоалуантүрлілік</b>. Белгілі бір аумақта ағзалардың неғұрлым көп</div>
<div class="ln l" style="left:412.5px;top:626px;letter-spacing:1.049px;word-spacing:0.300px;">алуан түрлері кездессе, олардың бірлестігі соғұрлым тұрақты, бай және</div>
<div class="ln l" style="left:412.5px;top:647px;letter-spacing:1.141px;word-spacing:0.000px;">осы экологиялық жүйе өнімді  болады.</div>
<div class="ln l" style="left:444.5px;top:667px;letter-spacing:0.831px;word-spacing:0.300px;"><b><i>Экожүйе</i></b> – ұзақ уақыт бойы қатар тіршілік етіп, бір-біріне өзара әсер</div>
<div class="ln l" style="left:412.5px;top:689px;letter-spacing:1.220px;word-spacing:3.475px;">ететін алуан түрлі ағзалардың және жансыз табиғат факторларының</div>
<svg style="left:0;top:0" width="1366" height="768" viewBox="0 0 1366 768">
<rect x="545" y="330" width="352" height="38" fill="#fbcb8f"/>
<path d="M545.0 330.6 L546.5 329.7 L548.0 329.0 L549.5 328.7 L551.0 328.9 L552.5 329.4 L554.0 330.3 L555.5 331.2 L557.0 332.0 L558.5 332.4 L560.1 332.4 L561.6 332.0 L563.1 331.2 L564.6 330.3 L566.1 329.4 L567.6 328.8 L569.1 328.7 L570.6 329.0 L572.1 329.7 L573.6 330.6 L575.1 331.5 L576.6 332.2 L578.1 332.5 L579.6 332.3 L581.1 331.7 L582.6 330.9 L584.1 329.9 L585.6 329.2 L587.2 328.7 L588.7 328.8 L590.2 329.2 L591.7 330.0 L593.2 331.0 L594.7 331.8 L596.2 332.4 L597.7 332.5 L599.2 332.2 L600.7 331.4 L602.2 330.5 L603.7 329.6 L605.2 329.0 L606.7 328.7 L608.2 328.9 L609.7 329.5 L611.2 330.4 L612.8 331.3 L614.3 332.1 L615.8 332.5 L617.3 332.4 L618.8 331.9 L620.3 331.1 L621.8 330.2 L623.3 329.4 L624.8 328.8 L626.3 328.7 L627.8 329.1 L629.3 329.8 L630.8 330.7 L632.3 331.6 L633.8 332.3 L635.3 332.5 L636.8 332.3 L638.3 331.7 L639.9 330.8 L641.4 329.9 L642.9 329.1 L644.4 328.7 L645.9 328.8 L647.4 329.3 L648.9 330.1 L650.4 331.0 L651.9 331.9 L653.4 332.4 L654.9 332.5 L656.4 332.1 L657.9 331.4 L659.4 330.4 L660.9 329.6 L662.4 328.9 L663.9 328.7 L665.4 328.9 L666.9 329.6 L668.5 330.4 L670.0 331.4 L671.5 332.1 L673.0 332.5 L674.5 332.4 L676.0 331.9 L677.5 331.0 L679.0 330.1 L680.5 329.3 L682.0 328.8 L683.5 328.7 L685.0 329.1 L686.5 329.9 L688.0 330.8 L689.5 331.7 L691.0 332.3 L692.5 332.5 L694.0 332.3 L695.6 331.6 L697.1 330.7 L698.6 329.8 L700.1 329.1 L701.6 328.7 L703.1 328.8 L704.6 329.4 L706.1 330.2 L707.6 331.1 L709.1 331.9 L710.6 332.4 L712.1 332.5 L713.6 332.1 L715.1 331.3 L716.6 330.4 L718.1 329.5 L719.6 328.9 L721.1 328.7 L722.7 329.0 L724.2 329.6 L725.7 330.5 L727.2 331.4 L728.7 332.2 L730.2 332.5 L731.7 332.4 L733.2 331.8 L734.7 331.0 L736.2 330.0 L737.7 329.2 L739.2 328.8 L740.7 328.7 L742.2 329.2 L743.7 329.9 L745.2 330.9 L746.7 331.7 L748.2 332.3 L749.8 332.5 L751.3 332.2 L752.8 331.5 L754.3 330.6 L755.8 329.7 L757.3 329.0 L758.8 328.7 L760.3 328.8 L761.8 329.4 L763.3 330.3 L764.8 331.2 L766.3 332.0 L767.8 332.4 L769.3 332.4 L770.8 332.0 L772.3 331.2 L773.8 330.3 L775.3 329.4 L776.9 328.9 L778.4 328.7 L779.9 329.0 L781.4 329.7 L782.9 330.6 L784.4 331.5 L785.9 332.2 L787.4 332.5 L788.9 332.3 L790.4 331.8 L791.9 330.9 L793.4 330.0 L794.9 329.2 L796.4 328.8 L797.9 328.8 L799.4 329.2 L800.9 330.0 L802.5 330.9 L804.0 331.8 L805.5 332.4 L807.0 332.5 L808.5 332.2 L810.0 331.5 L811.5 330.6 L813.0 329.7 L814.5 329.0 L816.0 328.7 L817.5 328.9 L819.0 329.5 L820.5 330.3 L822.0 331.3 L823.5 332.0 L825.0 332.5 L826.5 332.4 L828.0 332.0 L829.5 331.2 L831.1 330.2 L832.6 329.4 L834.1 328.8 L835.6 328.7 L837.1 329.1 L838.6 329.8 L840.1 330.7 L841.6 331.6 L843.1 332.2 L844.6 332.5 L846.1 332.3 L847.6 331.7 L849.1 330.8 L850.6 329.9 L852.1 329.1 L853.6 328.7 L855.1 328.8 L856.6 329.3 L858.2 330.1 L859.7 331.0 L861.2 331.8 L862.7 332.4 L864.2 332.5 L865.7 332.1 L867.2 331.4 L868.7 330.5 L870.2 329.6 L871.7 328.9 L873.2 328.7 L874.7 328.9 L876.2 329.5 L877.7 330.4 L879.2 331.3 L880.7 332.1 L882.2 332.5 L883.8 332.4 L885.3 331.9 L886.8 331.1 L888.3 330.1 L889.8 329.3 L891.3 328.8 L892.8 328.7 L894.3 329.1 L895.8 329.8 L897.3 330.8 L898.1 332.1 L898.7 333.6 L899.0 335.1 L898.8 336.6 L898.3 338.2 L897.5 339.7 L896.7 341.2 L896.0 342.7 L895.6 344.2 L895.7 345.7 L896.1 347.2 L896.8 348.7 L897.6 350.3 L898.4 351.8 L898.9 353.3 L899.0 354.8 L898.7 356.3 L898.0 357.8 L897.2 359.3 L896.4 360.8 L895.8 362.4 L895.6 363.9 L895.8 365.4 L896.4 366.9 L897.3 368.6 L895.8 367.6 L894.3 366.9 L892.8 366.5 L891.3 366.6 L889.8 367.1 L888.3 367.9 L886.8 368.9 L885.3 369.7 L883.8 370.2 L882.2 370.3 L880.7 369.9 L879.2 369.1 L877.7 368.2 L876.2 367.3 L874.7 366.7 L873.2 366.5 L871.7 366.7 L870.2 367.4 L868.7 368.3 L867.2 369.2 L865.7 369.9 L864.2 370.3 L862.7 370.2 L861.2 369.6 L859.7 368.8 L858.2 367.9 L856.6 367.1 L855.1 366.6 L853.6 366.5 L852.1 366.9 L850.6 367.7 L849.1 368.6 L847.6 369.5 L846.1 370.1 L844.6 370.3 L843.1 370.0 L841.6 369.4 L840.1 368.5 L838.6 367.6 L837.1 366.9 L835.6 366.5 L834.1 366.6 L832.6 367.2 L831.1 368.0 L829.5 369.0 L828.0 369.8 L826.5 370.2 L825.0 370.3 L823.5 369.8 L822.0 369.1 L820.5 368.1 L819.0 367.3 L817.5 366.7 L816.0 366.5 L814.5 366.8 L813.0 367.5 L811.5 368.4 L810.0 369.3 L808.5 370.0 L807.0 370.3 L805.5 370.2 L804.0 369.6 L802.4 368.7 L800.9 367.8 L799.4 367.0 L797.9 366.6 L796.4 366.6 L794.9 367.0 L793.4 367.8 L791.9 368.7 L790.4 369.6 L788.9 370.1 L787.4 370.3 L785.9 370.0 L784.4 369.3 L782.9 368.4 L781.4 367.5 L779.9 366.8 L778.4 366.5 L776.9 366.7 L775.4 367.2 L773.8 368.1 L772.3 369.0 L770.8 369.8 L769.3 370.2 L767.8 370.2 L766.3 369.8 L764.8 369.0 L763.3 368.1 L761.8 367.2 L760.3 366.6 L758.8 366.5 L757.3 366.8 L755.8 367.5 L754.3 368.4 L752.8 369.3 L751.3 370.0 L749.8 370.3 L748.2 370.1 L746.7 369.5 L745.2 368.7 L743.7 367.7 L742.2 367.0 L740.7 366.5 L739.2 366.6 L737.7 367.0 L736.2 367.8 L734.7 368.8 L733.2 369.6 L731.7 370.2 L730.2 370.3 L728.7 370.0 L727.2 369.2 L725.7 368.3 L724.2 367.4 L722.7 366.8 L721.1 366.5 L719.6 366.7 L718.1 367.3 L716.6 368.2 L715.1 369.1 L713.6 369.9 L712.1 370.3 L710.6 370.2 L709.1 369.7 L707.6 368.9 L706.1 368.0 L704.6 367.2 L703.1 366.6 L701.6 366.5 L700.1 366.9 L698.6 367.6 L697.1 368.5 L695.6 369.4 L694.0 370.1 L692.5 370.3 L691.0 370.1 L689.5 369.5 L688.0 368.6 L686.5 367.7 L685.0 366.9 L683.5 366.5 L682.0 366.6 L680.5 367.1 L679.0 367.9 L677.5 368.8 L676.0 369.7 L674.5 370.2 L673.0 370.3 L671.5 369.9 L670.0 369.2 L668.5 368.2 L667.0 367.4 L665.4 366.7 L663.9 366.5 L662.4 366.7 L660.9 367.4 L659.4 368.2 L657.9 369.2 L656.4 369.9 L654.9 370.3 L653.4 370.2 L651.9 369.7 L650.4 368.8 L648.9 367.9 L647.4 367.1 L645.9 366.6 L644.4 366.5 L642.9 366.9 L641.4 367.7 L639.8 368.6 L638.3 369.5 L636.8 370.1 L635.3 370.3 L633.8 370.1 L632.3 369.4 L630.8 368.5 L629.3 367.6 L627.8 366.9 L626.3 366.5 L624.8 366.6 L623.3 367.2 L621.8 368.0 L620.3 368.9 L618.8 369.7 L617.3 370.2 L615.8 370.3 L614.3 369.9 L612.8 369.1 L611.2 368.2 L609.7 367.3 L608.2 366.7 L606.7 366.5 L605.2 366.8 L603.7 367.4 L602.2 368.3 L600.7 369.2 L599.2 370.0 L597.7 370.3 L596.2 370.2 L594.7 369.6 L593.2 368.8 L591.7 367.8 L590.2 367.0 L588.7 366.6 L587.2 366.5 L585.6 367.0 L584.1 367.7 L582.6 368.7 L581.1 369.5 L579.6 370.1 L578.1 370.3 L576.6 370.0 L575.1 369.3 L573.6 368.4 L572.1 367.5 L570.6 366.8 L569.1 366.5 L567.6 366.6 L566.1 367.2 L564.6 368.1 L563.1 369.0 L561.6 369.8 L560.1 370.2 L558.5 370.2 L557.0 369.8 L555.5 369.0 L554.0 368.1 L552.5 367.2 L551.0 366.7 L549.5 366.5 L548.0 366.8 L546.5 367.5 L545.0 368.4 L544.1 366.9 L543.5 365.4 L543.3 363.9 L543.5 362.4 L544.1 360.8 L544.9 359.3 L545.7 357.8 L546.4 356.3 L546.7 354.8 L546.6 353.3 L546.1 351.8 L545.3 350.3 L544.5 348.7 L543.8 347.2 L543.4 345.7 L543.3 344.2 L543.7 342.7 L544.4 341.2 L545.2 339.7 L546.0 338.2 L546.5 336.6 L546.7 335.1 L546.4 333.6 L545.8 332.1 Z" fill="none" stroke="#cdcdcd" stroke-width="1.1"/>
<path d="M466.6 404.1 L468.1 403.2 L469.6 402.3 L471.1 401.5 L472.6 401.1 L474.1 401.2 L475.6 401.7 L477.1 402.5 L478.7 403.5 L480.2 404.3 L481.7 404.8 L483.2 404.9 L484.7 404.5 L486.2 403.8 L487.7 402.8 L489.2 402.0 L490.7 401.3 L492.2 401.1 L493.7 401.3 L495.2 402.0 L496.7 402.9 L498.2 403.8 L499.7 404.5 L501.3 404.9 L502.8 404.8 L504.3 404.3 L505.8 403.4 L507.3 402.5 L508.8 401.7 L510.3 401.2 L511.8 401.1 L513.3 401.5 L514.8 402.3 L516.3 403.2 L517.8 404.1 L519.3 404.7 L520.8 404.9 L522.3 404.6 L523.9 404.0 L525.4 403.1 L526.9 402.2 L528.4 401.5 L529.9 401.1 L531.4 401.2 L532.9 401.8 L534.4 402.6 L535.9 403.6 L537.4 404.4 L538.9 404.8 L540.4 404.9 L541.9 404.4 L543.4 403.7 L544.9 402.7 L546.4 401.9 L548.0 401.3 L549.5 401.1 L551.0 401.4 L552.5 402.1 L554.0 403.0 L555.5 403.9 L557.0 404.6 L558.5 404.9 L560.0 404.7 L561.5 404.2 L563.0 403.3 L564.5 402.4 L566.0 401.6 L567.5 401.2 L569.0 401.2 L570.6 401.6 L572.1 402.4 L573.6 403.3 L575.1 404.2 L576.6 404.7 L578.1 404.9 L579.6 404.6 L581.1 403.9 L582.6 403.0 L584.1 402.1 L585.6 401.4 L587.1 401.1 L588.6 401.3 L590.1 401.9 L591.6 402.7 L593.2 403.7 L594.7 404.4 L596.2 404.9 L597.7 404.8 L599.2 404.4 L600.7 403.6 L602.2 402.6 L603.7 401.8 L605.2 401.2 L606.7 401.1 L608.2 401.4 L609.7 402.2 L611.2 403.1 L612.7 404.0 L614.2 404.6 L615.8 404.9 L617.3 404.7 L618.8 404.1 L620.3 403.2 L621.8 402.3 L623.3 401.5 L624.8 401.1 L626.3 401.2 L627.8 401.7 L629.3 402.5 L630.8 403.4 L632.3 404.2 L633.8 404.8 L635.3 404.9 L636.8 404.5 L638.4 403.8 L639.9 402.9 L641.4 402.0 L642.9 401.3 L644.4 401.1 L645.9 401.3 L647.4 401.9 L648.9 402.8 L650.4 403.7 L651.9 404.5 L653.4 404.9 L654.9 404.8 L656.4 404.3 L657.9 403.5 L659.4 402.5 L660.9 401.7 L662.5 401.2 L664.0 401.1 L665.5 401.5 L667.0 402.2 L668.5 403.2 L670.0 404.0 L671.5 404.7 L673.0 404.9 L674.5 404.7 L676.0 404.0 L677.5 403.1 L679.0 402.2 L680.5 401.5 L682.0 401.1 L683.5 401.2 L685.1 401.7 L686.6 402.6 L688.1 403.5 L689.6 404.3 L691.1 404.8 L692.6 404.9 L694.1 404.5 L695.6 403.7 L697.0 404.5 L697.3 406.0 L697.2 407.5 L696.6 409.0 L695.9 410.5 L695.1 412.0 L694.4 413.5 L694.0 415.0 L693.9 416.5 L694.3 418.0 L695.0 419.5 L695.9 421.0 L696.6 422.5 L697.1 424.0 L697.3 425.5 L697.0 427.0 L696.4 428.5 L695.6 430.0 L694.8 431.5 L694.2 433.0 L693.9 434.5 L694.0 436.0 L694.5 437.5 L695.6 439.7 L694.1 440.5 L692.6 440.9 L691.1 440.8 L689.6 440.3 L688.1 439.5 L686.6 438.6 L685.1 437.7 L683.5 437.2 L682.0 437.1 L680.5 437.5 L679.0 438.2 L677.5 439.1 L676.0 440.0 L674.5 440.7 L673.0 440.9 L671.5 440.7 L670.0 440.0 L668.5 439.2 L667.0 438.2 L665.5 437.5 L664.0 437.1 L662.5 437.2 L660.9 437.7 L659.4 438.5 L657.9 439.5 L656.4 440.3 L654.9 440.8 L653.4 440.9 L651.9 440.5 L650.4 439.7 L648.9 438.8 L647.4 437.9 L645.9 437.3 L644.4 437.1 L642.9 437.3 L641.4 438.0 L639.9 438.9 L638.4 439.8 L636.8 440.5 L635.3 440.9 L633.8 440.8 L632.3 440.2 L630.8 439.4 L629.3 438.5 L627.8 437.7 L626.3 437.2 L624.8 437.1 L623.3 437.5 L621.8 438.3 L620.3 439.2 L618.8 440.1 L617.3 440.7 L615.8 440.9 L614.2 440.6 L612.7 440.0 L611.2 439.1 L609.7 438.2 L608.2 437.4 L606.7 437.1 L605.2 437.2 L603.7 437.8 L602.2 438.6 L600.7 439.6 L599.2 440.4 L597.7 440.8 L596.2 440.9 L594.7 440.4 L593.2 439.7 L591.6 438.7 L590.1 437.9 L588.6 437.3 L587.1 437.1 L585.6 437.4 L584.1 438.1 L582.6 439.0 L581.1 439.9 L579.6 440.6 L578.1 440.9 L576.6 440.7 L575.1 440.2 L573.6 439.3 L572.1 438.4 L570.6 437.6 L569.0 437.2 L567.5 437.2 L566.0 437.6 L564.5 438.4 L563.0 439.3 L561.5 440.2 L560.0 440.7 L558.5 440.9 L557.0 440.6 L555.5 439.9 L554.0 439.0 L552.5 438.1 L551.0 437.4 L549.5 437.1 L548.0 437.3 L546.4 437.9 L544.9 438.7 L543.4 439.7 L541.9 440.4 L540.4 440.9 L538.9 440.8 L537.4 440.4 L535.9 439.6 L534.4 438.6 L532.9 437.8 L531.4 437.2 L529.9 437.1 L528.4 437.5 L526.9 438.2 L525.4 439.1 L523.9 440.0 L522.3 440.6 L520.8 440.9 L519.3 440.7 L517.8 440.1 L516.3 439.2 L514.8 438.3 L513.3 437.5 L511.8 437.1 L510.3 437.2 L508.8 437.7 L507.3 438.5 L505.8 439.4 L504.3 440.3 L502.8 440.8 L501.3 440.9 L499.7 440.5 L498.2 439.8 L496.7 438.9 L495.2 438.0 L493.7 437.3 L492.2 437.1 L490.7 437.3 L489.2 438.0 L487.7 438.8 L486.2 439.8 L484.7 440.5 L483.2 440.9 L481.7 440.8 L480.2 440.3 L478.7 439.5 L477.1 438.5 L475.6 437.7 L474.1 437.2 L472.6 437.1 L471.1 437.5 L469.6 438.3 L468.1 439.2 L466.6 440.1 L465.5 437.5 L465.0 436.0 L464.9 434.5 L465.2 433.0 L465.8 431.5 L466.6 430.0 L467.4 428.5 L468.0 427.0 L468.3 425.5 L468.1 424.0 L467.6 422.5 L466.9 421.0 L466.0 419.5 L465.3 418.0 L464.9 416.5 L465.0 415.0 L465.4 413.5 L466.1 412.0 L466.9 410.5 L467.6 409.0 L468.2 407.5 L468.3 406.0 L468.0 404.5 Z" fill="#fff" stroke="#c6c6c6" stroke-width="1.1"/>
<rect x="468" y="399" width="226" height="37" fill="#f9d0e4"/>
<path d="M758.6 404.1 L760.1 403.2 L761.6 402.3 L763.1 401.5 L764.6 401.1 L766.1 401.2 L767.6 401.7 L769.1 402.5 L770.7 403.5 L772.2 404.3 L773.7 404.8 L775.2 404.9 L776.7 404.5 L778.2 403.8 L779.7 402.8 L781.2 402.0 L782.7 401.3 L784.2 401.1 L785.7 401.3 L787.2 402.0 L788.7 402.9 L790.2 403.8 L791.7 404.5 L793.3 404.9 L794.8 404.8 L796.3 404.3 L797.8 403.4 L799.3 402.5 L800.8 401.7 L802.3 401.2 L803.8 401.1 L805.3 401.5 L806.8 402.3 L808.3 403.2 L809.8 404.1 L811.3 404.7 L812.8 404.9 L814.3 404.6 L815.9 404.0 L817.4 403.1 L818.9 402.2 L820.4 401.5 L821.9 401.1 L823.4 401.2 L824.9 401.8 L826.4 402.6 L827.9 403.6 L829.4 404.4 L830.9 404.8 L832.4 404.9 L833.9 404.4 L835.4 403.7 L836.9 402.7 L838.4 401.9 L840.0 401.3 L841.5 401.1 L843.0 401.4 L844.5 402.1 L846.0 403.0 L847.5 403.9 L849.0 404.6 L850.5 404.9 L852.0 404.7 L853.5 404.2 L855.0 403.3 L856.5 402.4 L858.0 401.6 L859.5 401.2 L861.0 401.2 L862.6 401.6 L864.1 402.4 L865.6 403.3 L867.1 404.2 L868.6 404.7 L870.1 404.9 L871.6 404.6 L873.1 403.9 L874.6 403.0 L876.1 402.1 L877.6 401.4 L879.1 401.1 L880.6 401.3 L882.1 401.9 L883.6 402.7 L885.2 403.7 L886.7 404.4 L888.2 404.9 L889.7 404.8 L891.2 404.4 L892.7 403.6 L894.2 402.6 L895.7 401.8 L897.2 401.2 L898.7 401.1 L900.2 401.4 L901.7 402.2 L903.2 403.1 L904.7 404.0 L906.2 404.6 L907.8 404.9 L909.3 404.7 L910.8 404.1 L912.3 403.2 L913.8 402.3 L915.3 401.5 L916.8 401.1 L918.3 401.2 L919.8 401.7 L921.3 402.5 L922.8 403.4 L924.3 404.2 L925.8 404.8 L927.3 404.9 L928.8 404.5 L930.4 403.8 L931.9 402.9 L933.4 402.0 L934.9 401.3 L936.4 401.1 L937.9 401.3 L939.4 401.9 L940.9 402.8 L942.4 403.7 L943.9 404.5 L945.4 404.9 L946.9 404.8 L948.4 404.3 L949.9 403.5 L951.4 402.5 L952.9 401.7 L954.5 401.2 L956.0 401.1 L957.5 401.5 L959.0 402.2 L960.5 403.2 L962.0 404.0 L963.5 404.7 L965.0 404.9 L966.5 404.7 L968.0 404.0 L969.5 403.1 L971.0 402.2 L972.5 401.5 L974.0 401.1 L975.5 401.2 L977.1 401.7 L978.6 402.6 L980.1 403.5 L981.6 404.3 L983.1 404.8 L984.6 404.9 L986.1 404.5 L987.6 403.7 L989.0 404.5 L989.3 406.0 L989.2 407.5 L988.6 409.0 L987.9 410.5 L987.1 412.0 L986.4 413.5 L986.0 415.0 L985.9 416.5 L986.3 418.0 L987.0 419.5 L987.9 421.0 L988.6 422.5 L989.1 424.0 L989.3 425.5 L989.0 427.0 L988.4 428.5 L987.6 430.0 L986.8 431.5 L986.2 433.0 L985.9 434.5 L986.0 436.0 L986.5 437.5 L987.6 439.7 L986.1 440.5 L984.6 440.9 L983.1 440.8 L981.6 440.3 L980.1 439.5 L978.6 438.6 L977.1 437.7 L975.5 437.2 L974.0 437.1 L972.5 437.5 L971.0 438.2 L969.5 439.1 L968.0 440.0 L966.5 440.7 L965.0 440.9 L963.5 440.7 L962.0 440.0 L960.5 439.2 L959.0 438.2 L957.5 437.5 L956.0 437.1 L954.5 437.2 L952.9 437.7 L951.4 438.5 L949.9 439.5 L948.4 440.3 L946.9 440.8 L945.4 440.9 L943.9 440.5 L942.4 439.7 L940.9 438.8 L939.4 437.9 L937.9 437.3 L936.4 437.1 L934.9 437.3 L933.4 438.0 L931.9 438.9 L930.4 439.8 L928.8 440.5 L927.3 440.9 L925.8 440.8 L924.3 440.2 L922.8 439.4 L921.3 438.5 L919.8 437.7 L918.3 437.2 L916.8 437.1 L915.3 437.5 L913.8 438.3 L912.3 439.2 L910.8 440.1 L909.3 440.7 L907.8 440.9 L906.2 440.6 L904.7 440.0 L903.2 439.1 L901.7 438.2 L900.2 437.4 L898.7 437.1 L897.2 437.2 L895.7 437.8 L894.2 438.6 L892.7 439.6 L891.2 440.4 L889.7 440.8 L888.2 440.9 L886.7 440.4 L885.2 439.7 L883.6 438.7 L882.1 437.9 L880.6 437.3 L879.1 437.1 L877.6 437.4 L876.1 438.1 L874.6 439.0 L873.1 439.9 L871.6 440.6 L870.1 440.9 L868.6 440.7 L867.1 440.2 L865.6 439.3 L864.1 438.4 L862.6 437.6 L861.0 437.2 L859.5 437.2 L858.0 437.6 L856.5 438.4 L855.0 439.3 L853.5 440.2 L852.0 440.7 L850.5 440.9 L849.0 440.6 L847.5 439.9 L846.0 439.0 L844.5 438.1 L843.0 437.4 L841.5 437.1 L840.0 437.3 L838.4 437.9 L836.9 438.7 L835.4 439.7 L833.9 440.4 L832.4 440.9 L830.9 440.8 L829.4 440.4 L827.9 439.6 L826.4 438.6 L824.9 437.8 L823.4 437.2 L821.9 437.1 L820.4 437.5 L818.9 438.2 L817.4 439.1 L815.9 440.0 L814.3 440.6 L812.8 440.9 L811.3 440.7 L809.8 440.1 L808.3 439.2 L806.8 438.3 L805.3 437.5 L803.8 437.1 L802.3 437.2 L800.8 437.7 L799.3 438.5 L797.8 439.4 L796.3 440.3 L794.8 440.8 L793.3 440.9 L791.7 440.5 L790.2 439.8 L788.7 438.9 L787.2 438.0 L785.7 437.3 L784.2 437.1 L782.7 437.3 L781.2 438.0 L779.7 438.8 L778.2 439.8 L776.7 440.5 L775.2 440.9 L773.7 440.8 L772.2 440.3 L770.7 439.5 L769.1 438.5 L767.6 437.7 L766.1 437.2 L764.6 437.1 L763.1 437.5 L761.6 438.3 L760.1 439.2 L758.6 440.1 L757.5 437.5 L757.0 436.0 L756.9 434.5 L757.2 433.0 L757.8 431.5 L758.6 430.0 L759.4 428.5 L760.0 427.0 L760.3 425.5 L760.1 424.0 L759.6 422.5 L758.9 421.0 L758.0 419.5 L757.3 418.0 L756.9 416.5 L757.0 415.0 L757.4 413.5 L758.1 412.0 L758.9 410.5 L759.6 409.0 L760.2 407.5 L760.3 406.0 L760.0 404.5 Z" fill="#fff" stroke="#c6c6c6" stroke-width="1.1"/>
<rect x="760" y="399" width="226" height="37" fill="#f9d0e4"/>
<g fill="#fff" stroke="#111" stroke-width="1" stroke-linejoin="miter">
<path d="M654.300 371.300 L653.200 376.200 L658.600 377.600 L634.500 392.600 L636.600 396.300 L624.800 395.500 L628 383.700 L630.100 387 Z"/>
<path d="M776.700 371.700 L778.300 376.200 L772.300 377.800 L796.500 392.900 L794.400 396.600 L806.800 395.500 L803.300 383.700 L800.900 387.400 Z"/>
<path d="M581.500 444.500 L585.500 447 L589.500 444.500 V461.500 H593 L585.300 468.300 L577.500 461.500 H581.500 Z"/>
<path d="M868.500 444.500 L872.500 447 L876.500 444.500 V461.500 H880 L872.300 468.300 L864.500 461.500 H868.500 Z"/>
<rect x="453.500" y="468.500" width="242" height="116"/>
<rect x="773.500" y="468.500" width="193" height="116"/>
</g></svg>
<div class="a" style="left:289px;top:654px;width:5px;height:6px;background:#5b8fd6;border:1px solid #3a63a8;box-sizing:border-box;"></div>
<div class="a" style="left:1079px;top:654px;width:5px;height:6px;background:#5b8fd6;border:1px solid #3a63a8;box-sizing:border-box;"></div>
<span class="t" style='left:960.0px;top:297px;font-size:16px;color:#000;font-style:italic;letter-spacing:1.335px;'>3-сызба</span>
<span class="t" style='left:600.0px;top:339px;font-size:16.2px;color:#000;font-family:"Liberation Serif", serif;font-weight:bold;letter-spacing:-0.151px;-webkit-text-stroke:0.25px #000;'>ЭКОЖҮЙЕ  КОМПОНЕНТТЕРІ</span>
<span class="t" style='left:507.6px;top:408px;font-size:16.5px;color:#000;font-family:"Liberation Serif", serif;font-weight:bold;font-style:italic;letter-spacing:1.646px;word-spacing:-3.5px;-webkit-text-stroke:0.25px #000;'>Жансыз табиғат</span>
<span class="t" style='left:819.3px;top:408px;font-size:16.5px;color:#000;font-family:"Liberation Serif", serif;font-weight:bold;font-style:italic;letter-spacing:1.342px;word-spacing:-3.5px;-webkit-text-stroke:0.25px #000;'>Тірі табиғат</span>
<span class="t" style='left:464.6px;top:475px;font-size:14.4px;color:#000;font-family:"Liberation Serif", serif;font-weight:bold;letter-spacing:-0.212px;-webkit-text-stroke:0.25px #000;'>КЛИМАТ</span>
<span class="t" style='left:464.6px;top:493px;font-size:14.4px;color:#000;font-family:"Liberation Serif", serif;font-weight:bold;letter-spacing:0.045px;-webkit-text-stroke:0.25px #000;'>ЫЛҒАЛДЫЛЫҚ</span>
<span class="t" style='left:464.6px;top:509px;font-size:14.4px;color:#000;font-family:"Liberation Serif", serif;font-weight:bold;letter-spacing:-0.100px;-webkit-text-stroke:0.25px #000;'>ТОПЫРАҚ</span>
<span class="t" style='left:464.6px;top:526px;font-size:14.4px;color:#000;font-family:"Liberation Serif", serif;font-weight:bold;letter-spacing:0.102px;-webkit-text-stroke:0.25px #000;'>СУ МЕН  АУАНЫҢ  ҚҰРАМЫ</span>
<span class="t" style='left:464.6px;top:544px;font-size:14.4px;color:#000;font-family:"Liberation Serif", serif;font-weight:bold;letter-spacing:-0.067px;-webkit-text-stroke:0.25px #000;'>ЫЛҒАЛДЫҢ  МӨЛШЕРІ</span>
<span class="t" style='left:788.7px;top:482px;font-size:14.4px;color:#000;font-family:"Liberation Serif", serif;font-weight:bold;letter-spacing:-0.388px;-webkit-text-stroke:0.25px #000;'>ӨСІМДІК</span>
<span class="t" style='left:788.7px;top:500px;font-size:14.4px;color:#000;font-family:"Liberation Serif", serif;font-weight:bold;letter-spacing:0.326px;-webkit-text-stroke:0.25px #000;'>ЖАНУАРЛАР</span>
<span class="t" style='left:788.7px;top:517px;font-size:14.4px;color:#000;font-family:"Liberation Serif", serif;font-weight:bold;letter-spacing:0.388px;-webkit-text-stroke:0.25px #000;'>САҢЫРАУҚҰЛАҚТАР</span>
<span class="t" style='left:788.7px;top:534px;font-size:14.4px;color:#000;font-family:"Liberation Serif", serif;font-weight:bold;letter-spacing:-0.366px;-webkit-text-stroke:0.25px #000;'>ҚЫНАЛАР</span>
<span class="t" style='left:788.7px;top:552px;font-size:14.4px;color:#000;font-family:"Liberation Serif", serif;font-weight:bold;letter-spacing:0.096px;-webkit-text-stroke:0.25px #000;'>МИКРОАҒЗАЛАР</span>
<div class="a" id="status" style="left:0;top:706px;width:1366px;height:22px;background:linear-gradient(180deg,#8fb1e2 0,#e3eefb 1px,#d5e4f8 8px,#c3d8f5 10px,#c0d6f4 17px,#d3e3f8 21px,#9ab5dc 22px);"></div>
<div class="a" style="left:1084px;top:707px;width:282px;height:20px;background:linear-gradient(180deg,#b9d1f2 0,#a3c1ec 9px,#8fb2e6 10px,#8aaee4 16px,#9dbdeb 20px);box-shadow:-1px 0 0 #7f9fd3, -2px 0 0 rgba(255,255,255,.6);"></div>
<div class="a" style="left:122px;top:708px;width:1px;height:18px;background:#9db9e4;box-shadow:1px 0 0 #f2f7fd;"></div>
<div class="a" style="left:239px;top:708px;width:1px;height:18px;background:#9db9e4;box-shadow:1px 0 0 #f2f7fd;"></div>
<div class="a" style="left:355px;top:708px;width:1px;height:18px;background:#9db9e4;box-shadow:1px 0 0 #f2f7fd;"></div>
<div class="a" style="left:1090px;top:708px;width:93px;height:18px;box-sizing:border-box;border:1px solid #7e9fd2;border-radius:3px;background:linear-gradient(180deg,#cfe0f7 0,#b8d0f1 50%,#a5c3ed 51%,#bcd3f3 100%);"></div>
<div class="a" style="left:1091px;top:709px;width:18px;height:16px;background:linear-gradient(180deg,#fde3a4 0,#fbc95a 50%,#f9b530 51%,#fdd372 100%);border-radius:2px 0 0 2px;box-shadow:inset 0 0 0 1px rgba(190,130,40,.6);"></div>
<div class="a" style="left:1109px;top:709px;width:1px;height:16px;background:#8fb0e0;box-shadow:1px 0 0 rgba(255,255,255,.5);"></div>
<div class="a" style="left:1127px;top:709px;width:1px;height:16px;background:#8fb0e0;box-shadow:1px 0 0 rgba(255,255,255,.5);"></div>
<div class="a" style="left:1146px;top:709px;width:1px;height:16px;background:#8fb0e0;box-shadow:1px 0 0 rgba(255,255,255,.5);"></div>
<div class="a" style="left:1164px;top:709px;width:1px;height:16px;background:#8fb0e0;box-shadow:1px 0 0 rgba(255,255,255,.5);"></div>
<svg style="left:1090px;top:708px" width="93" height="18" viewBox="0 0 93 18">
<rect x="4.500" y="3.500" width="11" height="11.500" fill="#fff" stroke="#444" stroke-width=".9"/><g stroke="#444" stroke-width=".9"><line x1="6.500" y1="6.500" x2="13.500" y2="6.500"/><line x1="6.500" y1="8.500" x2="13.500" y2="8.500"/><line x1="6.500" y1="10.500" x2="13.500" y2="10.500"/><line x1="6.500" y1="12.500" x2="13.500" y2="12.500"/></g>
<path d="M22.500 4.500 h5.500 l1 1 l1 -1 h5.500 v9.500 h-5.500 l-1 1.500 l-1 -1.500 h-5.500 z" fill="#fdfdfd" stroke="#444" stroke-width=".9"/><path d="M29 5.500 v9" stroke="#444" stroke-width=".8"/><g stroke="#777" stroke-width=".7"><path d="M24 7 h3.500 M24 9 h3.500 M24 11 h3.500 M30.500 7 h3.500 M30.500 9 h3.500 M30.500 11 h3.500"/></g>
<rect x="40.500" y="3.500" width="10" height="9" fill="#fff" stroke="#444" stroke-width=".9"/><g stroke="#555" stroke-width=".8"><path d="M42 6 h7 M42 8 h7 M42 10 h4"/></g><circle cx="51" cy="12" r="3.300" fill="#3f86d8" stroke="#1d4f8f" stroke-width=".6"/><path d="M49 11 q2 -2 3.500 0 q-1 2 -3.500 0z" fill="#59b54a"/>
<g stroke="#555" stroke-width="1"><path d="M59 4.500 h2 M63 4.500 h8 M62 7.500 h2 M66 7.500 h5 M62 10.500 h2 M66 10.500 h5 M59 13.500 h2 M63 13.500 h8"/></g>
<g stroke="#444" stroke-width="1"><path d="M77 4.500 h12 M77 7 h12 M77 9.500 h12 M77 12 h12 M77 14.500 h12"/></g>
</svg>
<svg style="left:1225px;top:707px" width="141" height="21" viewBox="0 0 141 21"><defs><linearGradient id="zb" x1="0" y1="0" x2="0" y2="1"><stop offset="0" stop-color="#fff"/><stop offset="1" stop-color="#c7d7ee"/></linearGradient></defs>
<line x1="18" y1="10.500" x2="120" y2="10.500" stroke="#5d7db5" stroke-width="1"/><line x1="18" y1="11.500" x2="120" y2="11.500" stroke="#e8f0fb" stroke-width="1"/>
<circle cx="10" cy="10.500" r="7.500" fill="url(#zb)" stroke="#5a79ae" stroke-width="1"/><rect x="6" y="9.300" width="8" height="2.400" fill="#3c4f78"/>
<circle cx="127.800" cy="10.500" r="7.500" fill="url(#zb)" stroke="#5a79ae" stroke-width="1"/><path d="M123.800 10.500 h8 M127.800 6.500 v8" stroke="#3c4f78" stroke-width="2.200"/>
<path d="M66 3.500 h8.500 v8.500 l-4.250 5 l-4.250 -5 z" fill="url(#zb)" stroke="#4b6aa3" stroke-width="1"/><line x1="70.250" y1="6.500" x2="70.250" y2="12" stroke="#8ea6cf" stroke-width="1"/></svg>
<span class="t" style='left:8.2px;top:712px;font-size:11.5px;color:#15428B;letter-spacing:-0.167px;'>Страница: 12 из 252</span>
<span class="t" style='left:132.4px;top:712px;font-size:11.5px;color:#15428B;letter-spacing:-0.335px;'>Число слов: 47 915</span>
<span class="t" style='left:248.3px;top:712px;font-size:11.5px;color:#15428B;letter-spacing:-0.052px;'>Английский (США)</span>
<span class="t" style='left:1190.6px;top:712px;font-size:11.5px;color:#15428B;letter-spacing:-0.505px;'>120%</span>
<div class="a" id="taskbar" style="left:0;top:728px;width:1366px;height:40px;background:#3a2f33;overflow:hidden;">
<svg style="left:0;top:0" width="1366" height="40" viewBox="0 0 1366 40"><defs><filter id="bl" x="-10%" y="-100%" width="120%" height="300%"><feGaussianBlur stdDeviation="9 5"/></filter>
<linearGradient id="tbb" x1="0" y1="0" x2="1" y2="0"><stop offset="0" stop-color="#1e1718"/><stop offset=".12" stop-color="#3a2f30"/><stop offset=".27" stop-color="#4a3d3f"/><stop offset=".45" stop-color="#5a4a4b"/><stop offset=".62" stop-color="#4c3d42"/><stop offset=".8" stop-color="#34292d"/><stop offset="1" stop-color="#2a2124"/></linearGradient></defs>
<rect width="1366" height="40" fill="url(#tbb)"/>
<g filter="url(#bl)">
<path d="M330 18 L700 8 L900 12 L1010 10 L1010 44 L330 44 Z" fill="#5b4b49" opacity=".85"/>
<path d="M350 -4 L690 -4 L660 20 L420 22 Z" fill="#2e2329" opacity=".9"/>
<path d="M520 46 L600 30 L690 20 L760 32 L700 46 Z" fill="#8a776a" opacity=".85"/>
<path d="M680 20 L720 12 L800 18 L880 44 L760 44 L720 30 Z" fill="#b7a694" opacity=".9"/>
<path d="M760 2 L920 2 L930 16 L800 14 Z" fill="#6a5a57" opacity=".8"/>
<path d="M915 10 L960 12 L1000 36 L960 44 L930 30 Z" fill="#a39280" opacity=".85"/>
<path d="M870 30 L930 34 L930 46 L860 46 Z" fill="#3a2e31" opacity=".7"/>
<path d="M1010 -6 L1366 -6 L1366 46 L1030 46 Z" fill="#2a2024" opacity=".85"/>
<path d="M150 50 L185 6 L250 2 L262 30 L240 50 Z" fill="#78675f" opacity=".8"/>
<path d="M0 -5 L200 -5 L120 14 L0 24 Z" fill="#1c1416" opacity=".8"/>
</g>
<rect width="1366" height="1" fill="#15100f" opacity=".9"/><rect y="1" width="1366" height="1" fill="#fff" opacity=".22"/>

</svg>
</div>
<div class="a" style="left:60px;top:729px;width:58px;height:38px;box-sizing:border-box;border:1px solid rgba(10,8,8,.8);border-radius:3px;background:linear-gradient(180deg,rgba(255,255,255,.40) 0,rgba(255,255,255,.22) 46%,rgba(255,255,255,.08) 54%,rgba(255,255,255,.15) 100%);box-shadow:inset 0 0 0 1px rgba(255,255,255,.5);"></div>
<div class="a" style="left:173px;top:730px;width:8px;height:37px;box-sizing:border-box;border:1px solid rgba(0,0,0,.6);border-radius:0 3px 3px 0;background:rgba(255,255,255,.22);box-shadow:inset -1px 0 0 rgba(255,255,255,.4);"></div><div class="a" style="left:122px;top:729px;width:53px;height:38px;box-sizing:border-box;border:1px solid rgba(10,8,8,.8);border-radius:3px;background:linear-gradient(180deg,rgba(255,255,255,.40) 0,rgba(255,255,255,.22) 46%,rgba(255,255,255,.08) 54%,rgba(255,255,255,.15) 100%);box-shadow:inset 0 0 0 1px rgba(255,255,255,.5);"></div>
<div class="a" style="left:246px;top:729px;width:58px;height:38px;box-sizing:border-box;border:1px solid rgba(10,8,8,.8);border-radius:3px;background:linear-gradient(180deg,rgba(255,255,255,.40) 0,rgba(255,255,255,.22) 46%,rgba(255,255,255,.08) 54%,rgba(255,255,255,.15) 100%);box-shadow:inset 0 0 0 1px rgba(255,255,255,.5);"></div>
<div class="a" style="left:357px;top:730px;width:8px;height:37px;box-sizing:border-box;border:1px solid rgba(0,0,0,.6);border-radius:0 3px 3px 0;background:rgba(255,255,255,.22);box-shadow:inset -1px 0 0 rgba(255,255,255,.4);"></div><div class="a" style="left:308px;top:729px;width:51px;height:38px;box-sizing:border-box;border:1px solid rgba(10,8,8,.8);border-radius:3px;background:linear-gradient(180deg,rgba(255,255,255,.62) 0,rgba(255,255,255,.42) 46%,rgba(255,255,255,.24) 54%,rgba(255,255,255,.33) 100%);box-shadow:inset 0 0 0 1px rgba(255,255,255,.5);"></div>
<svg style="left:6px;top:728px" width="42" height="40" viewBox="0 0 42 40"><defs><radialGradient id="so" cx="50%" cy="75%" r="70%"><stop offset="0" stop-color="#5fd0f5"/><stop offset=".45" stop-color="#2a7fc4"/><stop offset="1" stop-color="#163b7a"/></radialGradient><linearGradient id="soh" x1="0" y1="0" x2="0" y2="1"><stop offset="0" stop-color="#fff" stop-opacity=".75"/><stop offset="1" stop-color="#fff" stop-opacity=".08"/></linearGradient></defs>
<circle cx="20.500" cy="19.600" r="18.300" fill="#0d1a33" opacity=".6"/><circle cx="20.500" cy="19.600" r="17.500" fill="url(#so)" stroke="#9fc4e8" stroke-opacity=".65" stroke-width="1"/>
<path d="M4.500 15 a16.500 16.500 0 0 1 32 0 q-16 6 -32 0z" fill="url(#soh)"/>
<path d="M11.500 12.500 q4 -2.500 8 -.5 l-1.800 6.800 q-4 -2 -8 .5z" fill="#e8542a"/><path d="M21 12.300 q4 2 8 -.5 l-1.800 6.800 q-4 2.500 -8 .5z" fill="#7fc241"/>
<path d="M9.300 20.800 q4 -2.500 8 -.5 l-1.800 6.800 q-4 -2 -8 .5z" fill="#2f9be0"/><path d="M18.800 20.600 q4 2 8 -.5 l-1.800 6.800 q-4 2.500 -8 .5z" fill="#fbbd1c"/></svg>
<svg style="left:74px;top:732px" width="32" height="32" viewBox="0 0 32 32"><circle cx="15.500" cy="15.600" r="15" fill="#fff"/><circle cx="15.500" cy="15.600" r="15" fill="none" stroke="#d9d9d9" stroke-width=".6"/><path d="M8.500 8.500 L15.500 16.500 L22.500 8.500 M15.500 16.300 V26" fill="none" stroke="#e3101b" stroke-width="2.500" stroke-linecap="round" stroke-linejoin="round"/></svg>
<svg style="left:129px;top:730.500px" width="40" height="37.800" viewBox="0 0 36 34"><defs><linearGradient id="fo" x1="0" y1="0" x2="0" y2="1"><stop offset="0" stop-color="#fbeaa0"/><stop offset="1" stop-color="#e9c65a"/></linearGradient><linearGradient id="fs" x1="0" y1="0" x2="0" y2="1"><stop offset="0" stop-color="#bfe6fb"/><stop offset="1" stop-color="#4fa4da"/></linearGradient></defs>
<path d="M4 8.500 l1.500 -4 h9 l1.500 2.500 h11 v6 h-23z" fill="#f3dc8a" stroke="#c9a94a" stroke-width=".7"/><rect x="6" y="3.500" width="3" height="1.500" fill="#2fae3a"/><rect x="14" y="6.500" width="3.500" height="2" fill="#d93a2b"/><rect x="22" y="8" width="3.500" height="2" fill="#2d7fe0"/>
<path d="M2.500 12 h26 l1.500 2 v13 h-27.500z" fill="url(#fo)" stroke="#c9a94a" stroke-width=".8"/>
<path d="M6 31 v-9 q0 -2 2 -2 h16 q2 0 2 2 v9 h-4.500 v-6 h-11 v6z" fill="url(#fs)" stroke="#2f7fb8" stroke-width=".8"/></svg>
<svg style="left:194px;top:730px" width="32" height="36" viewBox="0 0 32 36"><path d="M5 4.500 L26 17.600 L5 30.800 Z" fill="#fff" stroke="#2b9cf0" stroke-width="4" stroke-linejoin="round"/></svg>
<svg style="left:259px;top:732px" width="34" height="34" viewBox="0 0 34 34"><circle cx="16.500" cy="15.600" r="14.300" fill="#35b83c"/><path d="M5.500 24 L3.500 31 L12 28 Z" fill="#35b83c"/><circle cx="16.500" cy="15.600" r="4.600" fill="none" stroke="#fff" stroke-width="2.600"/><path d="M21.100 11 V17.500 a3 3 0 0 0 6 0 V15.600 a10.600 10.600 0 1 0 -5 9" fill="none" stroke="#fff" stroke-width="2.600"/></svg>
<svg style="left:316px;top:730px" width="36" height="36" viewBox="0 0 36 36"><defs><linearGradient id="wd" x1="0" y1="0" x2="1" y2="1"><stop offset="0" stop-color="#8fb4ea"/><stop offset="1" stop-color="#2a56b0"/></linearGradient></defs>
<path d="M3 6 q6 -4 13 -3 l10 1 v22 l-22 3 z" fill="url(#wd)" stroke="#254a96" stroke-width=".8"/>
<path d="M12 6 L31 8.500 L29.500 32 L9 28 Z" fill="#f6f9fe" stroke="#9fb4d8" stroke-width=".8"/>
<text x="13" y="18" font-family="Liberation Sans, sans-serif" font-weight="bold" font-style="italic" font-size="12" fill="#1f47a4" transform="rotate(6 13 18)">W</text>
<g stroke="#1f47a4" stroke-width="1.600" transform="rotate(6 20 20)"><path d="M24 11.500 h5 M24 14.500 h5 M12.500 19.500 h16.500 M12.500 22.500 h16.500 M12.500 25.500 h16.500"/></g></svg>
<svg style="left:1160px;top:745px" width="8" height="5"><path d="M0 4.500 L3.800 .5 L7.600 4.500 Z" fill="#fff"/></svg>
<svg style="left:1180px;top:741px" width="17" height="16" viewBox="0 0 17 16"><rect x="1" y="1" width="14.500" height="13.500" rx="4.500" fill="#18a0a6" stroke="#fff" stroke-width="1.600"/><path d="M5 8 h6.300 a3.100 3.100 0 1 0 -1 2.500" fill="none" stroke="#fff" stroke-width="1.900"/></svg>
<svg style="left:1204px;top:741px" width="16" height="17" viewBox="0 0 16 17"><rect x="1.500" y="2.500" width="8" height="12" rx="1" fill="none" stroke="#fff" stroke-width="1.400"/><rect x="4" y=".8" width="3" height="1.800" fill="#fff"/><path d="M8 4 v-2 M12 4 v-2" stroke="#fff" stroke-width="1.400"/><path d="M6 4 h8 v3.500 a4 4 0 0 1 -8 0z" fill="#fff"/><path d="M10 11 v3.500 h-3" fill="none" stroke="#fff" stroke-width="1.400"/></svg>
<svg style="left:1228px;top:742px" width="17" height="14" viewBox="0 0 17 14"><g fill="#fff"><rect x="1" y="10.500" width="2" height="2"/><rect x="4.500" y="8.500" width="2" height="4"/><rect x="8" y="6" width="2" height="6.500"/><rect x="11.500" y="3.500" width="2" height="9"/><rect x="14.700" y="1" width="2" height="11.500" opacity=".95"/></g></svg>
<svg style="left:1252px;top:741px" width="17" height="16" viewBox="0 0 17 16"><path d="M1 5.500 h3 l4 -4 v13 l-4 -4 h-3z" fill="#fff"/><path d="M10 5.500 q1.600 2.500 0 5 M12 3.500 q3 4.500 0 9 M14 2 q4 6 0 12" fill="none" stroke="#fff" stroke-width="1.100" opacity=".9"/></svg>
<div class="a" style="left:1352px;top:729px;width:14px;height:39px;box-sizing:border-box;border-left:1px solid rgba(0,0,0,.7);background:linear-gradient(90deg,rgba(255,255,255,.35),rgba(255,255,255,.12));box-shadow:inset 1px 0 0 rgba(255,255,255,.45);"></div>
<span class="t" style='left:1129.2px;top:740px;font-size:12px;color:#fff;letter-spacing:-0.858px;'>KK</span>
<span class="t" style='left:1300.0px;top:735px;font-size:12px;color:#fff;letter-spacing:-0.806px;'>17:19</span>
<span class="t" style='left:1286.2px;top:752px;font-size:12px;color:#fff;letter-spacing:-0.696px;'>27.07.2017</span>
</div>
</body></html>
